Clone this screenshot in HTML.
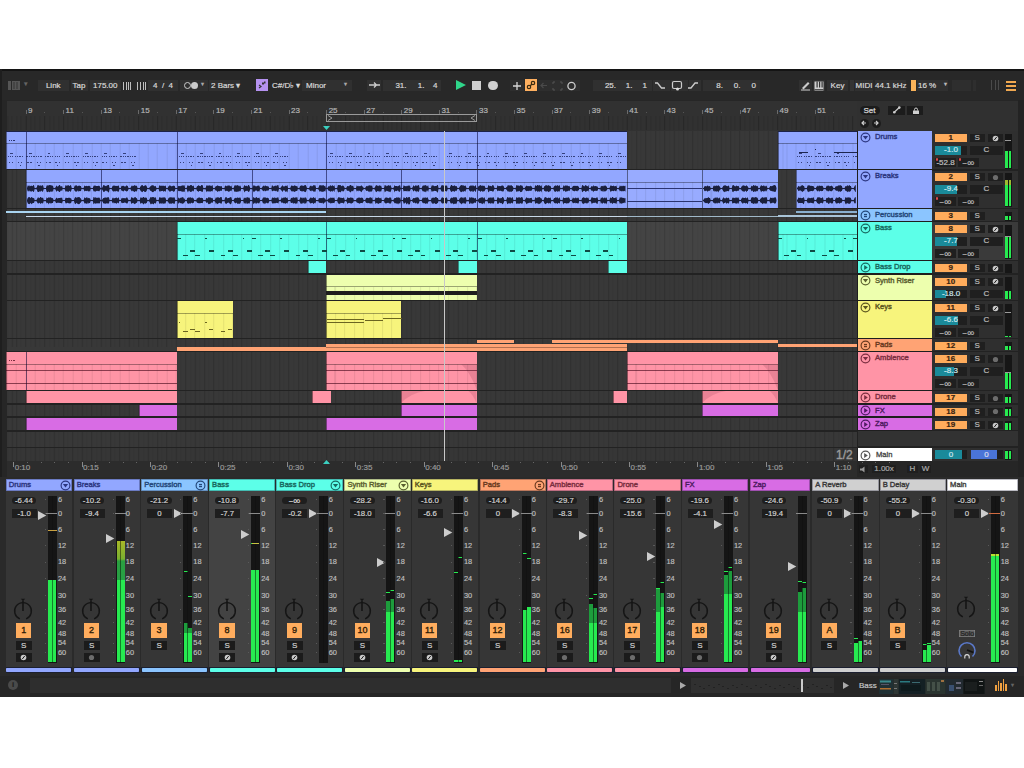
<!DOCTYPE html>
<html><head><meta charset="utf-8"><style>
html,body{margin:0;padding:0;background:#fff;width:1024px;height:768px;overflow:hidden}
body{position:relative;font-family:"Liberation Sans",sans-serif}
body>div,body>svg{position:absolute}
.t{white-space:nowrap;-webkit-text-stroke-width:0.2px}
</style></head><body>
<div style="left:0px;top:69px;width:1024px;height:628px;background:#262626;"></div>
<div style="left:0px;top:69px;width:1024px;height:31px;background:#282828;"></div>
<div style="left:0px;top:69px;width:1024px;height:1.6px;background:#141414;"></div>
<div style="left:0px;top:69px;width:1.5px;height:628px;background:#1e1e1e;"></div>
<div style="left:1018px;top:100px;width:6px;height:597px;background:#232323;"></div>
<div style="left:8px;top:81px;width:3px;height:9px;background:#555;"></div>
<div style="left:12px;top:81px;width:8px;height:9px;background:#555;"></div>
<div style="left:13px;top:82px;width:2px;height:7px;background:#444;"></div>
<div style="left:16px;top:82px;width:2px;height:7px;background:#444;"></div>
<div class="t" style="left:24px;top:80px;font-size:7px;color:#666;line-height:1;">▾</div>
<div style="left:38px;top:79.5px;width:30.5px;height:11.5px;background:#303030;"></div>
<div class="t" style="left:38px;top:79.5px;font-size:8px;color:#d8d8d8;width:30.5px;height:11.5px;line-height:11.5px;text-align:center;">Link</div>
<div style="left:70.5px;top:79.5px;width:17.0px;height:11.5px;background:#303030;"></div>
<div class="t" style="left:70.5px;top:79.5px;font-size:8px;color:#d8d8d8;width:17px;height:11.5px;line-height:11.5px;text-align:center;">Tap</div>
<div style="left:90px;top:79.5px;width:30.5px;height:11.5px;background:#303030;"></div>
<div class="t" style="left:90px;top:79.5px;font-size:8px;color:#d8d8d8;width:30.5px;height:11.5px;line-height:11.5px;text-align:center;">175.00</div>
<div style="left:123px;top:81.5px;width:1px;height:8px;background:#bdbdbd;"></div>
<div style="left:125.5px;top:81.5px;width:1px;height:8px;background:#bdbdbd;"></div>
<div style="left:128px;top:81.5px;width:1px;height:8px;background:#bdbdbd;"></div>
<div style="left:130px;top:81.5px;width:1px;height:8px;background:#bdbdbd;"></div>
<div style="left:137px;top:81.5px;width:1px;height:8px;background:#bdbdbd;"></div>
<div style="left:140px;top:81.5px;width:1px;height:8px;background:#bdbdbd;"></div>
<div style="left:142.5px;top:81.5px;width:1px;height:8px;background:#bdbdbd;"></div>
<div style="left:145px;top:81.5px;width:1px;height:8px;background:#bdbdbd;"></div>
<div style="left:148px;top:79.5px;width:30px;height:11.5px;background:#303030;"></div>
<div class="t" style="left:148px;top:79.5px;font-size:8px;color:#d8d8d8;width:30px;height:11.5px;line-height:11.5px;text-align:center;">4 &nbsp;/ &nbsp;4</div>
<div style="left:180px;top:79.5px;width:28px;height:11.5px;background:#303030;"></div>
<div style="left:183.5px;top:82px;width:5px;height:5px;border:1.2px solid #ccc;border-radius:50%"></div>
<div style="left:191px;top:82px;width:7px;height:7px;background:#ccc;border-radius:50%"></div>
<div class="t" style="left:201px;top:80.5px;font-size:6px;color:#aaa;line-height:1;">▾</div>
<div style="left:209px;top:79.5px;width:31px;height:11.5px;background:#303030;"></div>
<div class="t" style="left:211px;top:79.5px;font-size:8px;color:#d8d8d8;height:11.5px;line-height:11.5px;">2 Bars ▾</div>
<div style="left:256px;top:79px;width:12px;height:12px;background:#b592f0;"></div>
<svg style="left:257px;top:80px" width="10" height="10"><path d="M2 5 L4 6.5 L2 8" stroke="#333" stroke-width="1.2" fill="none"/><rect x="5" y="2.5" width="2" height="2" fill="#333"/><rect x="7" y="1.5" width="1.5" height="2" fill="#333"/></svg>
<div class="t" style="left:272px;top:79.5px;font-size:8px;color:#d8d8d8;height:11.5px;line-height:11.5px;">C#/D♭ ▾</div>
<div style="left:302px;top:79.5px;width:50px;height:11.5px;background:#303030;"></div>
<div class="t" style="left:306px;top:79.5px;font-size:8px;color:#d8d8d8;height:11.5px;line-height:11.5px;">Minor</div>
<div class="t" style="left:344px;top:80.5px;font-size:6px;color:#aaa;line-height:1;">▾</div>
<div style="left:367px;top:79.5px;width:14px;height:11.5px;background:#303030;"></div>
<svg style="left:368px;top:80px" width="13" height="10"><path d="M1 5 H12 M6 2.5 L8.5 5 L6 7.5" stroke="#ccc" stroke-width="1.3" fill="none"/></svg>
<div style="left:383px;top:79.5px;width:58px;height:11.5px;background:#303030;"></div>
<div class="t" style="left:386.5px;top:79.5px;font-size:8px;color:#d8d8d8;width:20px;height:11.5px;line-height:11.5px;text-align:right;">31.</div>
<div class="t" style="left:404.5px;top:79.5px;font-size:8px;color:#d8d8d8;width:20px;height:11.5px;line-height:11.5px;text-align:right;">1.</div>
<div class="t" style="left:417.5px;top:79.5px;font-size:8px;color:#d8d8d8;width:20px;height:11.5px;line-height:11.5px;text-align:right;">4</div>
<svg style="left:455px;top:79px" width="12" height="12"><path d="M1 1 L11 6 L1 11 Z" fill="#2fd68a"/></svg>
<div style="left:472px;top:80.5px;width:9px;height:9px;background:#cfcfcf;"></div>
<div style="left:488px;top:80.5px;width:9.5px;height:9.5px;background:#d0d0d0;border-radius:50%"></div>
<div style="left:510px;top:79.5px;width:14px;height:11.5px;background:#2e2e2e;"></div>
<svg style="left:512px;top:80.5px" width="10" height="10"><path d="M5 1 V9 M1 5 H9" stroke="#d8d8d8" stroke-width="1.3"/></svg>
<div style="left:525px;top:79px;width:12px;height:12px;background:#ffb060;"></div>
<svg style="left:526px;top:80px" width="10" height="10"><circle cx="3" cy="7" r="1.7" stroke="#3a2a10" stroke-width="1.2" fill="none"/><circle cx="7" cy="3" r="1.7" stroke="#3a2a10" stroke-width="1.2" fill="none"/><path d="M4 6 L6 4" stroke="#3a2a10" stroke-width="1.2"/></svg>
<div style="left:538px;top:79.5px;width:42px;height:11.5px;background:#2e2e2e;"></div>
<svg style="left:539px;top:81px" width="10" height="9"><path d="M8 4.5 H2 M4.5 2 L2 4.5 L4.5 7" stroke="#4a4a4a" stroke-width="1.2" fill="none"/></svg>
<svg style="left:552px;top:80.5px" width="11" height="10"><path d="M1 3 V1 H3 M8 1 H10 V3 M10 7 V9 H8 M3 9 H1 V7" stroke="#555" stroke-width="1" fill="none"/></svg>
<svg style="left:566px;top:80.5px" width="11" height="10"><circle cx="5.5" cy="5" r="3.6" stroke="#cfcfcf" stroke-width="1.3" fill="none"/></svg>
<div style="left:593px;top:79.5px;width:59px;height:11.5px;background:#303030;"></div>
<div class="t" style="left:596px;top:79.5px;font-size:8px;color:#d8d8d8;width:20px;height:11.5px;line-height:11.5px;text-align:right;">25.</div>
<div class="t" style="left:612.5px;top:79.5px;font-size:8px;color:#d8d8d8;width:20px;height:11.5px;line-height:11.5px;text-align:right;">1.</div>
<div class="t" style="left:627px;top:79.5px;font-size:8px;color:#d8d8d8;width:20px;height:11.5px;line-height:11.5px;text-align:right;">1</div>
<div style="left:653px;top:79.5px;width:17px;height:11.5px;background:#303030;"></div>
<svg style="left:654px;top:81px" width="12" height="9"><path d="M1 2 H3.5 L7.5 7 H11" stroke="#ccc" stroke-width="1.3" fill="none"/></svg>
<div style="left:671px;top:79.5px;width:17px;height:11.5px;background:#303030;"></div>
<svg style="left:671px;top:80px" width="14" height="12"><rect x="1.5" y="1.5" width="9" height="7" rx="1.5" stroke="#ccc" stroke-width="1.2" fill="none"/><circle cx="6.5" cy="9" r="1.5" fill="#ddd"/></svg>
<div style="left:689px;top:79.5px;width:12px;height:11.5px;background:#303030;"></div>
<svg style="left:687px;top:81px" width="12" height="9"><path d="M1 7 H4 L8 2 H11" stroke="#ccc" stroke-width="1.3" fill="none"/></svg>
<div style="left:703px;top:79.5px;width:57px;height:11.5px;background:#303030;"></div>
<div class="t" style="left:703px;top:79.5px;font-size:8px;color:#d8d8d8;width:20px;height:11.5px;line-height:11.5px;text-align:right;">8.</div>
<div class="t" style="left:720.5px;top:79.5px;font-size:8px;color:#d8d8d8;width:20px;height:11.5px;line-height:11.5px;text-align:right;">0.</div>
<div class="t" style="left:736px;top:79.5px;font-size:8px;color:#d8d8d8;width:20px;height:11.5px;line-height:11.5px;text-align:right;">0</div>
<div style="left:799px;top:79.5px;width:13px;height:11.5px;background:#303030;"></div>
<svg style="left:800px;top:80px" width="11" height="11"><path d="M2 8 L8 2 L9.5 3.5 L3.5 9.5 Z" fill="#ccc"/><rect x="1" y="9.5" width="9" height="1" fill="#ccc"/></svg>
<div style="left:813px;top:79.5px;width:12px;height:11.5px;background:#303030;"></div>
<svg style="left:814px;top:80.5px" width="10" height="10"><rect x="0.5" y="0.5" width="9" height="9" fill="#cfcfcf"/><rect x="2.5" y="0.5" width="1.2" height="6" fill="#333"/><rect x="5" y="0.5" width="1.2" height="6" fill="#333"/><rect x="7.5" y="0.5" width="1.2" height="6" fill="#333"/><rect x="0.5" y="8" width="9" height="0.8" fill="#333"/></svg>
<div style="left:827px;top:79.5px;width:21px;height:11.5px;background:#303030;"></div>
<div class="t" style="left:827px;top:79.5px;font-size:8px;color:#d8d8d8;width:21px;height:11.5px;line-height:11.5px;text-align:center;">Key</div>
<div style="left:850px;top:80px;width:4px;height:11px;background:#343434;"></div>
<div style="left:855px;top:79.5px;width:18px;height:11.5px;background:#303030;"></div>
<div class="t" style="left:855px;top:79.5px;font-size:8px;color:#d8d8d8;width:18px;height:11.5px;line-height:11.5px;text-align:center;">MIDI</div>
<div style="left:875px;top:79.5px;width:31px;height:11.5px;background:#303030;"></div>
<div class="t" style="left:875px;top:79.5px;font-size:8px;color:#d8d8d8;width:31px;height:11.5px;line-height:11.5px;text-align:center;">44.1 kHz</div>
<div style="left:911px;top:80px;width:5px;height:11px;background:#f9b35a;"></div>
<div style="left:917px;top:79.5px;width:31px;height:11.5px;background:#303030;"></div>
<div class="t" style="left:918px;top:79.5px;font-size:8px;color:#d8d8d8;height:11.5px;line-height:11.5px;">16 %</div>
<div class="t" style="left:944px;top:80.5px;font-size:6px;color:#bbb;line-height:1;">▾</div>
<div style="left:952px;top:79.5px;width:19px;height:11.5px;background:#2e2e2e;"></div>
<div style="left:973px;top:79.5px;width:3px;height:11.5px;background:#2e2e2e;"></div>
<div style="left:991px;top:80px;width:1.2px;height:10px;background:#4a4a4a;"></div>
<div style="left:994.5px;top:80px;width:1.2px;height:10px;background:#4a4a4a;"></div>
<div style="left:998px;top:80px;width:1.2px;height:10px;background:#4a4a4a;"></div>
<div style="left:1006px;top:81px;width:10px;height:1.6px;background:#f0a850;"></div>
<div style="left:1006px;top:85px;width:10px;height:1.6px;background:#f0a850;"></div>
<div style="left:1006px;top:89px;width:10px;height:1.6px;background:#f0a850;"></div>
<div style="left:7px;top:100.5px;width:850px;height:30px;background:#313131;"></div>
<div style="left:7px;top:116px;width:850px;height:14px;background-image:repeating-linear-gradient(90deg, rgba(0,0,0,0.10) 0px, rgba(0,0,0,0.10) 1px, transparent 1px, transparent 4.6975px);background-position:4.41px 0"></div>
<div style="left:857px;top:100.5px;width:161px;height:30px;background:#303030;"></div>
<div style="left:25.5px;top:109.5px;width:0.9px;height:4px;background:#6a6a6a;"></div>
<div style="left:44.29px;top:112px;width:0.9px;height:1.2px;background:#555;"></div>
<div class="t" style="left:28.0px;top:106.6px;font-size:8px;color:#b4b4b4;line-height:1;-webkit-text-stroke:0.2px #b4b4b4;">9</div>
<div style="left:63.08px;top:109.5px;width:0.9px;height:4px;background:#6a6a6a;"></div>
<div style="left:81.87px;top:112px;width:0.9px;height:1.2px;background:#555;"></div>
<div class="t" style="left:65.58px;top:106.6px;font-size:8px;color:#b4b4b4;line-height:1;-webkit-text-stroke:0.2px #b4b4b4;">11</div>
<div style="left:100.66px;top:109.5px;width:0.9px;height:4px;background:#6a6a6a;"></div>
<div style="left:119.45px;top:112px;width:0.9px;height:1.2px;background:#555;"></div>
<div class="t" style="left:103.16px;top:106.6px;font-size:8px;color:#b4b4b4;line-height:1;-webkit-text-stroke:0.2px #b4b4b4;">13</div>
<div style="left:138.24px;top:109.5px;width:0.9px;height:4px;background:#6a6a6a;"></div>
<div style="left:157.03px;top:112px;width:0.9px;height:1.2px;background:#555;"></div>
<div class="t" style="left:140.74px;top:106.6px;font-size:8px;color:#b4b4b4;line-height:1;-webkit-text-stroke:0.2px #b4b4b4;">15</div>
<div style="left:175.82px;top:109.5px;width:0.9px;height:4px;background:#6a6a6a;"></div>
<div style="left:194.61px;top:112px;width:0.9px;height:1.2px;background:#555;"></div>
<div class="t" style="left:178.32px;top:106.6px;font-size:8px;color:#b4b4b4;line-height:1;-webkit-text-stroke:0.2px #b4b4b4;">17</div>
<div style="left:213.4px;top:109.5px;width:0.9px;height:4px;background:#6a6a6a;"></div>
<div style="left:232.19px;top:112px;width:0.9px;height:1.2px;background:#555;"></div>
<div class="t" style="left:215.9px;top:106.6px;font-size:8px;color:#b4b4b4;line-height:1;-webkit-text-stroke:0.2px #b4b4b4;">19</div>
<div style="left:250.98px;top:109.5px;width:0.9px;height:4px;background:#6a6a6a;"></div>
<div style="left:269.77px;top:112px;width:0.9px;height:1.2px;background:#555;"></div>
<div class="t" style="left:253.48px;top:106.6px;font-size:8px;color:#b4b4b4;line-height:1;-webkit-text-stroke:0.2px #b4b4b4;">21</div>
<div style="left:288.56px;top:109.5px;width:0.9px;height:4px;background:#6a6a6a;"></div>
<div style="left:307.35px;top:112px;width:0.9px;height:1.2px;background:#555;"></div>
<div class="t" style="left:291.06px;top:106.6px;font-size:8px;color:#b4b4b4;line-height:1;-webkit-text-stroke:0.2px #b4b4b4;">23</div>
<div style="left:326.14px;top:109.5px;width:0.9px;height:4px;background:#6a6a6a;"></div>
<div style="left:344.93px;top:112px;width:0.9px;height:1.2px;background:#555;"></div>
<div class="t" style="left:328.64px;top:106.6px;font-size:8px;color:#b4b4b4;line-height:1;-webkit-text-stroke:0.2px #b4b4b4;">25</div>
<div style="left:363.72px;top:109.5px;width:0.9px;height:4px;background:#6a6a6a;"></div>
<div style="left:382.51px;top:112px;width:0.9px;height:1.2px;background:#555;"></div>
<div class="t" style="left:366.22px;top:106.6px;font-size:8px;color:#b4b4b4;line-height:1;-webkit-text-stroke:0.2px #b4b4b4;">27</div>
<div style="left:401.3px;top:109.5px;width:0.9px;height:4px;background:#6a6a6a;"></div>
<div style="left:420.09px;top:112px;width:0.9px;height:1.2px;background:#555;"></div>
<div class="t" style="left:403.8px;top:106.6px;font-size:8px;color:#b4b4b4;line-height:1;-webkit-text-stroke:0.2px #b4b4b4;">29</div>
<div style="left:438.88px;top:109.5px;width:0.9px;height:4px;background:#6a6a6a;"></div>
<div style="left:457.67px;top:112px;width:0.9px;height:1.2px;background:#555;"></div>
<div class="t" style="left:441.38px;top:106.6px;font-size:8px;color:#b4b4b4;line-height:1;-webkit-text-stroke:0.2px #b4b4b4;">31</div>
<div style="left:476.46px;top:109.5px;width:0.9px;height:4px;background:#6a6a6a;"></div>
<div style="left:495.25px;top:112px;width:0.9px;height:1.2px;background:#555;"></div>
<div class="t" style="left:478.96px;top:106.6px;font-size:8px;color:#b4b4b4;line-height:1;-webkit-text-stroke:0.2px #b4b4b4;">33</div>
<div style="left:514.04px;top:109.5px;width:0.9px;height:4px;background:#6a6a6a;"></div>
<div style="left:532.83px;top:112px;width:0.9px;height:1.2px;background:#555;"></div>
<div class="t" style="left:516.54px;top:106.6px;font-size:8px;color:#b4b4b4;line-height:1;-webkit-text-stroke:0.2px #b4b4b4;">35</div>
<div style="left:551.62px;top:109.5px;width:0.9px;height:4px;background:#6a6a6a;"></div>
<div style="left:570.41px;top:112px;width:0.9px;height:1.2px;background:#555;"></div>
<div class="t" style="left:554.12px;top:106.6px;font-size:8px;color:#b4b4b4;line-height:1;-webkit-text-stroke:0.2px #b4b4b4;">37</div>
<div style="left:589.2px;top:109.5px;width:0.9px;height:4px;background:#6a6a6a;"></div>
<div style="left:607.99px;top:112px;width:0.9px;height:1.2px;background:#555;"></div>
<div class="t" style="left:591.7px;top:106.6px;font-size:8px;color:#b4b4b4;line-height:1;-webkit-text-stroke:0.2px #b4b4b4;">39</div>
<div style="left:626.78px;top:109.5px;width:0.9px;height:4px;background:#6a6a6a;"></div>
<div style="left:645.57px;top:112px;width:0.9px;height:1.2px;background:#555;"></div>
<div class="t" style="left:629.28px;top:106.6px;font-size:8px;color:#b4b4b4;line-height:1;-webkit-text-stroke:0.2px #b4b4b4;">41</div>
<div style="left:664.36px;top:109.5px;width:0.9px;height:4px;background:#6a6a6a;"></div>
<div style="left:683.15px;top:112px;width:0.9px;height:1.2px;background:#555;"></div>
<div class="t" style="left:666.86px;top:106.6px;font-size:8px;color:#b4b4b4;line-height:1;-webkit-text-stroke:0.2px #b4b4b4;">43</div>
<div style="left:701.94px;top:109.5px;width:0.9px;height:4px;background:#6a6a6a;"></div>
<div style="left:720.73px;top:112px;width:0.9px;height:1.2px;background:#555;"></div>
<div class="t" style="left:704.44px;top:106.6px;font-size:8px;color:#b4b4b4;line-height:1;-webkit-text-stroke:0.2px #b4b4b4;">45</div>
<div style="left:739.52px;top:109.5px;width:0.9px;height:4px;background:#6a6a6a;"></div>
<div style="left:758.31px;top:112px;width:0.9px;height:1.2px;background:#555;"></div>
<div class="t" style="left:742.02px;top:106.6px;font-size:8px;color:#b4b4b4;line-height:1;-webkit-text-stroke:0.2px #b4b4b4;">47</div>
<div style="left:777.1px;top:109.5px;width:0.9px;height:4px;background:#6a6a6a;"></div>
<div style="left:795.89px;top:112px;width:0.9px;height:1.2px;background:#555;"></div>
<div class="t" style="left:779.6px;top:106.6px;font-size:8px;color:#b4b4b4;line-height:1;-webkit-text-stroke:0.2px #b4b4b4;">49</div>
<div style="left:814.68px;top:109.5px;width:0.9px;height:4px;background:#6a6a6a;"></div>
<div style="left:833.47px;top:112px;width:0.9px;height:1.2px;background:#555;"></div>
<div class="t" style="left:817.18px;top:106.6px;font-size:8px;color:#b4b4b4;line-height:1;-webkit-text-stroke:0.2px #b4b4b4;">51</div>
<div style="left:25.5px;top:116px;width:0.8px;height:14px;background:rgba(0,0,0,0.12);"></div>
<div style="left:44.29px;top:116px;width:0.8px;height:14px;background:rgba(0,0,0,0.12);"></div>
<div style="left:63.08px;top:116px;width:0.8px;height:14px;background:rgba(0,0,0,0.12);"></div>
<div style="left:81.87px;top:116px;width:0.8px;height:14px;background:rgba(0,0,0,0.12);"></div>
<div style="left:100.66px;top:116px;width:0.8px;height:14px;background:rgba(0,0,0,0.12);"></div>
<div style="left:119.45px;top:116px;width:0.8px;height:14px;background:rgba(0,0,0,0.12);"></div>
<div style="left:138.24px;top:116px;width:0.8px;height:14px;background:rgba(0,0,0,0.12);"></div>
<div style="left:157.03px;top:116px;width:0.8px;height:14px;background:rgba(0,0,0,0.12);"></div>
<div style="left:175.82px;top:116px;width:0.8px;height:14px;background:rgba(0,0,0,0.12);"></div>
<div style="left:194.61px;top:116px;width:0.8px;height:14px;background:rgba(0,0,0,0.12);"></div>
<div style="left:213.4px;top:116px;width:0.8px;height:14px;background:rgba(0,0,0,0.12);"></div>
<div style="left:232.19px;top:116px;width:0.8px;height:14px;background:rgba(0,0,0,0.12);"></div>
<div style="left:250.98px;top:116px;width:0.8px;height:14px;background:rgba(0,0,0,0.12);"></div>
<div style="left:269.77px;top:116px;width:0.8px;height:14px;background:rgba(0,0,0,0.12);"></div>
<div style="left:288.56px;top:116px;width:0.8px;height:14px;background:rgba(0,0,0,0.12);"></div>
<div style="left:307.35px;top:116px;width:0.8px;height:14px;background:rgba(0,0,0,0.12);"></div>
<div style="left:326.14px;top:116px;width:0.8px;height:14px;background:rgba(0,0,0,0.12);"></div>
<div style="left:344.93px;top:116px;width:0.8px;height:14px;background:rgba(0,0,0,0.12);"></div>
<div style="left:363.72px;top:116px;width:0.8px;height:14px;background:rgba(0,0,0,0.12);"></div>
<div style="left:382.51px;top:116px;width:0.8px;height:14px;background:rgba(0,0,0,0.12);"></div>
<div style="left:401.3px;top:116px;width:0.8px;height:14px;background:rgba(0,0,0,0.12);"></div>
<div style="left:420.09px;top:116px;width:0.8px;height:14px;background:rgba(0,0,0,0.12);"></div>
<div style="left:438.88px;top:116px;width:0.8px;height:14px;background:rgba(0,0,0,0.12);"></div>
<div style="left:457.67px;top:116px;width:0.8px;height:14px;background:rgba(0,0,0,0.12);"></div>
<div style="left:476.46px;top:116px;width:0.8px;height:14px;background:rgba(0,0,0,0.12);"></div>
<div style="left:495.25px;top:116px;width:0.8px;height:14px;background:rgba(0,0,0,0.12);"></div>
<div style="left:514.04px;top:116px;width:0.8px;height:14px;background:rgba(0,0,0,0.12);"></div>
<div style="left:532.83px;top:116px;width:0.8px;height:14px;background:rgba(0,0,0,0.12);"></div>
<div style="left:551.62px;top:116px;width:0.8px;height:14px;background:rgba(0,0,0,0.12);"></div>
<div style="left:570.41px;top:116px;width:0.8px;height:14px;background:rgba(0,0,0,0.12);"></div>
<div style="left:589.2px;top:116px;width:0.8px;height:14px;background:rgba(0,0,0,0.12);"></div>
<div style="left:607.99px;top:116px;width:0.8px;height:14px;background:rgba(0,0,0,0.12);"></div>
<div style="left:626.78px;top:116px;width:0.8px;height:14px;background:rgba(0,0,0,0.12);"></div>
<div style="left:645.57px;top:116px;width:0.8px;height:14px;background:rgba(0,0,0,0.12);"></div>
<div style="left:664.36px;top:116px;width:0.8px;height:14px;background:rgba(0,0,0,0.12);"></div>
<div style="left:683.15px;top:116px;width:0.8px;height:14px;background:rgba(0,0,0,0.12);"></div>
<div style="left:701.94px;top:116px;width:0.8px;height:14px;background:rgba(0,0,0,0.12);"></div>
<div style="left:720.73px;top:116px;width:0.8px;height:14px;background:rgba(0,0,0,0.12);"></div>
<div style="left:739.52px;top:116px;width:0.8px;height:14px;background:rgba(0,0,0,0.12);"></div>
<div style="left:758.31px;top:116px;width:0.8px;height:14px;background:rgba(0,0,0,0.12);"></div>
<div style="left:777.1px;top:116px;width:0.8px;height:14px;background:rgba(0,0,0,0.12);"></div>
<div style="left:795.89px;top:116px;width:0.8px;height:14px;background:rgba(0,0,0,0.12);"></div>
<div style="left:814.68px;top:116px;width:0.8px;height:14px;background:rgba(0,0,0,0.12);"></div>
<div style="left:833.47px;top:116px;width:0.8px;height:14px;background:rgba(0,0,0,0.12);"></div>
<div style="left:852.26px;top:116px;width:0.8px;height:14px;background:rgba(0,0,0,0.12);"></div>
<div style="left:326.4px;top:114px;width:150.6px;height:1px;background:#9a9a9a;"></div>
<div style="left:326.4px;top:121px;width:150.6px;height:1px;background:#9a9a9a;"></div>
<div style="left:326.4px;top:114px;width:1px;height:8px;background:#9a9a9a;"></div>
<div style="left:476.2px;top:114px;width:1px;height:8px;background:#9a9a9a;"></div>
<svg style="left:327px;top:114px" width="150" height="8"><path d="M1 1.5 L5 4 L1 6.5" stroke="#9a9a9a" fill="none"/><path d="M148 1.5 L144 4 L148 6.5" stroke="#9a9a9a" fill="none"/></svg>
<svg style="left:323px;top:126px" width="8" height="5"><path d="M0 0 H7 L3.5 4 Z" fill="#3ad0c0"/></svg>
<div style="left:859.5px;top:105.5px;width:20px;height:9px;background:#1c1c1c;border-radius:5px"></div>
<div class="t" style="left:859.5px;top:105.5px;font-size:8px;color:#d8d8d8;width:20px;height:9px;line-height:9px;text-align:center;-webkit-text-stroke:0.25px #d8d8d8;">Set</div>
<div style="left:888px;top:105.5px;width:16.5px;height:9px;background:#1c1c1c;"></div>
<svg style="left:892px;top:106px" width="10" height="8"><path d="M2.5 6 L7 1.8" stroke="#ccc" stroke-width="1.2"/><circle cx="2.3" cy="6.2" r="1.3" fill="#ccc"/><circle cx="7.3" cy="1.6" r="1.3" fill="#ccc"/></svg>
<div style="left:907px;top:105.5px;width:16px;height:9px;background:#1c1c1c;"></div>
<svg style="left:911.5px;top:106.5px" width="8" height="8"><rect x="1" y="3.5" width="6" height="3.5" fill="#d0d0d0"/><path d="M2.5 3.5 V2.5 A1.5 1.5 0 0 1 5.5 2.5 V3.5" stroke="#d0d0d0" stroke-width="1" fill="none"/></svg>
<div style="left:859.5px;top:118.5px;width:9px;height:9px;background:#1c1c1c;border-radius:50%"></div>
<div style="left:871.5px;top:118.5px;width:9px;height:9px;background:#1c1c1c;border-radius:50%"></div>
<svg style="left:861px;top:120px" width="6" height="6"><path d="M5 3 L1 3 M3 1 L1 3 L3 5" stroke="#ccc" stroke-width="1.2" fill="none"/></svg>
<svg style="left:873px;top:120px" width="6" height="6"><path d="M1 3 L5 3 M3 1 L5 3 L3 5" stroke="#ccc" stroke-width="1.2" fill="none"/></svg>
<div style="left:7px;top:130.5px;width:851px;height:330px;background:#222222;"></div>
<div style="left:7px;top:131px;width:850px;height:38px;background:#383838;background-image:repeating-linear-gradient(90deg, rgba(0,0,0,0.1) 0px, rgba(0,0,0,0.1) 1px, transparent 1px, transparent 9.395px),repeating-linear-gradient(90deg, rgba(0,0,0,0.05) 0px, rgba(0,0,0,0.05) 1px, transparent 1px, transparent 4.6975px);background-position:9.11px 0,4.41px 0;"></div>
<div style="left:7px;top:170px;width:850px;height:37.5px;background:#383838;background-image:repeating-linear-gradient(90deg, rgba(0,0,0,0.1) 0px, rgba(0,0,0,0.1) 1px, transparent 1px, transparent 9.395px),repeating-linear-gradient(90deg, rgba(0,0,0,0.05) 0px, rgba(0,0,0,0.05) 1px, transparent 1px, transparent 4.6975px);background-position:9.11px 0,4.41px 0;"></div>
<div style="left:7px;top:209px;width:850px;height:12px;background:#383838;background-image:repeating-linear-gradient(90deg, rgba(0,0,0,0.1) 0px, rgba(0,0,0,0.1) 1px, transparent 1px, transparent 9.395px),repeating-linear-gradient(90deg, rgba(0,0,0,0.05) 0px, rgba(0,0,0,0.05) 1px, transparent 1px, transparent 4.6975px);background-position:9.11px 0,4.41px 0;"></div>
<div style="left:7px;top:222px;width:850px;height:37.5px;background:#444444;background-image:repeating-linear-gradient(90deg, rgba(0,0,0,0.1) 0px, rgba(0,0,0,0.1) 1px, transparent 1px, transparent 9.395px),repeating-linear-gradient(90deg, rgba(0,0,0,0.05) 0px, rgba(0,0,0,0.05) 1px, transparent 1px, transparent 4.6975px);background-position:9.11px 0,4.41px 0;"></div>
<div style="left:7px;top:261px;width:850px;height:12px;background:#383838;background-image:repeating-linear-gradient(90deg, rgba(0,0,0,0.1) 0px, rgba(0,0,0,0.1) 1px, transparent 1px, transparent 9.395px),repeating-linear-gradient(90deg, rgba(0,0,0,0.05) 0px, rgba(0,0,0,0.05) 1px, transparent 1px, transparent 4.6975px);background-position:9.11px 0,4.41px 0;"></div>
<div style="left:7px;top:274.5px;width:850px;height:25.0px;background:#383838;background-image:repeating-linear-gradient(90deg, rgba(0,0,0,0.1) 0px, rgba(0,0,0,0.1) 1px, transparent 1px, transparent 9.395px),repeating-linear-gradient(90deg, rgba(0,0,0,0.05) 0px, rgba(0,0,0,0.05) 1px, transparent 1px, transparent 4.6975px);background-position:9.11px 0,4.41px 0;"></div>
<div style="left:7px;top:301px;width:850px;height:36.5px;background:#383838;background-image:repeating-linear-gradient(90deg, rgba(0,0,0,0.1) 0px, rgba(0,0,0,0.1) 1px, transparent 1px, transparent 9.395px),repeating-linear-gradient(90deg, rgba(0,0,0,0.05) 0px, rgba(0,0,0,0.05) 1px, transparent 1px, transparent 4.6975px);background-position:9.11px 0,4.41px 0;"></div>
<div style="left:7px;top:339px;width:850px;height:11.5px;background:#383838;background-image:repeating-linear-gradient(90deg, rgba(0,0,0,0.1) 0px, rgba(0,0,0,0.1) 1px, transparent 1px, transparent 9.395px),repeating-linear-gradient(90deg, rgba(0,0,0,0.05) 0px, rgba(0,0,0,0.05) 1px, transparent 1px, transparent 4.6975px);background-position:9.11px 0,4.41px 0;"></div>
<div style="left:7px;top:352px;width:850px;height:37.5px;background:#383838;background-image:repeating-linear-gradient(90deg, rgba(0,0,0,0.1) 0px, rgba(0,0,0,0.1) 1px, transparent 1px, transparent 9.395px),repeating-linear-gradient(90deg, rgba(0,0,0,0.05) 0px, rgba(0,0,0,0.05) 1px, transparent 1px, transparent 4.6975px);background-position:9.11px 0,4.41px 0;"></div>
<div style="left:7px;top:391px;width:850px;height:12px;background:#383838;background-image:repeating-linear-gradient(90deg, rgba(0,0,0,0.1) 0px, rgba(0,0,0,0.1) 1px, transparent 1px, transparent 9.395px),repeating-linear-gradient(90deg, rgba(0,0,0,0.05) 0px, rgba(0,0,0,0.05) 1px, transparent 1px, transparent 4.6975px);background-position:9.11px 0,4.41px 0;"></div>
<div style="left:7px;top:404.5px;width:850px;height:11.5px;background:#383838;background-image:repeating-linear-gradient(90deg, rgba(0,0,0,0.1) 0px, rgba(0,0,0,0.1) 1px, transparent 1px, transparent 9.395px),repeating-linear-gradient(90deg, rgba(0,0,0,0.05) 0px, rgba(0,0,0,0.05) 1px, transparent 1px, transparent 4.6975px);background-position:9.11px 0,4.41px 0;"></div>
<div style="left:7px;top:418px;width:850px;height:12px;background:#383838;background-image:repeating-linear-gradient(90deg, rgba(0,0,0,0.1) 0px, rgba(0,0,0,0.1) 1px, transparent 1px, transparent 9.395px),repeating-linear-gradient(90deg, rgba(0,0,0,0.05) 0px, rgba(0,0,0,0.05) 1px, transparent 1px, transparent 4.6975px);background-position:9.11px 0,4.41px 0;"></div>
<div style="left:7px;top:431.5px;width:850px;height:15px;background:#383838;background-image:repeating-linear-gradient(90deg, rgba(0,0,0,0.1) 0px, rgba(0,0,0,0.1) 1px, transparent 1px, transparent 9.395px),repeating-linear-gradient(90deg, rgba(0,0,0,0.05) 0px, rgba(0,0,0,0.05) 1px, transparent 1px, transparent 4.6975px);background-position:9.11px 0,4.41px 0;"></div>
<div style="left:7px;top:448px;width:850px;height:12.5px;background:#363636;background-image:repeating-linear-gradient(90deg, rgba(0,0,0,0.1) 0px, rgba(0,0,0,0.1) 1px, transparent 1px, transparent 9.395px),repeating-linear-gradient(90deg, rgba(0,0,0,0.05) 0px, rgba(0,0,0,0.05) 1px, transparent 1px, transparent 4.6975px);background-position:9.11px 0,4.41px 0;"></div>
<div style="left:6px;top:131px;width:621px;height:12px;background:#92a7ff;"></div>
<div style="left:6px;top:143px;width:621px;height:26px;background:#92a7ff;background-image:repeating-linear-gradient(90deg, rgba(0,0,0,0.08) 0px, rgba(0,0,0,0.08) 1px, transparent 1px, transparent 9.395px);background-position:0.71px 0;"></div>
<div style="left:6px;top:142.5px;width:621px;height:1px;background:rgba(0,0,0,0.35);"></div>
<div style="left:6px;top:131px;width:0.8px;height:38px;background:rgba(0,0,0,0.45);"></div>
<div style="left:25.5px;top:131px;width:0.8px;height:38px;background:rgba(0,0,50,0.55);"></div>
<div style="left:176.7px;top:131px;width:0.8px;height:38px;background:rgba(0,0,50,0.55);"></div>
<div style="left:326.4px;top:131px;width:0.8px;height:38px;background:rgba(0,0,50,0.55);"></div>
<div style="left:476.7px;top:131px;width:0.8px;height:38px;background:rgba(0,0,50,0.55);"></div>
<div style="left:778px;top:131px;width:79px;height:12px;background:#92a7ff;"></div>
<div style="left:778px;top:143px;width:79px;height:26px;background:#92a7ff;background-image:repeating-linear-gradient(90deg, rgba(0,0,0,0.08) 0px, rgba(0,0,0,0.08) 1px, transparent 1px, transparent 9.395px);background-position:8.49px 0;"></div>
<div style="left:778px;top:142.5px;width:79px;height:1px;background:rgba(0,0,0,0.35);"></div>
<div style="left:778px;top:131px;width:0.8px;height:38px;background:rgba(0,0,0,0.45);"></div>
<div style="left:9.0px;top:139.5px;width:1.3px;height:1.3px;background:#2a3470;"></div>
<div style="left:11.2px;top:139.5px;width:1.3px;height:1.3px;background:#2a3470;"></div>
<div style="left:13.4px;top:139.5px;width:1.3px;height:1.3px;background:#2a3470;"></div>
<div style="left:7.5px;top:156.2px;width:1.3px;height:1.1px;background:rgba(20,30,80,0.75);"></div>
<div style="left:9.85px;top:156.2px;width:1.3px;height:1.1px;background:rgba(20,30,80,0.75);"></div>
<div style="left:12.2px;top:156.2px;width:1.3px;height:1.1px;background:rgba(20,30,80,0.75);"></div>
<div style="left:14.55px;top:156.2px;width:1.3px;height:1.1px;background:rgba(20,30,80,0.75);"></div>
<div style="left:16.9px;top:156.2px;width:1.3px;height:1.1px;background:rgba(20,30,80,0.75);"></div>
<div style="left:19.25px;top:156.2px;width:1.3px;height:1.1px;background:rgba(20,30,80,0.75);"></div>
<div style="left:21.6px;top:156.2px;width:1.3px;height:1.1px;background:rgba(20,30,80,0.75);"></div>
<div style="left:26.3px;top:156.2px;width:1.3px;height:1.1px;background:rgba(20,30,80,0.75);"></div>
<div style="left:28.65px;top:156.2px;width:1.3px;height:1.1px;background:rgba(20,30,80,0.75);"></div>
<div style="left:31.0px;top:156.2px;width:1.3px;height:1.1px;background:rgba(20,30,80,0.75);"></div>
<div style="left:33.35px;top:156.2px;width:1.3px;height:1.1px;background:rgba(20,30,80,0.75);"></div>
<div style="left:35.7px;top:156.2px;width:1.3px;height:1.1px;background:rgba(20,30,80,0.75);"></div>
<div style="left:38.05px;top:156.2px;width:1.3px;height:1.1px;background:rgba(20,30,80,0.75);"></div>
<div style="left:40.4px;top:156.2px;width:1.3px;height:1.1px;background:rgba(20,30,80,0.75);"></div>
<div style="left:45.1px;top:156.2px;width:1.3px;height:1.1px;background:rgba(20,30,80,0.75);"></div>
<div style="left:47.45px;top:156.2px;width:1.3px;height:1.1px;background:rgba(20,30,80,0.75);"></div>
<div style="left:49.8px;top:156.2px;width:1.3px;height:1.1px;background:rgba(20,30,80,0.75);"></div>
<div style="left:52.15px;top:156.2px;width:1.3px;height:1.1px;background:rgba(20,30,80,0.75);"></div>
<div style="left:54.5px;top:156.2px;width:1.3px;height:1.1px;background:rgba(20,30,80,0.75);"></div>
<div style="left:56.85px;top:156.2px;width:1.3px;height:1.1px;background:rgba(20,30,80,0.75);"></div>
<div style="left:59.2px;top:156.2px;width:1.3px;height:1.1px;background:rgba(20,30,80,0.75);"></div>
<div style="left:63.9px;top:156.2px;width:1.3px;height:1.1px;background:rgba(20,30,80,0.75);"></div>
<div style="left:66.25px;top:156.2px;width:1.3px;height:1.1px;background:rgba(20,30,80,0.75);"></div>
<div style="left:68.6px;top:156.2px;width:1.3px;height:1.1px;background:rgba(20,30,80,0.75);"></div>
<div style="left:70.95px;top:156.2px;width:1.3px;height:1.1px;background:rgba(20,30,80,0.75);"></div>
<div style="left:73.3px;top:156.2px;width:1.3px;height:1.1px;background:rgba(20,30,80,0.75);"></div>
<div style="left:75.65px;top:156.2px;width:1.3px;height:1.1px;background:rgba(20,30,80,0.75);"></div>
<div style="left:78.0px;top:156.2px;width:1.3px;height:1.1px;background:rgba(20,30,80,0.75);"></div>
<div style="left:82.7px;top:156.2px;width:1.3px;height:1.1px;background:rgba(20,30,80,0.75);"></div>
<div style="left:85.05px;top:156.2px;width:1.3px;height:1.1px;background:rgba(20,30,80,0.75);"></div>
<div style="left:87.4px;top:156.2px;width:1.3px;height:1.1px;background:rgba(20,30,80,0.75);"></div>
<div style="left:89.75px;top:156.2px;width:1.3px;height:1.1px;background:rgba(20,30,80,0.75);"></div>
<div style="left:92.1px;top:156.2px;width:1.3px;height:1.1px;background:rgba(20,30,80,0.75);"></div>
<div style="left:94.45px;top:156.2px;width:1.3px;height:1.1px;background:rgba(20,30,80,0.75);"></div>
<div style="left:96.8px;top:156.2px;width:1.3px;height:1.1px;background:rgba(20,30,80,0.75);"></div>
<div style="left:101.5px;top:156.2px;width:1.3px;height:1.1px;background:rgba(20,30,80,0.75);"></div>
<div style="left:103.85px;top:156.2px;width:1.3px;height:1.1px;background:rgba(20,30,80,0.75);"></div>
<div style="left:106.2px;top:156.2px;width:1.3px;height:1.1px;background:rgba(20,30,80,0.75);"></div>
<div style="left:108.55px;top:156.2px;width:1.3px;height:1.1px;background:rgba(20,30,80,0.75);"></div>
<div style="left:110.9px;top:156.2px;width:1.3px;height:1.1px;background:rgba(20,30,80,0.75);"></div>
<div style="left:113.25px;top:156.2px;width:1.3px;height:1.1px;background:rgba(20,30,80,0.75);"></div>
<div style="left:115.6px;top:156.2px;width:1.3px;height:1.1px;background:rgba(20,30,80,0.75);"></div>
<div style="left:120.3px;top:156.2px;width:1.3px;height:1.1px;background:rgba(20,30,80,0.75);"></div>
<div style="left:122.65px;top:156.2px;width:1.3px;height:1.1px;background:rgba(20,30,80,0.75);"></div>
<div style="left:125.0px;top:156.2px;width:1.3px;height:1.1px;background:rgba(20,30,80,0.75);"></div>
<div style="left:127.35px;top:156.2px;width:1.3px;height:1.1px;background:rgba(20,30,80,0.75);"></div>
<div style="left:129.7px;top:156.2px;width:1.3px;height:1.1px;background:rgba(20,30,80,0.75);"></div>
<div style="left:132.05px;top:156.2px;width:1.3px;height:1.1px;background:rgba(20,30,80,0.75);"></div>
<div style="left:134.4px;top:156.2px;width:1.3px;height:1.1px;background:rgba(20,30,80,0.75);"></div>
<div style="left:10px;top:153.2px;width:2.8px;height:1.1px;background:rgba(20,30,80,0.75);"></div>
<div style="left:28.79px;top:153.2px;width:2.8px;height:1.1px;background:rgba(20,30,80,0.75);"></div>
<div style="left:47.58px;top:153.2px;width:2.8px;height:1.1px;background:rgba(20,30,80,0.75);"></div>
<div style="left:66.37px;top:153.2px;width:2.8px;height:1.1px;background:rgba(20,30,80,0.75);"></div>
<div style="left:85.16px;top:153.2px;width:2.8px;height:1.1px;background:rgba(20,30,80,0.75);"></div>
<div style="left:103.95px;top:153.2px;width:2.8px;height:1.1px;background:rgba(20,30,80,0.75);"></div>
<div style="left:122.74px;top:153.2px;width:2.8px;height:1.1px;background:rgba(20,30,80,0.75);"></div>
<div style="left:8.5px;top:162.2px;width:1.4px;height:1.2px;background:rgba(20,30,80,0.75);"></div>
<div style="left:11.7px;top:162.2px;width:1.4px;height:1.2px;background:rgba(20,30,80,0.75);"></div>
<div style="left:17.89px;top:162.2px;width:1.4px;height:1.2px;background:rgba(20,30,80,0.75);"></div>
<div style="left:21.09px;top:162.2px;width:1.4px;height:1.2px;background:rgba(20,30,80,0.75);"></div>
<div style="left:19.5px;top:165px;width:1.4px;height:1.2px;background:rgba(20,30,80,0.75);"></div>
<div style="left:27.29px;top:162.2px;width:1.4px;height:1.2px;background:rgba(20,30,80,0.75);"></div>
<div style="left:30.49px;top:162.2px;width:1.4px;height:1.2px;background:rgba(20,30,80,0.75);"></div>
<div style="left:36.69px;top:162.2px;width:1.4px;height:1.2px;background:rgba(20,30,80,0.75);"></div>
<div style="left:39.89px;top:162.2px;width:1.4px;height:1.2px;background:rgba(20,30,80,0.75);"></div>
<div style="left:38.29px;top:165px;width:1.4px;height:1.2px;background:rgba(20,30,80,0.75);"></div>
<div style="left:46.08px;top:162.2px;width:1.4px;height:1.2px;background:rgba(20,30,80,0.75);"></div>
<div style="left:49.28px;top:162.2px;width:1.4px;height:1.2px;background:rgba(20,30,80,0.75);"></div>
<div style="left:55.47px;top:162.2px;width:1.4px;height:1.2px;background:rgba(20,30,80,0.75);"></div>
<div style="left:58.67px;top:162.2px;width:1.4px;height:1.2px;background:rgba(20,30,80,0.75);"></div>
<div style="left:57.07px;top:165px;width:1.4px;height:1.2px;background:rgba(20,30,80,0.75);"></div>
<div style="left:64.87px;top:162.2px;width:1.4px;height:1.2px;background:rgba(20,30,80,0.75);"></div>
<div style="left:68.07px;top:162.2px;width:1.4px;height:1.2px;background:rgba(20,30,80,0.75);"></div>
<div style="left:74.26px;top:162.2px;width:1.4px;height:1.2px;background:rgba(20,30,80,0.75);"></div>
<div style="left:77.46px;top:162.2px;width:1.4px;height:1.2px;background:rgba(20,30,80,0.75);"></div>
<div style="left:75.86px;top:165px;width:1.4px;height:1.2px;background:rgba(20,30,80,0.75);"></div>
<div style="left:83.66px;top:162.2px;width:1.4px;height:1.2px;background:rgba(20,30,80,0.75);"></div>
<div style="left:86.86px;top:162.2px;width:1.4px;height:1.2px;background:rgba(20,30,80,0.75);"></div>
<div style="left:93.05px;top:162.2px;width:1.4px;height:1.2px;background:rgba(20,30,80,0.75);"></div>
<div style="left:96.25px;top:162.2px;width:1.4px;height:1.2px;background:rgba(20,30,80,0.75);"></div>
<div style="left:94.65px;top:165px;width:1.4px;height:1.2px;background:rgba(20,30,80,0.75);"></div>
<div style="left:102.45px;top:162.2px;width:1.4px;height:1.2px;background:rgba(20,30,80,0.75);"></div>
<div style="left:105.65px;top:162.2px;width:1.4px;height:1.2px;background:rgba(20,30,80,0.75);"></div>
<div style="left:111.84px;top:162.2px;width:1.4px;height:1.2px;background:rgba(20,30,80,0.75);"></div>
<div style="left:115.04px;top:162.2px;width:1.4px;height:1.2px;background:rgba(20,30,80,0.75);"></div>
<div style="left:113.44px;top:165px;width:1.4px;height:1.2px;background:rgba(20,30,80,0.75);"></div>
<div style="left:121.24px;top:162.2px;width:1.4px;height:1.2px;background:rgba(20,30,80,0.75);"></div>
<div style="left:124.44px;top:162.2px;width:1.4px;height:1.2px;background:rgba(20,30,80,0.75);"></div>
<div style="left:130.63px;top:162.2px;width:1.4px;height:1.2px;background:rgba(20,30,80,0.75);"></div>
<div style="left:133.83px;top:162.2px;width:1.4px;height:1.2px;background:rgba(20,30,80,0.75);"></div>
<div style="left:132.23px;top:165px;width:1.4px;height:1.2px;background:rgba(20,30,80,0.75);"></div>
<div style="left:178.5px;top:156.2px;width:1.3px;height:1.1px;background:rgba(20,30,80,0.75);"></div>
<div style="left:180.85px;top:156.2px;width:1.3px;height:1.1px;background:rgba(20,30,80,0.75);"></div>
<div style="left:183.2px;top:156.2px;width:1.3px;height:1.1px;background:rgba(20,30,80,0.75);"></div>
<div style="left:185.55px;top:156.2px;width:1.3px;height:1.1px;background:rgba(20,30,80,0.75);"></div>
<div style="left:187.9px;top:156.2px;width:1.3px;height:1.1px;background:rgba(20,30,80,0.75);"></div>
<div style="left:190.25px;top:156.2px;width:1.3px;height:1.1px;background:rgba(20,30,80,0.75);"></div>
<div style="left:192.6px;top:156.2px;width:1.3px;height:1.1px;background:rgba(20,30,80,0.75);"></div>
<div style="left:197.3px;top:156.2px;width:1.3px;height:1.1px;background:rgba(20,30,80,0.75);"></div>
<div style="left:199.65px;top:156.2px;width:1.3px;height:1.1px;background:rgba(20,30,80,0.75);"></div>
<div style="left:202.0px;top:156.2px;width:1.3px;height:1.1px;background:rgba(20,30,80,0.75);"></div>
<div style="left:204.35px;top:156.2px;width:1.3px;height:1.1px;background:rgba(20,30,80,0.75);"></div>
<div style="left:206.7px;top:156.2px;width:1.3px;height:1.1px;background:rgba(20,30,80,0.75);"></div>
<div style="left:209.05px;top:156.2px;width:1.3px;height:1.1px;background:rgba(20,30,80,0.75);"></div>
<div style="left:211.4px;top:156.2px;width:1.3px;height:1.1px;background:rgba(20,30,80,0.75);"></div>
<div style="left:216.1px;top:156.2px;width:1.3px;height:1.1px;background:rgba(20,30,80,0.75);"></div>
<div style="left:218.45px;top:156.2px;width:1.3px;height:1.1px;background:rgba(20,30,80,0.75);"></div>
<div style="left:220.8px;top:156.2px;width:1.3px;height:1.1px;background:rgba(20,30,80,0.75);"></div>
<div style="left:223.15px;top:156.2px;width:1.3px;height:1.1px;background:rgba(20,30,80,0.75);"></div>
<div style="left:225.5px;top:156.2px;width:1.3px;height:1.1px;background:rgba(20,30,80,0.75);"></div>
<div style="left:227.85px;top:156.2px;width:1.3px;height:1.1px;background:rgba(20,30,80,0.75);"></div>
<div style="left:230.2px;top:156.2px;width:1.3px;height:1.1px;background:rgba(20,30,80,0.75);"></div>
<div style="left:234.9px;top:156.2px;width:1.3px;height:1.1px;background:rgba(20,30,80,0.75);"></div>
<div style="left:237.25px;top:156.2px;width:1.3px;height:1.1px;background:rgba(20,30,80,0.75);"></div>
<div style="left:239.6px;top:156.2px;width:1.3px;height:1.1px;background:rgba(20,30,80,0.75);"></div>
<div style="left:241.95px;top:156.2px;width:1.3px;height:1.1px;background:rgba(20,30,80,0.75);"></div>
<div style="left:244.3px;top:156.2px;width:1.3px;height:1.1px;background:rgba(20,30,80,0.75);"></div>
<div style="left:246.65px;top:156.2px;width:1.3px;height:1.1px;background:rgba(20,30,80,0.75);"></div>
<div style="left:249.0px;top:156.2px;width:1.3px;height:1.1px;background:rgba(20,30,80,0.75);"></div>
<div style="left:253.7px;top:156.2px;width:1.3px;height:1.1px;background:rgba(20,30,80,0.75);"></div>
<div style="left:256.05px;top:156.2px;width:1.3px;height:1.1px;background:rgba(20,30,80,0.75);"></div>
<div style="left:258.4px;top:156.2px;width:1.3px;height:1.1px;background:rgba(20,30,80,0.75);"></div>
<div style="left:260.75px;top:156.2px;width:1.3px;height:1.1px;background:rgba(20,30,80,0.75);"></div>
<div style="left:263.1px;top:156.2px;width:1.3px;height:1.1px;background:rgba(20,30,80,0.75);"></div>
<div style="left:265.45px;top:156.2px;width:1.3px;height:1.1px;background:rgba(20,30,80,0.75);"></div>
<div style="left:267.8px;top:156.2px;width:1.3px;height:1.1px;background:rgba(20,30,80,0.75);"></div>
<div style="left:272.5px;top:156.2px;width:1.3px;height:1.1px;background:rgba(20,30,80,0.75);"></div>
<div style="left:274.85px;top:156.2px;width:1.3px;height:1.1px;background:rgba(20,30,80,0.75);"></div>
<div style="left:277.2px;top:156.2px;width:1.3px;height:1.1px;background:rgba(20,30,80,0.75);"></div>
<div style="left:279.55px;top:156.2px;width:1.3px;height:1.1px;background:rgba(20,30,80,0.75);"></div>
<div style="left:281.9px;top:156.2px;width:1.3px;height:1.1px;background:rgba(20,30,80,0.75);"></div>
<div style="left:284.25px;top:156.2px;width:1.3px;height:1.1px;background:rgba(20,30,80,0.75);"></div>
<div style="left:286.6px;top:156.2px;width:1.3px;height:1.1px;background:rgba(20,30,80,0.75);"></div>
<div style="left:181px;top:153.2px;width:2.8px;height:1.1px;background:rgba(20,30,80,0.75);"></div>
<div style="left:199.79px;top:153.2px;width:2.8px;height:1.1px;background:rgba(20,30,80,0.75);"></div>
<div style="left:218.58px;top:153.2px;width:2.8px;height:1.1px;background:rgba(20,30,80,0.75);"></div>
<div style="left:237.37px;top:153.2px;width:2.8px;height:1.1px;background:rgba(20,30,80,0.75);"></div>
<div style="left:256.16px;top:153.2px;width:2.8px;height:1.1px;background:rgba(20,30,80,0.75);"></div>
<div style="left:274.95px;top:153.2px;width:2.8px;height:1.1px;background:rgba(20,30,80,0.75);"></div>
<div style="left:179.5px;top:162.2px;width:1.4px;height:1.2px;background:rgba(20,30,80,0.75);"></div>
<div style="left:182.7px;top:162.2px;width:1.4px;height:1.2px;background:rgba(20,30,80,0.75);"></div>
<div style="left:188.9px;top:162.2px;width:1.4px;height:1.2px;background:rgba(20,30,80,0.75);"></div>
<div style="left:192.09px;top:162.2px;width:1.4px;height:1.2px;background:rgba(20,30,80,0.75);"></div>
<div style="left:190.5px;top:165px;width:1.4px;height:1.2px;background:rgba(20,30,80,0.75);"></div>
<div style="left:198.29px;top:162.2px;width:1.4px;height:1.2px;background:rgba(20,30,80,0.75);"></div>
<div style="left:201.49px;top:162.2px;width:1.4px;height:1.2px;background:rgba(20,30,80,0.75);"></div>
<div style="left:207.69px;top:162.2px;width:1.4px;height:1.2px;background:rgba(20,30,80,0.75);"></div>
<div style="left:210.89px;top:162.2px;width:1.4px;height:1.2px;background:rgba(20,30,80,0.75);"></div>
<div style="left:209.29px;top:165px;width:1.4px;height:1.2px;background:rgba(20,30,80,0.75);"></div>
<div style="left:217.08px;top:162.2px;width:1.4px;height:1.2px;background:rgba(20,30,80,0.75);"></div>
<div style="left:220.28px;top:162.2px;width:1.4px;height:1.2px;background:rgba(20,30,80,0.75);"></div>
<div style="left:226.48px;top:162.2px;width:1.4px;height:1.2px;background:rgba(20,30,80,0.75);"></div>
<div style="left:229.68px;top:162.2px;width:1.4px;height:1.2px;background:rgba(20,30,80,0.75);"></div>
<div style="left:228.08px;top:165px;width:1.4px;height:1.2px;background:rgba(20,30,80,0.75);"></div>
<div style="left:235.87px;top:162.2px;width:1.4px;height:1.2px;background:rgba(20,30,80,0.75);"></div>
<div style="left:239.07px;top:162.2px;width:1.4px;height:1.2px;background:rgba(20,30,80,0.75);"></div>
<div style="left:245.27px;top:162.2px;width:1.4px;height:1.2px;background:rgba(20,30,80,0.75);"></div>
<div style="left:248.47px;top:162.2px;width:1.4px;height:1.2px;background:rgba(20,30,80,0.75);"></div>
<div style="left:246.87px;top:165px;width:1.4px;height:1.2px;background:rgba(20,30,80,0.75);"></div>
<div style="left:254.66px;top:162.2px;width:1.4px;height:1.2px;background:rgba(20,30,80,0.75);"></div>
<div style="left:257.86px;top:162.2px;width:1.4px;height:1.2px;background:rgba(20,30,80,0.75);"></div>
<div style="left:264.06px;top:162.2px;width:1.4px;height:1.2px;background:rgba(20,30,80,0.75);"></div>
<div style="left:267.26px;top:162.2px;width:1.4px;height:1.2px;background:rgba(20,30,80,0.75);"></div>
<div style="left:265.66px;top:165px;width:1.4px;height:1.2px;background:rgba(20,30,80,0.75);"></div>
<div style="left:273.45px;top:162.2px;width:1.4px;height:1.2px;background:rgba(20,30,80,0.75);"></div>
<div style="left:276.65px;top:162.2px;width:1.4px;height:1.2px;background:rgba(20,30,80,0.75);"></div>
<div style="left:282.85px;top:162.2px;width:1.4px;height:1.2px;background:rgba(20,30,80,0.75);"></div>
<div style="left:286.05px;top:162.2px;width:1.4px;height:1.2px;background:rgba(20,30,80,0.75);"></div>
<div style="left:284.45px;top:165px;width:1.4px;height:1.2px;background:rgba(20,30,80,0.75);"></div>
<div style="left:327.5px;top:156.2px;width:1.3px;height:1.1px;background:rgba(20,30,80,0.75);"></div>
<div style="left:329.85px;top:156.2px;width:1.3px;height:1.1px;background:rgba(20,30,80,0.75);"></div>
<div style="left:332.2px;top:156.2px;width:1.3px;height:1.1px;background:rgba(20,30,80,0.75);"></div>
<div style="left:334.55px;top:156.2px;width:1.3px;height:1.1px;background:rgba(20,30,80,0.75);"></div>
<div style="left:336.9px;top:156.2px;width:1.3px;height:1.1px;background:rgba(20,30,80,0.75);"></div>
<div style="left:339.25px;top:156.2px;width:1.3px;height:1.1px;background:rgba(20,30,80,0.75);"></div>
<div style="left:341.6px;top:156.2px;width:1.3px;height:1.1px;background:rgba(20,30,80,0.75);"></div>
<div style="left:346.3px;top:156.2px;width:1.3px;height:1.1px;background:rgba(20,30,80,0.75);"></div>
<div style="left:348.65px;top:156.2px;width:1.3px;height:1.1px;background:rgba(20,30,80,0.75);"></div>
<div style="left:351.0px;top:156.2px;width:1.3px;height:1.1px;background:rgba(20,30,80,0.75);"></div>
<div style="left:353.35px;top:156.2px;width:1.3px;height:1.1px;background:rgba(20,30,80,0.75);"></div>
<div style="left:355.7px;top:156.2px;width:1.3px;height:1.1px;background:rgba(20,30,80,0.75);"></div>
<div style="left:358.05px;top:156.2px;width:1.3px;height:1.1px;background:rgba(20,30,80,0.75);"></div>
<div style="left:360.4px;top:156.2px;width:1.3px;height:1.1px;background:rgba(20,30,80,0.75);"></div>
<div style="left:365.1px;top:156.2px;width:1.3px;height:1.1px;background:rgba(20,30,80,0.75);"></div>
<div style="left:367.45px;top:156.2px;width:1.3px;height:1.1px;background:rgba(20,30,80,0.75);"></div>
<div style="left:369.8px;top:156.2px;width:1.3px;height:1.1px;background:rgba(20,30,80,0.75);"></div>
<div style="left:372.15px;top:156.2px;width:1.3px;height:1.1px;background:rgba(20,30,80,0.75);"></div>
<div style="left:374.5px;top:156.2px;width:1.3px;height:1.1px;background:rgba(20,30,80,0.75);"></div>
<div style="left:376.85px;top:156.2px;width:1.3px;height:1.1px;background:rgba(20,30,80,0.75);"></div>
<div style="left:379.2px;top:156.2px;width:1.3px;height:1.1px;background:rgba(20,30,80,0.75);"></div>
<div style="left:383.9px;top:156.2px;width:1.3px;height:1.1px;background:rgba(20,30,80,0.75);"></div>
<div style="left:386.25px;top:156.2px;width:1.3px;height:1.1px;background:rgba(20,30,80,0.75);"></div>
<div style="left:388.6px;top:156.2px;width:1.3px;height:1.1px;background:rgba(20,30,80,0.75);"></div>
<div style="left:390.95px;top:156.2px;width:1.3px;height:1.1px;background:rgba(20,30,80,0.75);"></div>
<div style="left:393.3px;top:156.2px;width:1.3px;height:1.1px;background:rgba(20,30,80,0.75);"></div>
<div style="left:395.65px;top:156.2px;width:1.3px;height:1.1px;background:rgba(20,30,80,0.75);"></div>
<div style="left:398.0px;top:156.2px;width:1.3px;height:1.1px;background:rgba(20,30,80,0.75);"></div>
<div style="left:402.7px;top:156.2px;width:1.3px;height:1.1px;background:rgba(20,30,80,0.75);"></div>
<div style="left:405.05px;top:156.2px;width:1.3px;height:1.1px;background:rgba(20,30,80,0.75);"></div>
<div style="left:407.4px;top:156.2px;width:1.3px;height:1.1px;background:rgba(20,30,80,0.75);"></div>
<div style="left:409.75px;top:156.2px;width:1.3px;height:1.1px;background:rgba(20,30,80,0.75);"></div>
<div style="left:412.1px;top:156.2px;width:1.3px;height:1.1px;background:rgba(20,30,80,0.75);"></div>
<div style="left:414.45px;top:156.2px;width:1.3px;height:1.1px;background:rgba(20,30,80,0.75);"></div>
<div style="left:416.8px;top:156.2px;width:1.3px;height:1.1px;background:rgba(20,30,80,0.75);"></div>
<div style="left:421.5px;top:156.2px;width:1.3px;height:1.1px;background:rgba(20,30,80,0.75);"></div>
<div style="left:423.85px;top:156.2px;width:1.3px;height:1.1px;background:rgba(20,30,80,0.75);"></div>
<div style="left:426.2px;top:156.2px;width:1.3px;height:1.1px;background:rgba(20,30,80,0.75);"></div>
<div style="left:428.55px;top:156.2px;width:1.3px;height:1.1px;background:rgba(20,30,80,0.75);"></div>
<div style="left:430.9px;top:156.2px;width:1.3px;height:1.1px;background:rgba(20,30,80,0.75);"></div>
<div style="left:433.25px;top:156.2px;width:1.3px;height:1.1px;background:rgba(20,30,80,0.75);"></div>
<div style="left:435.6px;top:156.2px;width:1.3px;height:1.1px;background:rgba(20,30,80,0.75);"></div>
<div style="left:330px;top:153.2px;width:2.8px;height:1.1px;background:rgba(20,30,80,0.75);"></div>
<div style="left:348.79px;top:153.2px;width:2.8px;height:1.1px;background:rgba(20,30,80,0.75);"></div>
<div style="left:367.58px;top:153.2px;width:2.8px;height:1.1px;background:rgba(20,30,80,0.75);"></div>
<div style="left:386.37px;top:153.2px;width:2.8px;height:1.1px;background:rgba(20,30,80,0.75);"></div>
<div style="left:405.16px;top:153.2px;width:2.8px;height:1.1px;background:rgba(20,30,80,0.75);"></div>
<div style="left:423.95px;top:153.2px;width:2.8px;height:1.1px;background:rgba(20,30,80,0.75);"></div>
<div style="left:328.5px;top:162.2px;width:1.4px;height:1.2px;background:rgba(20,30,80,0.75);"></div>
<div style="left:331.7px;top:162.2px;width:1.4px;height:1.2px;background:rgba(20,30,80,0.75);"></div>
<div style="left:337.89px;top:162.2px;width:1.4px;height:1.2px;background:rgba(20,30,80,0.75);"></div>
<div style="left:341.09px;top:162.2px;width:1.4px;height:1.2px;background:rgba(20,30,80,0.75);"></div>
<div style="left:339.5px;top:165px;width:1.4px;height:1.2px;background:rgba(20,30,80,0.75);"></div>
<div style="left:347.29px;top:162.2px;width:1.4px;height:1.2px;background:rgba(20,30,80,0.75);"></div>
<div style="left:350.49px;top:162.2px;width:1.4px;height:1.2px;background:rgba(20,30,80,0.75);"></div>
<div style="left:356.68px;top:162.2px;width:1.4px;height:1.2px;background:rgba(20,30,80,0.75);"></div>
<div style="left:359.88px;top:162.2px;width:1.4px;height:1.2px;background:rgba(20,30,80,0.75);"></div>
<div style="left:358.28px;top:165px;width:1.4px;height:1.2px;background:rgba(20,30,80,0.75);"></div>
<div style="left:366.08px;top:162.2px;width:1.4px;height:1.2px;background:rgba(20,30,80,0.75);"></div>
<div style="left:369.28px;top:162.2px;width:1.4px;height:1.2px;background:rgba(20,30,80,0.75);"></div>
<div style="left:375.47px;top:162.2px;width:1.4px;height:1.2px;background:rgba(20,30,80,0.75);"></div>
<div style="left:378.67px;top:162.2px;width:1.4px;height:1.2px;background:rgba(20,30,80,0.75);"></div>
<div style="left:377.07px;top:165px;width:1.4px;height:1.2px;background:rgba(20,30,80,0.75);"></div>
<div style="left:384.87px;top:162.2px;width:1.4px;height:1.2px;background:rgba(20,30,80,0.75);"></div>
<div style="left:388.07px;top:162.2px;width:1.4px;height:1.2px;background:rgba(20,30,80,0.75);"></div>
<div style="left:394.26px;top:162.2px;width:1.4px;height:1.2px;background:rgba(20,30,80,0.75);"></div>
<div style="left:397.46px;top:162.2px;width:1.4px;height:1.2px;background:rgba(20,30,80,0.75);"></div>
<div style="left:395.86px;top:165px;width:1.4px;height:1.2px;background:rgba(20,30,80,0.75);"></div>
<div style="left:403.66px;top:162.2px;width:1.4px;height:1.2px;background:rgba(20,30,80,0.75);"></div>
<div style="left:406.86px;top:162.2px;width:1.4px;height:1.2px;background:rgba(20,30,80,0.75);"></div>
<div style="left:413.05px;top:162.2px;width:1.4px;height:1.2px;background:rgba(20,30,80,0.75);"></div>
<div style="left:416.25px;top:162.2px;width:1.4px;height:1.2px;background:rgba(20,30,80,0.75);"></div>
<div style="left:414.65px;top:165px;width:1.4px;height:1.2px;background:rgba(20,30,80,0.75);"></div>
<div style="left:422.45px;top:162.2px;width:1.4px;height:1.2px;background:rgba(20,30,80,0.75);"></div>
<div style="left:425.65px;top:162.2px;width:1.4px;height:1.2px;background:rgba(20,30,80,0.75);"></div>
<div style="left:431.84px;top:162.2px;width:1.4px;height:1.2px;background:rgba(20,30,80,0.75);"></div>
<div style="left:435.04px;top:162.2px;width:1.4px;height:1.2px;background:rgba(20,30,80,0.75);"></div>
<div style="left:433.44px;top:165px;width:1.4px;height:1.2px;background:rgba(20,30,80,0.75);"></div>
<div style="left:446.5px;top:156.2px;width:1.3px;height:1.1px;background:rgba(20,30,80,0.75);"></div>
<div style="left:448.85px;top:156.2px;width:1.3px;height:1.1px;background:rgba(20,30,80,0.75);"></div>
<div style="left:451.2px;top:156.2px;width:1.3px;height:1.1px;background:rgba(20,30,80,0.75);"></div>
<div style="left:453.55px;top:156.2px;width:1.3px;height:1.1px;background:rgba(20,30,80,0.75);"></div>
<div style="left:455.9px;top:156.2px;width:1.3px;height:1.1px;background:rgba(20,30,80,0.75);"></div>
<div style="left:458.25px;top:156.2px;width:1.3px;height:1.1px;background:rgba(20,30,80,0.75);"></div>
<div style="left:460.6px;top:156.2px;width:1.3px;height:1.1px;background:rgba(20,30,80,0.75);"></div>
<div style="left:465.3px;top:156.2px;width:1.3px;height:1.1px;background:rgba(20,30,80,0.75);"></div>
<div style="left:467.65px;top:156.2px;width:1.3px;height:1.1px;background:rgba(20,30,80,0.75);"></div>
<div style="left:470.0px;top:156.2px;width:1.3px;height:1.1px;background:rgba(20,30,80,0.75);"></div>
<div style="left:472.35px;top:156.2px;width:1.3px;height:1.1px;background:rgba(20,30,80,0.75);"></div>
<div style="left:474.7px;top:156.2px;width:1.3px;height:1.1px;background:rgba(20,30,80,0.75);"></div>
<div style="left:477.05px;top:156.2px;width:1.3px;height:1.1px;background:rgba(20,30,80,0.75);"></div>
<div style="left:479.4px;top:156.2px;width:1.3px;height:1.1px;background:rgba(20,30,80,0.75);"></div>
<div style="left:484.1px;top:156.2px;width:1.3px;height:1.1px;background:rgba(20,30,80,0.75);"></div>
<div style="left:486.45px;top:156.2px;width:1.3px;height:1.1px;background:rgba(20,30,80,0.75);"></div>
<div style="left:488.8px;top:156.2px;width:1.3px;height:1.1px;background:rgba(20,30,80,0.75);"></div>
<div style="left:491.15px;top:156.2px;width:1.3px;height:1.1px;background:rgba(20,30,80,0.75);"></div>
<div style="left:493.5px;top:156.2px;width:1.3px;height:1.1px;background:rgba(20,30,80,0.75);"></div>
<div style="left:495.85px;top:156.2px;width:1.3px;height:1.1px;background:rgba(20,30,80,0.75);"></div>
<div style="left:498.2px;top:156.2px;width:1.3px;height:1.1px;background:rgba(20,30,80,0.75);"></div>
<div style="left:502.9px;top:156.2px;width:1.3px;height:1.1px;background:rgba(20,30,80,0.75);"></div>
<div style="left:505.25px;top:156.2px;width:1.3px;height:1.1px;background:rgba(20,30,80,0.75);"></div>
<div style="left:507.6px;top:156.2px;width:1.3px;height:1.1px;background:rgba(20,30,80,0.75);"></div>
<div style="left:509.95px;top:156.2px;width:1.3px;height:1.1px;background:rgba(20,30,80,0.75);"></div>
<div style="left:512.3px;top:156.2px;width:1.3px;height:1.1px;background:rgba(20,30,80,0.75);"></div>
<div style="left:514.65px;top:156.2px;width:1.3px;height:1.1px;background:rgba(20,30,80,0.75);"></div>
<div style="left:517.0px;top:156.2px;width:1.3px;height:1.1px;background:rgba(20,30,80,0.75);"></div>
<div style="left:521.7px;top:156.2px;width:1.3px;height:1.1px;background:rgba(20,30,80,0.75);"></div>
<div style="left:524.05px;top:156.2px;width:1.3px;height:1.1px;background:rgba(20,30,80,0.75);"></div>
<div style="left:526.4px;top:156.2px;width:1.3px;height:1.1px;background:rgba(20,30,80,0.75);"></div>
<div style="left:528.75px;top:156.2px;width:1.3px;height:1.1px;background:rgba(20,30,80,0.75);"></div>
<div style="left:531.1px;top:156.2px;width:1.3px;height:1.1px;background:rgba(20,30,80,0.75);"></div>
<div style="left:533.45px;top:156.2px;width:1.3px;height:1.1px;background:rgba(20,30,80,0.75);"></div>
<div style="left:535.8px;top:156.2px;width:1.3px;height:1.1px;background:rgba(20,30,80,0.75);"></div>
<div style="left:540.5px;top:156.2px;width:1.3px;height:1.1px;background:rgba(20,30,80,0.75);"></div>
<div style="left:542.85px;top:156.2px;width:1.3px;height:1.1px;background:rgba(20,30,80,0.75);"></div>
<div style="left:545.2px;top:156.2px;width:1.3px;height:1.1px;background:rgba(20,30,80,0.75);"></div>
<div style="left:547.55px;top:156.2px;width:1.3px;height:1.1px;background:rgba(20,30,80,0.75);"></div>
<div style="left:549.9px;top:156.2px;width:1.3px;height:1.1px;background:rgba(20,30,80,0.75);"></div>
<div style="left:552.25px;top:156.2px;width:1.3px;height:1.1px;background:rgba(20,30,80,0.75);"></div>
<div style="left:554.6px;top:156.2px;width:1.3px;height:1.1px;background:rgba(20,30,80,0.75);"></div>
<div style="left:559.3px;top:156.2px;width:1.3px;height:1.1px;background:rgba(20,30,80,0.75);"></div>
<div style="left:561.65px;top:156.2px;width:1.3px;height:1.1px;background:rgba(20,30,80,0.75);"></div>
<div style="left:564.0px;top:156.2px;width:1.3px;height:1.1px;background:rgba(20,30,80,0.75);"></div>
<div style="left:566.35px;top:156.2px;width:1.3px;height:1.1px;background:rgba(20,30,80,0.75);"></div>
<div style="left:568.7px;top:156.2px;width:1.3px;height:1.1px;background:rgba(20,30,80,0.75);"></div>
<div style="left:571.05px;top:156.2px;width:1.3px;height:1.1px;background:rgba(20,30,80,0.75);"></div>
<div style="left:573.4px;top:156.2px;width:1.3px;height:1.1px;background:rgba(20,30,80,0.75);"></div>
<div style="left:578.1px;top:156.2px;width:1.3px;height:1.1px;background:rgba(20,30,80,0.75);"></div>
<div style="left:580.45px;top:156.2px;width:1.3px;height:1.1px;background:rgba(20,30,80,0.75);"></div>
<div style="left:582.8px;top:156.2px;width:1.3px;height:1.1px;background:rgba(20,30,80,0.75);"></div>
<div style="left:585.15px;top:156.2px;width:1.3px;height:1.1px;background:rgba(20,30,80,0.75);"></div>
<div style="left:587.5px;top:156.2px;width:1.3px;height:1.1px;background:rgba(20,30,80,0.75);"></div>
<div style="left:589.85px;top:156.2px;width:1.3px;height:1.1px;background:rgba(20,30,80,0.75);"></div>
<div style="left:592.2px;top:156.2px;width:1.3px;height:1.1px;background:rgba(20,30,80,0.75);"></div>
<div style="left:596.9px;top:156.2px;width:1.3px;height:1.1px;background:rgba(20,30,80,0.75);"></div>
<div style="left:599.25px;top:156.2px;width:1.3px;height:1.1px;background:rgba(20,30,80,0.75);"></div>
<div style="left:601.6px;top:156.2px;width:1.3px;height:1.1px;background:rgba(20,30,80,0.75);"></div>
<div style="left:603.95px;top:156.2px;width:1.3px;height:1.1px;background:rgba(20,30,80,0.75);"></div>
<div style="left:606.3px;top:156.2px;width:1.3px;height:1.1px;background:rgba(20,30,80,0.75);"></div>
<div style="left:608.65px;top:156.2px;width:1.3px;height:1.1px;background:rgba(20,30,80,0.75);"></div>
<div style="left:611.0px;top:156.2px;width:1.3px;height:1.1px;background:rgba(20,30,80,0.75);"></div>
<div style="left:615.7px;top:156.2px;width:1.3px;height:1.1px;background:rgba(20,30,80,0.75);"></div>
<div style="left:618.05px;top:156.2px;width:1.3px;height:1.1px;background:rgba(20,30,80,0.75);"></div>
<div style="left:620.4px;top:156.2px;width:1.3px;height:1.1px;background:rgba(20,30,80,0.75);"></div>
<div style="left:622.75px;top:156.2px;width:1.3px;height:1.1px;background:rgba(20,30,80,0.75);"></div>
<div style="left:625.1px;top:156.2px;width:1.3px;height:1.1px;background:rgba(20,30,80,0.75);"></div>
<div style="left:449px;top:153.2px;width:2.8px;height:1.1px;background:rgba(20,30,80,0.75);"></div>
<div style="left:467.79px;top:153.2px;width:2.8px;height:1.1px;background:rgba(20,30,80,0.75);"></div>
<div style="left:486.58px;top:153.2px;width:2.8px;height:1.1px;background:rgba(20,30,80,0.75);"></div>
<div style="left:505.37px;top:153.2px;width:2.8px;height:1.1px;background:rgba(20,30,80,0.75);"></div>
<div style="left:524.16px;top:153.2px;width:2.8px;height:1.1px;background:rgba(20,30,80,0.75);"></div>
<div style="left:542.95px;top:153.2px;width:2.8px;height:1.1px;background:rgba(20,30,80,0.75);"></div>
<div style="left:561.74px;top:153.2px;width:2.8px;height:1.1px;background:rgba(20,30,80,0.75);"></div>
<div style="left:580.53px;top:153.2px;width:2.8px;height:1.1px;background:rgba(20,30,80,0.75);"></div>
<div style="left:599.32px;top:153.2px;width:2.8px;height:1.1px;background:rgba(20,30,80,0.75);"></div>
<div style="left:618.11px;top:153.2px;width:2.8px;height:1.1px;background:rgba(20,30,80,0.75);"></div>
<div style="left:447.5px;top:162.2px;width:1.4px;height:1.2px;background:rgba(20,30,80,0.75);"></div>
<div style="left:450.7px;top:162.2px;width:1.4px;height:1.2px;background:rgba(20,30,80,0.75);"></div>
<div style="left:456.89px;top:162.2px;width:1.4px;height:1.2px;background:rgba(20,30,80,0.75);"></div>
<div style="left:460.09px;top:162.2px;width:1.4px;height:1.2px;background:rgba(20,30,80,0.75);"></div>
<div style="left:458.5px;top:165px;width:1.4px;height:1.2px;background:rgba(20,30,80,0.75);"></div>
<div style="left:466.29px;top:162.2px;width:1.4px;height:1.2px;background:rgba(20,30,80,0.75);"></div>
<div style="left:469.49px;top:162.2px;width:1.4px;height:1.2px;background:rgba(20,30,80,0.75);"></div>
<div style="left:475.68px;top:162.2px;width:1.4px;height:1.2px;background:rgba(20,30,80,0.75);"></div>
<div style="left:478.88px;top:162.2px;width:1.4px;height:1.2px;background:rgba(20,30,80,0.75);"></div>
<div style="left:477.28px;top:165px;width:1.4px;height:1.2px;background:rgba(20,30,80,0.75);"></div>
<div style="left:485.08px;top:162.2px;width:1.4px;height:1.2px;background:rgba(20,30,80,0.75);"></div>
<div style="left:488.28px;top:162.2px;width:1.4px;height:1.2px;background:rgba(20,30,80,0.75);"></div>
<div style="left:494.47px;top:162.2px;width:1.4px;height:1.2px;background:rgba(20,30,80,0.75);"></div>
<div style="left:497.67px;top:162.2px;width:1.4px;height:1.2px;background:rgba(20,30,80,0.75);"></div>
<div style="left:496.07px;top:165px;width:1.4px;height:1.2px;background:rgba(20,30,80,0.75);"></div>
<div style="left:503.87px;top:162.2px;width:1.4px;height:1.2px;background:rgba(20,30,80,0.75);"></div>
<div style="left:507.07px;top:162.2px;width:1.4px;height:1.2px;background:rgba(20,30,80,0.75);"></div>
<div style="left:513.26px;top:162.2px;width:1.4px;height:1.2px;background:rgba(20,30,80,0.75);"></div>
<div style="left:516.46px;top:162.2px;width:1.4px;height:1.2px;background:rgba(20,30,80,0.75);"></div>
<div style="left:514.86px;top:165px;width:1.4px;height:1.2px;background:rgba(20,30,80,0.75);"></div>
<div style="left:522.66px;top:162.2px;width:1.4px;height:1.2px;background:rgba(20,30,80,0.75);"></div>
<div style="left:525.86px;top:162.2px;width:1.4px;height:1.2px;background:rgba(20,30,80,0.75);"></div>
<div style="left:532.05px;top:162.2px;width:1.4px;height:1.2px;background:rgba(20,30,80,0.75);"></div>
<div style="left:535.25px;top:162.2px;width:1.4px;height:1.2px;background:rgba(20,30,80,0.75);"></div>
<div style="left:533.65px;top:165px;width:1.4px;height:1.2px;background:rgba(20,30,80,0.75);"></div>
<div style="left:541.45px;top:162.2px;width:1.4px;height:1.2px;background:rgba(20,30,80,0.75);"></div>
<div style="left:544.65px;top:162.2px;width:1.4px;height:1.2px;background:rgba(20,30,80,0.75);"></div>
<div style="left:550.84px;top:162.2px;width:1.4px;height:1.2px;background:rgba(20,30,80,0.75);"></div>
<div style="left:554.04px;top:162.2px;width:1.4px;height:1.2px;background:rgba(20,30,80,0.75);"></div>
<div style="left:552.44px;top:165px;width:1.4px;height:1.2px;background:rgba(20,30,80,0.75);"></div>
<div style="left:560.24px;top:162.2px;width:1.4px;height:1.2px;background:rgba(20,30,80,0.75);"></div>
<div style="left:563.44px;top:162.2px;width:1.4px;height:1.2px;background:rgba(20,30,80,0.75);"></div>
<div style="left:569.63px;top:162.2px;width:1.4px;height:1.2px;background:rgba(20,30,80,0.75);"></div>
<div style="left:572.83px;top:162.2px;width:1.4px;height:1.2px;background:rgba(20,30,80,0.75);"></div>
<div style="left:571.23px;top:165px;width:1.4px;height:1.2px;background:rgba(20,30,80,0.75);"></div>
<div style="left:579.03px;top:162.2px;width:1.4px;height:1.2px;background:rgba(20,30,80,0.75);"></div>
<div style="left:582.23px;top:162.2px;width:1.4px;height:1.2px;background:rgba(20,30,80,0.75);"></div>
<div style="left:588.42px;top:162.2px;width:1.4px;height:1.2px;background:rgba(20,30,80,0.75);"></div>
<div style="left:591.62px;top:162.2px;width:1.4px;height:1.2px;background:rgba(20,30,80,0.75);"></div>
<div style="left:590.02px;top:165px;width:1.4px;height:1.2px;background:rgba(20,30,80,0.75);"></div>
<div style="left:597.82px;top:162.2px;width:1.4px;height:1.2px;background:rgba(20,30,80,0.75);"></div>
<div style="left:601.02px;top:162.2px;width:1.4px;height:1.2px;background:rgba(20,30,80,0.75);"></div>
<div style="left:607.21px;top:162.2px;width:1.4px;height:1.2px;background:rgba(20,30,80,0.75);"></div>
<div style="left:610.41px;top:162.2px;width:1.4px;height:1.2px;background:rgba(20,30,80,0.75);"></div>
<div style="left:608.81px;top:165px;width:1.4px;height:1.2px;background:rgba(20,30,80,0.75);"></div>
<div style="left:616.61px;top:162.2px;width:1.4px;height:1.2px;background:rgba(20,30,80,0.75);"></div>
<div style="left:619.81px;top:162.2px;width:1.4px;height:1.2px;background:rgba(20,30,80,0.75);"></div>
<div style="left:796.5px;top:156.2px;width:1.3px;height:1.1px;background:rgba(20,30,80,0.75);"></div>
<div style="left:798.85px;top:156.2px;width:1.3px;height:1.1px;background:rgba(20,30,80,0.75);"></div>
<div style="left:801.2px;top:156.2px;width:1.3px;height:1.1px;background:rgba(20,30,80,0.75);"></div>
<div style="left:803.55px;top:156.2px;width:1.3px;height:1.1px;background:rgba(20,30,80,0.75);"></div>
<div style="left:805.9px;top:156.2px;width:1.3px;height:1.1px;background:rgba(20,30,80,0.75);"></div>
<div style="left:808.25px;top:156.2px;width:1.3px;height:1.1px;background:rgba(20,30,80,0.75);"></div>
<div style="left:810.6px;top:156.2px;width:1.3px;height:1.1px;background:rgba(20,30,80,0.75);"></div>
<div style="left:815.3px;top:156.2px;width:1.3px;height:1.1px;background:rgba(20,30,80,0.75);"></div>
<div style="left:817.65px;top:156.2px;width:1.3px;height:1.1px;background:rgba(20,30,80,0.75);"></div>
<div style="left:820.0px;top:156.2px;width:1.3px;height:1.1px;background:rgba(20,30,80,0.75);"></div>
<div style="left:822.35px;top:156.2px;width:1.3px;height:1.1px;background:rgba(20,30,80,0.75);"></div>
<div style="left:824.7px;top:156.2px;width:1.3px;height:1.1px;background:rgba(20,30,80,0.75);"></div>
<div style="left:827.05px;top:156.2px;width:1.3px;height:1.1px;background:rgba(20,30,80,0.75);"></div>
<div style="left:829.4px;top:156.2px;width:1.3px;height:1.1px;background:rgba(20,30,80,0.75);"></div>
<div style="left:834.1px;top:156.2px;width:1.3px;height:1.1px;background:rgba(20,30,80,0.75);"></div>
<div style="left:836.45px;top:156.2px;width:1.3px;height:1.1px;background:rgba(20,30,80,0.75);"></div>
<div style="left:838.8px;top:156.2px;width:1.3px;height:1.1px;background:rgba(20,30,80,0.75);"></div>
<div style="left:841.15px;top:156.2px;width:1.3px;height:1.1px;background:rgba(20,30,80,0.75);"></div>
<div style="left:843.5px;top:156.2px;width:1.3px;height:1.1px;background:rgba(20,30,80,0.75);"></div>
<div style="left:845.85px;top:156.2px;width:1.3px;height:1.1px;background:rgba(20,30,80,0.75);"></div>
<div style="left:848.2px;top:156.2px;width:1.3px;height:1.1px;background:rgba(20,30,80,0.75);"></div>
<div style="left:852.9px;top:156.2px;width:1.3px;height:1.1px;background:rgba(20,30,80,0.75);"></div>
<div style="left:855.25px;top:156.2px;width:1.3px;height:1.1px;background:rgba(20,30,80,0.75);"></div>
<div style="left:799px;top:153.2px;width:2.8px;height:1.1px;background:rgba(20,30,80,0.75);"></div>
<div style="left:817.79px;top:153.2px;width:2.8px;height:1.1px;background:rgba(20,30,80,0.75);"></div>
<div style="left:836.58px;top:153.2px;width:2.8px;height:1.1px;background:rgba(20,30,80,0.75);"></div>
<div style="left:797.5px;top:162.2px;width:1.4px;height:1.2px;background:rgba(20,30,80,0.75);"></div>
<div style="left:800.7px;top:162.2px;width:1.4px;height:1.2px;background:rgba(20,30,80,0.75);"></div>
<div style="left:806.89px;top:162.2px;width:1.4px;height:1.2px;background:rgba(20,30,80,0.75);"></div>
<div style="left:810.1px;top:162.2px;width:1.4px;height:1.2px;background:rgba(20,30,80,0.75);"></div>
<div style="left:808.5px;top:165px;width:1.4px;height:1.2px;background:rgba(20,30,80,0.75);"></div>
<div style="left:816.29px;top:162.2px;width:1.4px;height:1.2px;background:rgba(20,30,80,0.75);"></div>
<div style="left:819.49px;top:162.2px;width:1.4px;height:1.2px;background:rgba(20,30,80,0.75);"></div>
<div style="left:825.68px;top:162.2px;width:1.4px;height:1.2px;background:rgba(20,30,80,0.75);"></div>
<div style="left:828.88px;top:162.2px;width:1.4px;height:1.2px;background:rgba(20,30,80,0.75);"></div>
<div style="left:827.28px;top:165px;width:1.4px;height:1.2px;background:rgba(20,30,80,0.75);"></div>
<div style="left:835.08px;top:162.2px;width:1.4px;height:1.2px;background:rgba(20,30,80,0.75);"></div>
<div style="left:838.28px;top:162.2px;width:1.4px;height:1.2px;background:rgba(20,30,80,0.75);"></div>
<div style="left:844.47px;top:162.2px;width:1.4px;height:1.2px;background:rgba(20,30,80,0.75);"></div>
<div style="left:847.67px;top:162.2px;width:1.4px;height:1.2px;background:rgba(20,30,80,0.75);"></div>
<div style="left:846.07px;top:165px;width:1.4px;height:1.2px;background:rgba(20,30,80,0.75);"></div>
<div style="left:853.87px;top:162.2px;width:1.4px;height:1.2px;background:rgba(20,30,80,0.75);"></div>
<div style="left:857.07px;top:162.2px;width:1.4px;height:1.2px;background:rgba(20,30,80,0.75);"></div>
<div style="left:6px;top:130.5px;width:621px;height:1.2px;background:#1c2248;"></div>
<div style="left:778px;top:130.5px;width:79px;height:1.2px;background:#1c2248;"></div>
<div style="left:798.5px;top:152px;width:9px;height:1.3px;background:#1c2550;"></div>
<div style="left:834px;top:152px;width:23px;height:1.3px;background:#1c2550;"></div>
<div style="left:814.5px;top:148.5px;width:1.2px;height:1.5px;background:#1c2550;"></div>
<div style="left:26px;top:170px;width:601px;height:12px;background:#92a7ff;"></div>
<div style="left:26px;top:182px;width:601px;height:25.5px;background:#92a7ff;background-image:repeating-linear-gradient(90deg, rgba(0,0,0,0.08) 0px, rgba(0,0,0,0.08) 1px, transparent 1px, transparent 9.395px);background-position:8.89px 0;"></div>
<div style="left:26px;top:181.5px;width:601px;height:1px;background:rgba(0,0,0,0.35);"></div>
<div style="left:26px;top:170px;width:0.8px;height:37.5px;background:rgba(0,0,0,0.45);"></div>
<div style="left:101px;top:170px;width:0.8px;height:37.5px;background:rgba(0,0,50,0.55);"></div>
<div style="left:176.7px;top:170px;width:0.8px;height:37.5px;background:rgba(0,0,50,0.55);"></div>
<div style="left:251.5px;top:170px;width:0.8px;height:37.5px;background:rgba(0,0,50,0.55);"></div>
<div style="left:326.4px;top:170px;width:0.8px;height:37.5px;background:rgba(0,0,50,0.55);"></div>
<div style="left:401.3px;top:170px;width:0.8px;height:37.5px;background:rgba(0,0,50,0.55);"></div>
<div style="left:476.7px;top:170px;width:0.8px;height:37.5px;background:rgba(0,0,50,0.55);"></div>
<div style="left:627px;top:170px;width:75px;height:12px;background:#98abff;"></div>
<div style="left:627px;top:182px;width:75px;height:25.5px;background:#98abff;background-image:repeating-linear-gradient(90deg, rgba(0,0,0,0.08) 0px, rgba(0,0,0,0.08) 1px, transparent 1px, transparent 9.395px);background-position:9.17px 0;"></div>
<div style="left:627px;top:181.5px;width:75px;height:1px;background:rgba(0,0,0,0.35);"></div>
<div style="left:627px;top:170px;width:0.8px;height:37.5px;background:rgba(0,0,0,0.45);"></div>
<div style="left:627px;top:188px;width:75px;height:1px;background:#2a3370;"></div>
<div style="left:627px;top:200.5px;width:75px;height:1px;background:#2a3370;"></div>
<div style="left:702px;top:170px;width:76px;height:12px;background:#92a7ff;"></div>
<div style="left:702px;top:182px;width:76px;height:25.5px;background:#92a7ff;background-image:repeating-linear-gradient(90deg, rgba(0,0,0,0.08) 0px, rgba(0,0,0,0.08) 1px, transparent 1px, transparent 9.395px);background-position:9.33px 0;"></div>
<div style="left:702px;top:181.5px;width:76px;height:1px;background:rgba(0,0,0,0.35);"></div>
<div style="left:702px;top:170px;width:0.8px;height:37.5px;background:rgba(0,0,0,0.45);"></div>
<div style="left:796px;top:170px;width:61px;height:12px;background:#92a7ff;"></div>
<div style="left:796px;top:182px;width:61px;height:25.5px;background:#92a7ff;background-image:repeating-linear-gradient(90deg, rgba(0,0,0,0.08) 0px, rgba(0,0,0,0.08) 1px, transparent 1px, transparent 9.395px);background-position:9.28px 0;"></div>
<div style="left:796px;top:181.5px;width:61px;height:1px;background:rgba(0,0,0,0.35);"></div>
<div style="left:796px;top:170px;width:0.8px;height:37.5px;background:rgba(0,0,0,0.45);"></div>
<svg style="left:27px;top:0px" width="599" height="768"><path d="M0,187.9 L0.7,185.53 L1.4,185.53 L2.1,186.4 L2.8,185.16 L3.5,186.13 L4.2,185.75 L4.9,185.74 L5.6,186.26 L6.3,185.11 L7.0,185.31 L7.7,187.9 L8.4,187.9 L9.1,187.9 L9.8,187.16 L10.5,185.12 L11.2,185.35 L11.9,185.36 L12.6,185.87 L13.3,185.79 L14.0,185.09 L14.7,186.28 L15.4,184.96 L16.1,185.5 L16.8,187.9 L17.5,187.9 L18.2,187.9 L18.9,187.9 L19.6,185.57 L20.3,185.41 L21.0,185.13 L21.7,185.43 L22.4,185.12 L23.1,185.05 L23.8,185.36 L24.5,185.17 L25.2,186.04 L25.9,185.13 L26.6,187.9 L27.3,187.9 L28.0,187.9 L28.7,186.88 L29.4,185.27 L30.1,186.43 L30.8,186.43 L31.5,185.97 L32.2,184.93 L32.9,184.9 L33.6,186.38 L34.3,186.45 L35.0,185.85 L35.7,187.9 L36.4,187.9 L37.1,187.9 L37.8,187.92 L38.5,185.07 L39.2,185.76 L39.9,185.47 L40.6,185.61 L41.3,185.0 L42.0,185.81 L42.7,186.12 L43.4,184.94 L44.1,185.62 L44.8,187.9 L45.5,187.9 L46.2,187.9 L46.9,187.9 L47.6,185.76 L48.3,185.5 L49.0,185.41 L49.7,185.37 L50.4,186.46 L51.1,185.42 L51.8,186.1 L52.5,185.55 L53.2,185.92 L53.9,185.91 L54.6,187.9 L55.3,187.9 L56.0,187.9 L56.7,187.65 L57.4,185.32 L58.1,186.14 L58.8,186.12 L59.5,185.8 L60.2,186.34 L60.9,185.97 L61.6,185.8 L62.3,186.23 L63.0,185.46 L63.7,187.9 L64.4,187.9 L65.1,187.9 L65.8,187.9 L66.5,185.98 L67.2,185.16 L67.9,186.05 L68.6,185.47 L69.3,185.95 L70.0,186.03 L70.7,186.07 L71.4,185.83 L72.1,185.84 L72.8,186.25 L73.5,187.9 L74.2,187.9 L74.9,187.9 L75.6,186.88 L76.3,185.02 L77.0,185.31 L77.7,185.44 L78.4,186.04 L79.1,186.14 L79.8,185.56 L80.5,185.2 L81.2,185.05 L81.9,185.02 L82.6,187.9 L83.3,187.9 L84.0,187.9 L84.7,187.9 L85.4,186.23 L86.1,185.44 L86.8,185.84 L87.5,185.52 L88.2,186.1 L88.9,185.74 L89.6,185.94 L90.3,185.64 L91.0,186.23 L91.7,185.03 L92.4,187.9 L93.1,187.9 L93.8,187.9 L94.5,185.85 L95.2,186.07 L95.9,185.66 L96.6,185.74 L97.3,186.5 L98.0,186.3 L98.7,186.39 L99.4,185.13 L100.1,185.7 L100.8,186.0 L101.5,187.9 L102.2,187.9 L102.9,187.9 L103.6,187.83 L104.3,186.3 L105.0,185.35 L105.7,186.37 L106.4,185.9 L107.1,185.25 L107.8,185.22 L108.5,185.81 L109.2,185.71 L109.9,185.83 L110.6,187.9 L111.3,187.9 L112.0,187.9 L112.7,187.9 L113.4,186.46 L114.1,185.82 L114.8,185.0 L115.5,185.06 L116.2,186.08 L116.9,186.3 L117.6,185.44 L118.3,185.23 L119.0,185.33 L119.7,186.33 L120.4,187.9 L121.1,187.9 L121.8,187.9 L122.5,187.52 L123.2,186.34 L123.9,186.21 L124.6,185.15 L125.3,185.15 L126.0,185.16 L126.7,185.57 L127.4,186.44 L128.1,185.68 L128.8,186.33 L129.5,187.9 L130.2,187.9 L130.9,187.9 L131.6,187.9 L132.3,184.68 L133.0,186.21 L133.7,185.51 L134.4,185.87 L135.1,185.87 L135.8,185.83 L136.5,185.7 L137.2,185.84 L137.9,186.24 L138.6,185.29 L139.3,187.9 L140.0,187.9 L140.7,187.9 L141.4,186.24 L142.1,186.35 L142.8,185.03 L143.5,185.79 L144.2,186.2 L144.9,186.18 L145.6,186.0 L146.3,185.39 L147.0,186.03 L147.7,185.84 L148.4,187.9 L149.1,187.9 L149.8,187.9 L150.5,187.9 L151.2,185.73 L151.9,186.22 L152.6,185.98 L153.3,186.27 L154.0,185.73 L154.7,185.75 L155.4,185.19 L156.1,185.73 L156.8,185.13 L157.5,185.33 L158.2,187.9 L158.9,187.9 L159.6,187.9 L160.3,185.85 L161.0,184.97 L161.7,186.11 L162.4,186.09 L163.1,185.37 L163.8,185.06 L164.5,185.12 L165.2,185.82 L165.9,186.36 L166.6,185.17 L167.3,187.9 L168.0,187.9 L168.7,187.9 L169.4,187.8 L170.1,185.8 L170.8,186.16 L171.5,184.97 L172.2,185.63 L172.9,186.06 L173.6,186.32 L174.3,185.05 L175.0,184.99 L175.7,185.26 L176.4,187.9 L177.1,187.9 L177.8,187.9 L178.5,187.9 L179.2,186.01 L179.9,184.96 L180.6,185.64 L181.3,185.71 L182.0,185.35 L182.7,185.59 L183.4,185.47 L184.1,186.21 L184.8,185.45 L185.5,185.01 L186.2,187.9 L186.9,187.9 L187.6,187.9 L188.3,186.96 L189.0,185.77 L189.7,186.22 L190.4,185.35 L191.1,185.63 L191.8,185.93 L192.5,185.89 L193.2,186.43 L193.9,186.1 L194.6,185.93 L195.3,187.9 L196.0,187.9 L196.7,187.9 L197.4,187.9 L198.1,185.14 L198.8,186.07 L199.5,186.32 L200.2,185.34 L200.9,186.2 L201.6,185.31 L202.3,185.3 L203.0,186.27 L203.7,186.19 L204.4,185.59 L205.1,187.9 L205.8,187.9 L206.5,187.9 L207.2,186.15 L207.9,184.98 L208.6,185.62 L209.3,185.49 L210.0,185.4 L210.7,185.12 L211.4,185.54 L212.1,186.5 L212.8,185.44 L213.5,185.66 L214.2,187.9 L214.9,187.9 L215.6,187.9 L216.3,187.87 L217.0,185.79 L217.7,184.97 L218.4,186.28 L219.1,185.5 L219.8,185.92 L220.5,186.38 L221.2,185.01 L221.9,185.11 L222.6,186.29 L223.3,187.9 L224.0,187.9 L224.7,187.9 L225.4,187.9 L226.1,186.21 L226.8,185.01 L227.5,185.8 L228.2,185.72 L228.9,186.43 L229.6,186.18 L230.3,185.7 L231.0,185.64 L231.7,185.46 L232.4,185.76 L233.1,187.9 L233.8,187.9 L234.5,187.9 L235.2,187.21 L235.9,185.91 L236.6,185.55 L237.3,186.5 L238.0,185.25 L238.7,185.76 L239.4,186.17 L240.1,185.85 L240.8,186.46 L241.5,186.23 L242.2,187.9 L242.9,187.9 L243.6,187.9 L244.3,187.9 L245.0,185.11 L245.7,185.85 L246.4,186.46 L247.1,186.15 L247.8,185.74 L248.5,185.5 L249.2,186.3 L249.9,185.34 L250.6,185.24 L251.3,185.01 L252.0,187.9 L252.7,187.9 L253.4,187.9 L254.1,186.72 L254.8,186.35 L255.5,184.95 L256.2,186.49 L256.9,186.36 L257.6,186.44 L258.3,185.45 L259.0,186.18 L259.7,185.74 L260.4,185.03 L261.1,187.9 L261.8,187.9 L262.5,187.9 L263.2,187.9 L263.9,186.36 L264.6,185.14 L265.3,185.88 L266.0,185.41 L266.7,186.22 L267.4,185.33 L268.1,185.61 L268.8,185.92 L269.5,186.13 L270.2,185.73 L270.9,187.9 L271.6,187.9 L272.3,187.9 L273.0,186.07 L273.7,185.72 L274.4,185.36 L275.1,185.75 L275.8,185.42 L276.5,186.12 L277.2,185.47 L277.9,185.1 L278.6,185.06 L279.3,185.97 L280.0,187.9 L280.7,187.9 L281.4,187.9 L282.1,187.89 L282.8,186.32 L283.5,185.46 L284.2,186.42 L284.9,185.47 L285.6,186.48 L286.3,184.95 L287.0,185.6 L287.7,185.25 L288.4,185.24 L289.1,187.9 L289.8,187.9 L290.5,187.9 L291.2,187.9 L291.9,186.41 L292.6,184.95 L293.3,185.07 L294.0,185.76 L294.7,185.17 L295.4,185.47 L296.1,185.11 L296.8,185.54 L297.5,186.32 L298.2,185.55 L298.9,187.9 L299.6,187.9 L300.3,187.9 L301.0,187.02 L301.7,185.95 L302.4,186.39 L303.1,185.32 L303.8,185.46 L304.5,186.16 L305.2,184.91 L305.9,185.81 L306.6,186.15 L307.3,185.01 L308.0,187.9 L308.7,187.9 L309.4,187.9 L310.1,187.9 L310.8,185.24 L311.5,184.98 L312.2,184.98 L312.9,185.26 L313.6,184.9 L314.3,186.03 L315.0,186.2 L315.7,185.34 L316.4,185.67 L317.1,186.44 L317.8,187.9 L318.5,187.9 L319.2,187.9 L319.9,186.43 L320.6,186.04 L321.3,186.02 L322.0,186.38 L322.7,185.28 L323.4,184.94 L324.1,185.1 L324.8,186.24 L325.5,185.76 L326.2,185.63 L326.9,187.9 L327.6,187.9 L328.3,187.9 L329.0,187.9 L329.7,185.21 L330.4,186.11 L331.1,186.48 L331.8,185.65 L332.5,186.23 L333.2,186.17 L333.9,185.75 L334.6,185.24 L335.3,186.44 L336.0,186.48 L336.7,187.9 L337.4,187.9 L338.1,187.9 L338.8,186.71 L339.5,186.1 L340.2,185.83 L340.9,186.43 L341.6,185.5 L342.3,185.04 L343.0,186.1 L343.7,185.29 L344.4,185.69 L345.1,185.62 L345.8,187.9 L346.5,187.9 L347.2,187.9 L347.9,187.33 L348.6,185.75 L349.3,185.01 L350.0,185.54 L350.7,185.67 L351.4,186.21 L352.1,184.91 L352.8,185.85 L353.5,185.77 L354.2,185.78 L354.9,187.9 L355.6,187.9 L356.3,187.9 L357.0,187.9 L357.7,185.08 L358.4,185.01 L359.1,186.45 L359.8,185.62 L360.5,186.05 L361.2,185.04 L361.9,185.43 L362.6,185.68 L363.3,184.96 L364.0,186.19 L364.7,187.9 L365.4,187.9 L366.1,187.9 L366.8,187.18 L367.5,184.98 L368.2,185.99 L368.9,186.05 L369.6,186.1 L370.3,186.37 L371.0,186.18 L371.7,185.66 L372.4,185.16 L373.1,185.19 L373.8,187.9 L374.5,187.9 L375.2,187.9 L375.9,187.9 L376.6,185.17 L377.3,185.63 L378.0,186.12 L378.7,186.27 L379.4,186.22 L380.1,185.42 L380.8,186.27 L381.5,185.28 L382.2,186.2 L382.9,185.1 L383.6,187.9 L384.3,187.9 L385.0,187.9 L385.7,186.96 L386.4,184.92 L387.1,186.29 L387.8,186.3 L388.5,185.04 L389.2,186.19 L389.9,184.9 L390.6,186.11 L391.3,184.98 L392.0,185.37 L392.7,187.9 L393.4,187.9 L394.1,187.9 L394.8,187.8 L395.5,185.76 L396.2,185.79 L396.9,185.17 L397.6,185.55 L398.3,185.14 L399.0,184.96 L399.7,186.23 L400.4,186.18 L401.1,184.93 L401.8,187.9 L402.5,187.9 L403.2,187.9 L403.9,187.9 L404.6,185.58 L405.3,185.4 L406.0,185.27 L406.7,185.64 L407.4,186.27 L408.1,185.98 L408.8,185.9 L409.5,185.93 L410.2,184.93 L410.9,185.12 L411.6,187.9 L412.3,187.9 L413.0,187.9 L413.7,187.62 L414.4,185.33 L415.1,185.47 L415.8,184.95 L416.5,185.74 L417.2,185.1 L417.9,185.65 L418.6,185.51 L419.3,185.82 L420.0,185.26 L420.7,187.9 L421.4,187.9 L422.1,187.9 L422.8,187.9 L423.5,185.98 L424.2,185.09 L424.9,185.11 L425.6,185.92 L426.3,185.69 L427.0,185.9 L427.7,185.1 L428.4,186.27 L429.1,185.91 L429.8,186.28 L430.5,187.9 L431.2,187.9 L431.9,187.9 L432.6,186.83 L433.3,185.65 L434.0,185.17 L434.7,185.04 L435.4,185.41 L436.1,185.09 L436.8,185.74 L437.5,186.04 L438.2,185.18 L438.9,186.36 L439.6,187.9 L440.3,187.9 L441.0,187.9 L441.7,187.9 L442.4,186.06 L443.1,185.68 L443.8,185.49 L444.5,185.8 L445.2,184.93 L445.9,186.37 L446.6,185.29 L447.3,186.39 L448.0,185.73 L448.7,185.07 L449.4,187.9 L450.1,187.9 L450.8,187.9 L451.5,185.88 L452.2,185.87 L452.9,185.47 L453.6,185.0 L454.3,185.58 L455.0,186.13 L455.7,185.13 L456.4,186.04 L457.1,185.44 L457.8,186.18 L458.5,187.9 L459.2,187.9 L459.9,187.9 L460.6,187.68 L461.3,185.27 L462.0,185.13 L462.7,186.17 L463.4,185.81 L464.1,186.19 L464.8,186.15 L465.5,185.0 L466.2,185.04 L466.9,186.16 L467.6,187.9 L468.3,187.9 L469.0,187.9 L469.7,187.9 L470.4,185.33 L471.1,185.86 L471.8,186.22 L472.5,186.08 L473.2,185.96 L473.9,186.15 L474.6,185.6 L475.3,185.38 L476.0,185.43 L476.7,186.22 L477.4,187.9 L478.1,187.9 L478.8,187.9 L479.5,187.12 L480.2,186.41 L480.9,185.12 L481.6,185.57 L482.3,185.06 L483.0,186.14 L483.7,184.92 L484.4,184.91 L485.1,186.21 L485.8,185.96 L486.5,187.9 L487.2,187.9 L487.9,187.9 L488.6,187.9 L489.3,185.37 L490.0,185.12 L490.7,185.71 L491.4,185.18 L492.1,186.35 L492.8,185.62 L493.5,185.07 L494.2,185.63 L494.9,185.16 L495.6,186.03 L496.3,187.9 L497.0,187.9 L497.7,187.9 L498.4,186.73 L499.1,186.1 L499.8,185.6 L500.5,186.32 L501.2,185.99 L501.9,186.22 L502.6,186.19 L503.3,185.58 L504.0,186.41 L504.7,186.18 L505.4,187.9 L506.1,187.9 L506.8,187.9 L507.5,187.9 L508.2,185.11 L508.9,185.86 L509.6,186.06 L510.3,184.99 L511.0,184.98 L511.7,185.81 L512.4,184.96 L513.1,185.59 L513.8,186.18 L514.5,184.92 L515.2,187.9 L515.9,187.9 L516.6,187.9 L517.3,185.92 L518.0,186.14 L518.7,184.94 L519.4,185.28 L520.1,185.43 L520.8,185.69 L521.5,185.11 L522.2,185.69 L522.9,185.82 L523.6,186.09 L524.3,187.9 L525.0,187.9 L525.7,187.9 L526.4,187.74 L527.1,186.16 L527.8,185.69 L528.5,185.14 L529.2,185.9 L529.9,185.61 L530.6,185.03 L531.3,186.25 L532.0,185.32 L532.7,185.32 L533.4,187.9 L534.1,187.9 L534.8,187.9 L535.5,187.9 L536.2,186.26 L536.9,185.09 L537.6,186.49 L538.3,185.24 L539.0,185.77 L539.7,185.52 L540.4,185.38 L541.1,186.05 L541.8,186.23 L542.5,185.67 L543.2,187.9 L543.9,187.9 L544.6,187.9 L545.3,187.15 L546.0,185.79 L546.7,185.98 L547.4,185.78 L548.1,185.95 L548.8,185.83 L549.5,185.99 L550.2,185.63 L550.9,186.04 L551.6,186.46 L552.3,187.9 L553.0,187.9 L553.7,187.9 L554.4,187.9 L555.1,184.97 L555.8,185.32 L556.5,185.82 L557.2,186.4 L557.9,185.7 L558.6,185.02 L559.3,185.5 L560.0,186.3 L560.7,186.23 L561.4,184.9 L562.1,187.9 L562.8,187.9 L563.5,187.9 L564.2,186.06 L564.9,186.48 L565.6,186.49 L566.3,185.11 L567.0,186.42 L567.7,186.01 L568.4,186.02 L569.1,186.29 L569.8,186.36 L570.5,186.43 L571.2,187.9 L571.9,187.9 L572.6,187.9 L573.3,187.91 L574.0,185.69 L574.7,186.37 L575.4,185.68 L576.1,186.49 L576.8,185.42 L577.5,185.83 L578.2,185.6 L578.9,185.76 L579.6,186.45 L580.3,187.9 L581.0,187.9 L581.7,187.9 L582.4,187.9 L583.1,186.23 L583.8,185.31 L584.5,185.74 L585.2,185.96 L585.9,186.12 L586.6,185.52 L587.3,186.21 L588.0,186.21 L588.7,186.09 L589.4,185.6 L590.1,187.9 L590.8,187.9 L591.5,187.9 L592.2,187.25 L592.9,185.34 L593.6,186.15 L594.3,186.19 L595.0,185.47 L595.7,186.33 L596.4,185.73 L597.1,185.7 L597.8,186.18 L598.5,185.47 L598.5,191.73 L597.8,190.75 L597.1,191.25 L596.4,191.16 L595.7,190.84 L595.0,191.73 L594.3,190.89 L593.6,190.66 L592.9,191.45 L592.2,189.7 L591.5,189.14 L590.8,189.02 L590.1,189.09 L589.4,191.26 L588.7,191.19 L588.0,190.79 L587.3,190.51 L586.6,191.25 L585.9,190.94 L585.2,190.7 L584.5,191.02 L583.8,192.13 L583.1,190.87 L582.4,189.06 L581.7,189.1 L581.0,189.06 L580.3,189.14 L579.6,190.43 L578.9,191.33 L578.2,191.3 L577.5,191.34 L576.8,191.98 L576.1,190.25 L575.4,191.71 L574.7,190.74 L574.0,191.42 L573.3,189.14 L572.6,189.14 L571.9,189.03 L571.2,189.04 L570.5,190.86 L569.8,190.94 L569.1,190.8 L568.4,190.84 L567.7,190.97 L567.0,190.69 L566.3,192.3 L565.6,190.63 L564.9,190.5 L564.2,190.87 L563.5,189.05 L562.8,189.1 L562.1,189.1 L561.4,191.69 L560.7,190.68 L560.0,191.03 L559.3,191.44 L558.6,192.07 L557.9,190.96 L557.2,190.79 L556.5,191.03 L555.8,191.7 L555.1,192.2 L554.4,189.15 L553.7,189.06 L553.0,189.11 L552.3,189.05 L551.6,190.44 L550.9,190.61 L550.2,191.46 L549.5,191.06 L548.8,190.84 L548.1,190.85 L547.4,191.47 L546.7,190.81 L546.0,191.35 L545.3,189.98 L544.6,189.15 L543.9,189.03 L543.2,189.18 L542.5,191.18 L541.8,190.45 L541.1,191.1 L540.4,191.16 L539.7,191.27 L539.0,191.63 L538.3,191.65 L537.6,190.26 L536.9,191.54 L536.2,190.82 L535.5,189.04 L534.8,189.12 L534.1,189.13 L533.4,189.11 L532.7,191.35 L532.0,191.67 L531.3,191.08 L530.6,191.66 L529.9,191.6 L529.2,190.74 L528.5,192.09 L527.8,191.69 L527.1,191.02 L526.4,189.29 L525.7,189.02 L525.0,189.08 L524.3,189.12 L523.6,190.94 L522.9,191.43 L522.2,191.46 L521.5,192.14 L520.8,191.21 L520.1,191.36 L519.4,191.4 L518.7,191.87 L518.0,190.83 L517.3,191.27 L516.6,189.03 L515.9,189.17 L515.2,189.14 L514.5,192.39 L513.8,190.63 L513.1,191.42 L512.4,191.71 L511.7,191.0 L511.0,191.99 L510.3,191.6 L509.6,190.81 L508.9,190.79 L508.2,191.91 L507.5,189.18 L506.8,189.11 L506.1,189.03 L505.4,189.04 L504.7,190.83 L504.0,190.58 L503.3,191.08 L502.6,190.75 L501.9,190.7 L501.2,191.18 L500.5,190.71 L499.8,191.3 L499.1,191.04 L498.4,190.31 L497.7,189.07 L497.0,189.14 L496.3,189.13 L495.6,190.6 L494.9,192.09 L494.2,191.79 L493.5,192.32 L492.8,191.21 L492.1,190.82 L491.4,191.52 L490.7,191.36 L490.0,191.83 L489.3,191.67 L488.6,189.16 L487.9,189.11 L487.2,189.03 L486.5,189.12 L485.8,191.22 L485.1,190.93 L484.4,192.07 L483.7,191.91 L483.0,191.08 L482.3,192.13 L481.6,191.22 L480.9,191.87 L480.2,190.77 L479.5,189.85 L478.8,189.12 L478.1,189.11 L477.4,189.08 L476.7,190.95 L476.0,191.67 L475.3,191.35 L474.6,191.18 L473.9,190.81 L473.2,190.75 L472.5,191.06 L471.8,190.61 L471.1,191.05 L470.4,191.25 L469.7,189.16 L469.0,189.08 L468.3,189.1 L467.6,189.02 L466.9,190.62 L466.2,191.85 L465.5,191.6 L464.8,191.07 L464.1,191.07 L463.4,191.04 L462.7,190.52 L462.0,192.11 L461.3,192.13 L460.6,189.29 L459.9,189.11 L459.2,189.03 L458.5,189.17 L457.8,190.68 L457.1,191.58 L456.4,191.31 L455.7,191.91 L455.0,190.85 L454.3,191.06 L453.6,192.02 L452.9,191.1 L452.2,190.8 L451.5,190.88 L450.8,189.11 L450.1,189.09 L449.4,189.07 L448.7,192.27 L448.0,191.2 L447.3,190.3 L446.6,192.18 L445.9,190.6 L445.2,192.27 L444.5,190.87 L443.8,191.65 L443.1,191.26 L442.4,190.86 L441.7,189.04 L441.0,189.16 L440.3,189.01 L439.6,189.07 L438.9,190.33 L438.2,191.92 L437.5,190.73 L436.8,191.58 L436.1,191.78 L435.4,191.24 L434.7,191.9 L434.0,192.16 L433.3,191.56 L432.6,190.38 L431.9,189.02 L431.2,189.06 L430.5,189.07 L429.8,190.44 L429.1,191.18 L428.4,190.55 L427.7,191.99 L427.0,191.21 L426.3,191.22 L425.6,190.92 L424.9,192.1 L424.2,191.84 L423.5,191.06 L422.8,189.08 L422.1,189.19 L421.4,189.08 L420.7,189.16 L420.0,191.32 L419.3,191.46 L418.6,191.1 L417.9,191.3 L417.2,192.4 L416.5,191.29 L415.8,192.0 L415.1,191.33 L414.4,191.52 L413.7,189.38 L413.0,189.06 L412.3,189.19 L411.6,189.06 L410.9,192.22 L410.2,192.54 L409.5,191.15 L408.8,190.96 L408.1,191.02 L407.4,190.8 L406.7,191.31 L406.0,191.33 L405.3,191.62 L404.6,191.85 L403.9,189.17 L403.2,189.01 L402.5,189.03 L401.8,189.17 L401.1,191.97 L400.4,190.51 L399.7,190.61 L399.0,192.4 L398.3,191.53 L397.6,191.83 L396.9,191.53 L396.2,191.24 L395.5,191.27 L394.8,189.22 L394.1,189.14 L393.4,189.07 L392.7,189.01 L392.0,191.45 L391.3,192.01 L390.6,190.79 L389.9,192.61 L389.2,191.11 L388.5,191.52 L387.8,190.61 L387.1,190.47 L386.4,191.84 L385.7,189.99 L385.0,189.08 L384.3,189.11 L383.6,189.18 L382.9,191.44 L382.2,191.03 L381.5,191.4 L380.8,190.43 L380.1,191.72 L379.4,191.12 L378.7,191.0 L378.0,191.2 L377.3,190.98 L376.6,191.6 L375.9,189.06 L375.2,189.02 L374.5,189.18 L373.8,189.06 L373.1,191.32 L372.4,191.97 L371.7,191.55 L371.0,190.53 L370.3,190.45 L369.6,191.25 L368.9,190.68 L368.2,190.93 L367.5,192.49 L366.8,189.73 L366.1,189.16 L365.4,189.08 L364.7,189.04 L364.0,191.1 L363.3,192.19 L362.6,191.66 L361.9,191.45 L361.2,191.55 L360.5,191.1 L359.8,191.37 L359.1,190.59 L358.4,192.11 L357.7,192.25 L357.0,189.08 L356.3,189.1 L355.6,189.07 L354.9,189.04 L354.2,191.6 L353.5,191.48 L352.8,191.04 L352.1,192.14 L351.4,190.92 L350.7,191.05 L350.0,191.39 L349.3,192.31 L348.6,191.38 L347.9,189.82 L347.2,189.13 L346.5,189.01 L345.8,189.04 L345.1,191.19 L344.4,191.59 L343.7,191.99 L343.0,190.63 L342.3,192.28 L341.6,191.66 L340.9,190.53 L340.2,190.98 L339.5,191.11 L338.8,190.19 L338.1,189.11 L337.4,189.02 L336.7,189.07 L336.0,190.48 L335.3,190.36 L334.6,192.23 L333.9,191.64 L333.2,191.01 L332.5,190.46 L331.8,191.38 L331.1,190.29 L330.4,191.11 L329.7,191.59 L329.0,189.17 L328.3,189.09 L327.6,189.06 L326.9,189.16 L326.2,191.25 L325.5,191.26 L324.8,190.63 L324.1,191.77 L323.4,192.57 L322.7,191.91 L322.0,190.4 L321.3,190.91 L320.6,190.67 L319.9,190.73 L319.2,189.07 L318.5,189.09 L317.8,189.06 L317.1,190.72 L316.4,191.45 L315.7,191.46 L315.0,190.52 L314.3,191.29 L313.6,192.55 L312.9,191.65 L312.2,192.0 L311.5,192.44 L310.8,191.68 L310.1,189.18 L309.4,189.12 L308.7,189.19 L308.0,189.17 L307.3,192.23 L306.6,190.61 L305.9,190.85 L305.2,191.92 L304.5,190.74 L303.8,191.63 L303.1,191.6 L302.4,190.65 L301.7,191.04 L301.0,189.79 L300.3,189.09 L299.6,189.11 L298.9,189.05 L298.2,191.73 L297.5,190.9 L296.8,191.42 L296.1,191.74 L295.4,191.76 L294.7,191.94 L294.0,191.02 L293.3,191.5 L292.6,191.73 L291.9,190.29 L291.2,189.16 L290.5,189.02 L289.8,189.04 L289.1,189.04 L288.4,191.8 L287.7,191.85 L287.0,191.33 L286.3,191.75 L285.6,190.36 L284.9,191.61 L284.2,190.36 L283.5,191.3 L282.8,190.4 L282.1,189.13 L281.4,189.18 L280.7,189.08 L280.0,189.02 L279.3,190.94 L278.6,192.17 L277.9,191.84 L277.2,191.87 L276.5,191.12 L275.8,191.21 L275.1,191.46 L274.4,191.19 L273.7,190.99 L273.0,190.85 L272.3,189.12 L271.6,189.14 L270.9,189.04 L270.2,191.08 L269.5,191.07 L268.8,191.01 L268.1,191.75 L267.4,191.99 L266.7,190.94 L266.0,191.99 L265.3,190.99 L264.6,191.47 L263.9,190.51 L263.2,189.18 L262.5,189.12 L261.8,189.06 L261.1,189.02 L260.4,192.43 L259.7,191.51 L259.0,191.15 L258.3,191.91 L257.6,190.28 L256.9,190.43 L256.2,190.22 L255.5,192.15 L254.8,190.77 L254.1,190.2 L253.4,189.16 L252.7,189.06 L252.0,189.05 L251.3,191.78 L250.6,191.73 L249.9,191.45 L249.2,190.4 L248.5,191.36 L247.8,190.98 L247.1,190.56 L246.4,190.83 L245.7,191.06 L245.0,191.43 L244.3,189.08 L243.6,189.09 L242.9,189.01 L242.2,189.02 L241.5,190.76 L240.8,190.3 L240.1,190.88 L239.4,190.6 L238.7,190.99 L238.0,191.41 L237.3,190.33 L236.6,191.21 L235.9,191.12 L235.2,189.74 L234.5,189.17 L233.8,189.04 L233.1,189.08 L232.4,191.45 L231.7,191.36 L231.0,191.29 L230.3,191.46 L229.6,190.58 L228.9,190.31 L228.2,190.95 L227.5,191.41 L226.8,192.37 L226.1,191.01 L225.4,189.14 L224.7,189.14 L224.0,189.18 L223.3,189.12 L222.6,190.95 L221.9,192.09 L221.2,191.8 L220.5,190.65 L219.8,190.87 L219.1,191.09 L218.4,190.91 L217.7,192.45 L217.0,191.26 L216.3,189.16 L215.6,189.02 L214.9,189.11 L214.2,189.04 L213.5,191.3 L212.8,191.55 L212.1,190.67 L211.4,191.66 L210.7,191.86 L210.0,191.41 L209.3,191.95 L208.6,191.46 L207.9,191.9 L207.2,191.13 L206.5,189.02 L205.8,189.15 L205.1,189.06 L204.4,191.15 L203.7,190.83 L203.0,190.67 L202.3,191.79 L201.6,191.99 L200.9,190.75 L200.2,191.36 L199.5,190.86 L198.8,190.64 L198.1,191.46 L197.4,189.07 L196.7,189.15 L196.0,189.11 L195.3,189.08 L194.6,190.94 L193.9,191.09 L193.2,190.57 L192.5,191.41 L191.8,190.89 L191.1,191.58 L190.4,191.89 L189.7,190.49 L189.0,191.08 L188.3,190.11 L187.6,189.12 L186.9,189.14 L186.2,189.07 L185.5,191.62 L184.8,191.2 L184.1,191.05 L183.4,191.65 L182.7,191.13 L182.0,191.82 L181.3,191.17 L180.6,191.03 L179.9,192.22 L179.2,191.18 L178.5,189.16 L177.8,189.13 L177.1,189.13 L176.4,189.06 L175.7,191.99 L175.0,191.87 L174.3,191.54 L173.6,190.93 L172.9,191.06 L172.2,191.04 L171.5,191.91 L170.8,190.9 L170.1,191.19 L169.4,189.17 L168.7,189.13 L168.0,189.11 L167.3,189.07 L166.6,191.63 L165.9,190.38 L165.2,191.36 L164.5,191.69 L163.8,191.69 L163.1,191.96 L162.4,190.69 L161.7,190.67 L161.0,192.41 L160.3,191.29 L159.6,189.05 L158.9,189.05 L158.2,189.09 L157.5,192.11 L156.8,191.77 L156.1,191.45 L155.4,191.87 L154.7,191.52 L154.0,191.35 L153.3,191.06 L152.6,191.22 L151.9,190.68 L151.2,191.17 L150.5,189.01 L149.8,189.05 L149.1,189.06 L148.4,189.12 L147.7,191.44 L147.0,191.13 L146.3,192.03 L145.6,190.8 L144.9,190.88 L144.2,190.64 L143.5,191.39 L142.8,191.98 L142.1,190.81 L141.4,190.52 L140.7,189.13 L140.0,189.1 L139.3,189.1 L138.6,191.88 L137.9,190.89 L137.2,191.36 L136.5,191.7 L135.8,190.84 L135.1,191.02 L134.4,191.03 L133.7,191.71 L133.0,190.62 L132.3,192.03 L131.6,189.11 L130.9,189.07 L130.2,189.02 L129.5,189.18 L128.8,190.83 L128.1,191.5 L127.4,190.72 L126.7,191.69 L126.0,192.29 L125.3,192.02 L124.6,191.47 L123.9,190.46 L123.2,190.91 L122.5,189.36 L121.8,189.15 L121.1,189.04 L120.4,189.01 L119.7,190.72 L119.0,191.73 L118.3,191.93 L117.6,191.92 L116.9,190.9 L116.2,190.89 L115.5,192.24 L114.8,191.87 L114.1,191.49 L113.4,190.5 L112.7,189.14 L112.0,189.11 L111.3,189.05 L110.6,189.09 L109.9,191.33 L109.2,191.46 L108.5,191.09 L107.8,191.9 L107.1,191.64 L106.4,191.18 L105.7,190.42 L105.0,191.53 L104.3,190.73 L103.6,189.14 L102.9,189.07 L102.2,189.12 L101.5,189.13 L100.8,190.89 L100.1,191.15 L99.4,191.45 L98.7,190.91 L98.0,190.45 L97.3,190.24 L96.6,191.49 L95.9,191.28 L95.2,190.77 L94.5,190.79 L93.8,189.12 L93.1,189.01 L92.4,189.16 L91.7,192.29 L91.0,190.97 L90.3,191.63 L89.6,190.83 L88.9,191.5 L88.2,191.16 L87.5,191.34 L86.8,191.51 L86.1,191.58 L85.4,190.64 L84.7,189.14 L84.0,189.01 L83.3,189.11 L82.6,189.17 L81.9,192.39 L81.2,192.15 L80.5,191.35 L79.8,191.25 L79.1,190.56 L78.4,190.85 L77.7,191.58 L77.0,192.02 L76.3,191.69 L75.6,190.34 L74.9,189.19 L74.2,189.17 L73.5,189.18 L72.8,190.42 L72.1,191.49 L71.4,191.1 L70.7,190.82 L70.0,191.18 L69.3,190.77 L68.6,191.81 L67.9,191.17 L67.2,191.52 L66.5,191.25 L65.8,189.11 L65.1,189.03 L64.4,189.05 L63.7,189.09 L63.0,191.89 L62.3,190.66 L61.6,191.49 L60.9,191.29 L60.2,190.55 L59.5,191.36 L58.8,190.66 L58.1,191.07 L57.4,191.5 L56.7,189.37 L56.0,189.15 L55.3,189.08 L54.6,189.06 L53.9,191.16 L53.2,190.94 L52.5,191.29 L51.8,190.87 L51.1,192.01 L50.4,190.27 L49.7,191.85 L49.0,191.45 L48.3,191.47 L47.6,190.87 L46.9,189.12 L46.2,189.01 L45.5,189.11 L44.8,189.08 L44.1,190.96 L43.4,192.09 L42.7,190.74 L42.0,191.37 L41.3,192.01 L40.6,191.5 L39.9,191.62 L39.2,191.25 L38.5,191.81 L37.8,189.16 L37.1,189.17 L36.4,189.02 L35.7,189.04 L35.0,191.24 L34.3,190.36 L33.6,190.69 L32.9,191.89 L32.2,192.07 L31.5,191.32 L30.8,190.71 L30.1,190.64 L29.4,192.09 L28.7,190.02 L28.0,189.08 L27.3,189.15 L26.6,189.03 L25.9,192.36 L25.2,190.63 L24.5,191.9 L23.8,191.37 L23.1,192.02 L22.4,192.35 L21.7,191.26 L21.0,192.37 L20.3,191.99 L19.6,191.79 L18.9,189.12 L18.2,189.07 L17.5,189.08 L16.8,189.1 L16.1,191.32 L15.4,191.98 L14.7,190.53 L14.0,191.49 L13.3,191.57 L12.6,191.37 L11.9,192.04 L11.2,192.01 L10.5,191.86 L9.8,189.66 L9.1,189.12 L8.4,189.15 L7.7,189.02 L7.0,191.85 L6.3,191.91 L5.6,190.83 L4.9,191.38 L4.2,191.53 L3.5,191.23 L2.8,191.6 L2.1,190.3 L1.4,191.58 L0.7,191.35 L0,189.05 Z" fill="#1a1f3c"/></svg>
<svg style="left:27px;top:0px" width="599" height="768"><path d="M0,199.9 L0.7,198.11 L1.4,197.22 L2.1,196.93 L2.8,197.26 L3.5,198.3 L4.2,196.98 L4.9,197.13 L5.6,197.8 L6.3,198.16 L7.0,197.82 L7.7,199.9 L8.4,199.9 L9.1,199.9 L9.8,199.4 L10.5,197.99 L11.2,196.94 L11.9,198.36 L12.6,198.11 L13.3,197.0 L14.0,197.06 L14.7,198.01 L15.4,197.63 L16.1,197.86 L16.8,199.9 L17.5,199.9 L18.2,199.9 L18.9,199.9 L19.6,197.19 L20.3,198.1 L21.0,198.25 L21.7,197.05 L22.4,197.61 L23.1,197.82 L23.8,197.05 L24.5,198.04 L25.2,198.18 L25.9,198.0 L26.6,199.9 L27.3,199.9 L28.0,199.9 L28.7,198.65 L29.4,197.55 L30.1,198.3 L30.8,198.46 L31.5,197.95 L32.2,197.98 L32.9,197.99 L33.6,197.85 L34.3,198.03 L35.0,197.25 L35.7,199.9 L36.4,199.9 L37.1,199.9 L37.8,199.97 L38.5,197.73 L39.2,197.67 L39.9,197.9 L40.6,197.91 L41.3,197.63 L42.0,197.71 L42.7,197.74 L43.4,198.2 L44.1,198.32 L44.8,199.9 L45.5,199.9 L46.2,199.9 L46.9,199.9 L47.6,197.9 L48.3,197.15 L49.0,196.93 L49.7,197.89 L50.4,197.29 L51.1,197.31 L51.8,196.9 L52.5,197.1 L53.2,198.37 L53.9,198.35 L54.6,199.9 L55.3,199.9 L56.0,199.9 L56.7,199.65 L57.4,197.35 L58.1,197.68 L58.8,198.16 L59.5,197.31 L60.2,197.27 L60.9,198.48 L61.6,197.64 L62.3,198.15 L63.0,198.29 L63.7,199.9 L64.4,199.9 L65.1,199.9 L65.8,199.9 L66.5,197.04 L67.2,197.12 L67.9,198.13 L68.6,197.06 L69.3,197.88 L70.0,197.38 L70.7,197.96 L71.4,197.26 L72.1,198.38 L72.8,197.33 L73.5,199.9 L74.2,199.9 L74.9,199.9 L75.6,199.09 L76.3,197.94 L77.0,197.92 L77.7,197.46 L78.4,197.44 L79.1,197.51 L79.8,197.66 L80.5,197.17 L81.2,197.24 L81.9,197.14 L82.6,199.9 L83.3,199.9 L84.0,199.9 L84.7,199.9 L85.4,198.08 L86.1,197.6 L86.8,198.5 L87.5,198.18 L88.2,197.77 L88.9,198.04 L89.6,197.2 L90.3,198.5 L91.0,197.72 L91.7,197.24 L92.4,199.9 L93.1,199.9 L93.8,199.9 L94.5,198.31 L95.2,197.67 L95.9,198.4 L96.6,197.92 L97.3,197.94 L98.0,198.44 L98.7,198.35 L99.4,197.57 L100.1,197.36 L100.8,198.4 L101.5,199.9 L102.2,199.9 L102.9,199.9 L103.6,199.78 L104.3,197.12 L105.0,197.57 L105.7,197.81 L106.4,198.41 L107.1,197.15 L107.8,197.38 L108.5,196.94 L109.2,198.01 L109.9,198.21 L110.6,199.9 L111.3,199.9 L112.0,199.9 L112.7,199.9 L113.4,197.39 L114.1,197.15 L114.8,198.08 L115.5,197.81 L116.2,197.09 L116.9,197.01 L117.6,197.93 L118.3,197.3 L119.0,197.91 L119.7,197.52 L120.4,199.9 L121.1,199.9 L121.8,199.9 L122.5,199.18 L123.2,197.59 L123.9,196.96 L124.6,197.56 L125.3,197.09 L126.0,197.18 L126.7,196.91 L127.4,197.87 L128.1,197.46 L128.8,197.29 L129.5,199.9 L130.2,199.9 L130.9,199.9 L131.6,199.9 L132.3,196.98 L133.0,197.6 L133.7,197.47 L134.4,198.04 L135.1,197.08 L135.8,198.05 L136.5,197.33 L137.2,197.46 L137.9,197.35 L138.6,197.9 L139.3,199.9 L140.0,199.9 L140.7,199.9 L141.4,198.15 L142.1,197.59 L142.8,197.45 L143.5,197.14 L144.2,197.23 L144.9,197.57 L145.6,197.51 L146.3,197.66 L147.0,197.01 L147.7,197.74 L148.4,199.9 L149.1,199.9 L149.8,199.9 L150.5,199.9 L151.2,197.28 L151.9,198.37 L152.6,198.48 L153.3,197.72 L154.0,197.83 L154.7,197.5 L155.4,197.2 L156.1,197.06 L156.8,198.38 L157.5,198.39 L158.2,199.9 L158.9,199.9 L159.6,199.9 L160.3,197.66 L161.0,197.94 L161.7,197.18 L162.4,197.5 L163.1,197.85 L163.8,196.95 L164.5,198.19 L165.2,197.23 L165.9,198.23 L166.6,198.23 L167.3,199.9 L168.0,199.9 L168.7,199.9 L169.4,199.68 L170.1,197.84 L170.8,198.43 L171.5,197.6 L172.2,197.17 L172.9,197.79 L173.6,197.94 L174.3,197.7 L175.0,198.12 L175.7,198.06 L176.4,199.9 L177.1,199.9 L177.8,199.9 L178.5,199.9 L179.2,197.87 L179.9,198.22 L180.6,198.46 L181.3,197.25 L182.0,197.13 L182.7,197.61 L183.4,197.38 L184.1,197.82 L184.8,198.36 L185.5,197.76 L186.2,199.9 L186.9,199.9 L187.6,199.9 L188.3,198.67 L189.0,197.08 L189.7,198.07 L190.4,197.22 L191.1,197.22 L191.8,197.54 L192.5,198.12 L193.2,197.31 L193.9,197.01 L194.6,196.95 L195.3,199.9 L196.0,199.9 L196.7,199.9 L197.4,199.9 L198.1,197.38 L198.8,197.17 L199.5,197.09 L200.2,198.4 L200.9,197.99 L201.6,198.09 L202.3,198.05 L203.0,196.92 L203.7,197.13 L204.4,197.36 L205.1,199.9 L205.8,199.9 L206.5,199.9 L207.2,198.83 L207.9,197.99 L208.6,197.63 L209.3,198.25 L210.0,197.4 L210.7,197.43 L211.4,197.88 L212.1,197.52 L212.8,197.66 L213.5,197.41 L214.2,199.9 L214.9,199.9 L215.6,199.9 L216.3,199.81 L217.0,197.23 L217.7,198.27 L218.4,197.5 L219.1,198.5 L219.8,196.94 L220.5,197.37 L221.2,197.86 L221.9,197.6 L222.6,197.65 L223.3,199.9 L224.0,199.9 L224.7,199.9 L225.4,199.9 L226.1,197.43 L226.8,196.95 L227.5,198.08 L228.2,198.35 L228.9,197.16 L229.6,197.11 L230.3,198.33 L231.0,197.71 L231.7,198.02 L232.4,197.57 L233.1,199.9 L233.8,199.9 L234.5,199.9 L235.2,199.56 L235.9,197.73 L236.6,197.52 L237.3,197.01 L238.0,198.25 L238.7,196.96 L239.4,198.33 L240.1,197.38 L240.8,197.9 L241.5,197.94 L242.2,199.9 L242.9,199.9 L243.6,199.9 L244.3,199.9 L245.0,197.8 L245.7,197.46 L246.4,197.71 L247.1,198.17 L247.8,196.93 L248.5,198.1 L249.2,198.37 L249.9,197.57 L250.6,197.49 L251.3,197.14 L252.0,199.9 L252.7,199.9 L253.4,199.9 L254.1,198.94 L254.8,197.29 L255.5,198.38 L256.2,197.13 L256.9,197.98 L257.6,197.62 L258.3,196.98 L259.0,197.74 L259.7,198.11 L260.4,197.16 L261.1,199.9 L261.8,199.9 L262.5,199.9 L263.2,199.9 L263.9,198.34 L264.6,197.79 L265.3,198.22 L266.0,197.1 L266.7,197.61 L267.4,197.67 L268.1,197.86 L268.8,197.19 L269.5,197.6 L270.2,197.04 L270.9,199.9 L271.6,199.9 L272.3,199.9 L273.0,198.24 L273.7,196.93 L274.4,197.95 L275.1,197.23 L275.8,198.38 L276.5,197.86 L277.2,197.24 L277.9,198.42 L278.6,197.06 L279.3,198.02 L280.0,199.9 L280.7,199.9 L281.4,199.9 L282.1,199.54 L282.8,198.19 L283.5,197.57 L284.2,197.59 L284.9,198.18 L285.6,197.91 L286.3,196.94 L287.0,197.42 L287.7,198.26 L288.4,197.17 L289.1,199.9 L289.8,199.9 L290.5,199.9 L291.2,199.9 L291.9,197.9 L292.6,198.26 L293.3,197.92 L294.0,198.15 L294.7,197.99 L295.4,198.37 L296.1,197.13 L296.8,198.09 L297.5,198.33 L298.2,198.47 L298.9,199.9 L299.6,199.9 L300.3,199.9 L301.0,198.97 L301.7,198.47 L302.4,198.36 L303.1,198.27 L303.8,197.14 L304.5,198.06 L305.2,197.38 L305.9,198.12 L306.6,197.69 L307.3,197.45 L308.0,199.9 L308.7,199.9 L309.4,199.9 L310.1,199.9 L310.8,197.99 L311.5,197.09 L312.2,197.79 L312.9,196.95 L313.6,198.12 L314.3,197.69 L315.0,197.94 L315.7,198.11 L316.4,197.53 L317.1,197.75 L317.8,199.9 L318.5,199.9 L319.2,199.9 L319.9,198.72 L320.6,196.97 L321.3,197.94 L322.0,197.8 L322.7,197.9 L323.4,197.58 L324.1,197.28 L324.8,198.03 L325.5,197.78 L326.2,198.05 L326.9,199.9 L327.6,199.9 L328.3,199.9 L329.0,199.9 L329.7,198.25 L330.4,198.17 L331.1,197.48 L331.8,197.72 L332.5,197.44 L333.2,197.87 L333.9,198.06 L334.6,197.48 L335.3,197.68 L336.0,198.21 L336.7,199.9 L337.4,199.9 L338.1,199.9 L338.8,198.45 L339.5,197.86 L340.2,197.98 L340.9,197.69 L341.6,198.36 L342.3,198.01 L343.0,197.0 L343.7,197.39 L344.4,198.32 L345.1,197.05 L345.8,199.9 L346.5,199.9 L347.2,199.9 L347.9,199.45 L348.6,197.13 L349.3,198.01 L350.0,197.63 L350.7,197.93 L351.4,197.14 L352.1,197.64 L352.8,198.19 L353.5,198.3 L354.2,197.5 L354.9,199.9 L355.6,199.9 L356.3,199.9 L357.0,199.9 L357.7,198.31 L358.4,197.81 L359.1,197.32 L359.8,197.79 L360.5,197.75 L361.2,198.09 L361.9,198.31 L362.6,197.14 L363.3,197.65 L364.0,197.35 L364.7,199.9 L365.4,199.9 L366.1,199.9 L366.8,199.19 L367.5,198.01 L368.2,197.9 L368.9,197.99 L369.6,197.26 L370.3,197.29 L371.0,198.12 L371.7,197.01 L372.4,198.29 L373.1,197.01 L373.8,199.9 L374.5,199.9 L375.2,199.9 L375.9,199.9 L376.6,197.19 L377.3,197.46 L378.0,198.04 L378.7,198.36 L379.4,196.91 L380.1,197.07 L380.8,198.29 L381.5,196.98 L382.2,196.91 L382.9,197.36 L383.6,199.9 L384.3,199.9 L385.0,199.9 L385.7,198.73 L386.4,198.06 L387.1,198.06 L387.8,198.35 L388.5,197.67 L389.2,196.99 L389.9,198.09 L390.6,197.01 L391.3,197.45 L392.0,198.5 L392.7,199.9 L393.4,199.9 L394.1,199.9 L394.8,199.81 L395.5,198.06 L396.2,197.34 L396.9,198.25 L397.6,197.59 L398.3,197.55 L399.0,197.48 L399.7,198.01 L400.4,196.99 L401.1,198.46 L401.8,199.9 L402.5,199.9 L403.2,199.9 L403.9,199.9 L404.6,197.95 L405.3,197.54 L406.0,198.17 L406.7,197.14 L407.4,197.94 L408.1,197.33 L408.8,197.1 L409.5,197.31 L410.2,197.9 L410.9,197.88 L411.6,199.9 L412.3,199.9 L413.0,199.9 L413.7,199.67 L414.4,197.99 L415.1,197.33 L415.8,197.56 L416.5,197.94 L417.2,197.8 L417.9,197.43 L418.6,198.2 L419.3,197.3 L420.0,197.71 L420.7,199.9 L421.4,199.9 L422.1,199.9 L422.8,199.9 L423.5,198.18 L424.2,197.9 L424.9,197.27 L425.6,198.16 L426.3,196.93 L427.0,197.57 L427.7,197.25 L428.4,197.17 L429.1,197.18 L429.8,197.58 L430.5,199.9 L431.2,199.9 L431.9,199.9 L432.6,198.48 L433.3,197.38 L434.0,197.66 L434.7,197.03 L435.4,198.08 L436.1,196.93 L436.8,198.39 L437.5,197.33 L438.2,197.37 L438.9,197.21 L439.6,199.9 L440.3,199.9 L441.0,199.9 L441.7,199.9 L442.4,197.19 L443.1,197.11 L443.8,198.33 L444.5,197.01 L445.2,197.75 L445.9,197.4 L446.6,197.75 L447.3,198.38 L448.0,198.25 L448.7,197.66 L449.4,199.9 L450.1,199.9 L450.8,199.9 L451.5,198.93 L452.2,198.27 L452.9,197.92 L453.6,197.79 L454.3,197.16 L455.0,197.68 L455.7,196.91 L456.4,198.42 L457.1,196.98 L457.8,197.91 L458.5,199.9 L459.2,199.9 L459.9,199.9 L460.6,199.56 L461.3,197.4 L462.0,198.11 L462.7,197.49 L463.4,197.65 L464.1,196.97 L464.8,198.22 L465.5,197.55 L466.2,197.04 L466.9,197.69 L467.6,199.9 L468.3,199.9 L469.0,199.9 L469.7,199.9 L470.4,197.42 L471.1,196.95 L471.8,197.9 L472.5,198.37 L473.2,198.4 L473.9,197.69 L474.6,198.34 L475.3,196.91 L476.0,197.04 L476.7,198.0 L477.4,199.9 L478.1,199.9 L478.8,199.9 L479.5,199.55 L480.2,197.06 L480.9,197.2 L481.6,197.78 L482.3,197.24 L483.0,197.68 L483.7,197.15 L484.4,198.49 L485.1,197.09 L485.8,197.5 L486.5,199.9 L487.2,199.9 L487.9,199.9 L488.6,199.9 L489.3,197.17 L490.0,197.29 L490.7,198.05 L491.4,197.29 L492.1,197.55 L492.8,197.32 L493.5,198.07 L494.2,197.36 L494.9,197.07 L495.6,197.62 L496.3,199.9 L497.0,199.9 L497.7,199.9 L498.4,199.1 L499.1,197.78 L499.8,197.13 L500.5,198.13 L501.2,197.74 L501.9,198.43 L502.6,198.13 L503.3,198.01 L504.0,198.04 L504.7,197.65 L505.4,199.9 L506.1,199.9 L506.8,199.9 L507.5,199.9 L508.2,197.41 L508.9,197.34 L509.6,198.19 L510.3,197.45 L511.0,197.43 L511.7,197.25 L512.4,196.95 L513.1,197.39 L513.8,198.27 L514.5,198.2 L515.2,199.9 L515.9,199.9 L516.6,199.9 L517.3,198.08 L518.0,196.95 L518.7,197.14 L519.4,197.46 L520.1,198.22 L520.8,197.9 L521.5,197.42 L522.2,198.09 L522.9,197.7 L523.6,197.44 L524.3,199.9 L525.0,199.9 L525.7,199.9 L526.4,199.44 L527.1,197.95 L527.8,197.9 L528.5,197.3 L529.2,197.63 L529.9,197.54 L530.6,197.27 L531.3,198.42 L532.0,198.23 L532.7,196.92 L533.4,199.9 L534.1,199.9 L534.8,199.9 L535.5,199.9 L536.2,196.92 L536.9,197.92 L537.6,197.93 L538.3,197.82 L539.0,197.99 L539.7,197.59 L540.4,197.75 L541.1,197.61 L541.8,197.33 L542.5,198.22 L543.2,199.9 L543.9,199.9 L544.6,199.9 L545.3,198.94 L546.0,197.19 L546.7,198.14 L547.4,198.13 L548.1,198.37 L548.8,197.34 L549.5,198.26 L550.2,198.19 L550.9,197.52 L551.6,197.65 L552.3,199.9 L553.0,199.9 L553.7,199.9 L554.4,199.9 L555.1,197.96 L555.8,197.64 L556.5,197.03 L557.2,198.09 L557.9,197.45 L558.6,198.14 L559.3,197.69 L560.0,197.21 L560.7,198.26 L561.4,197.55 L562.1,199.9 L562.8,199.9 L563.5,199.9 L564.2,198.29 L564.9,196.9 L565.6,197.61 L566.3,197.93 L567.0,197.8 L567.7,198.11 L568.4,198.27 L569.1,197.69 L569.8,197.6 L570.5,197.35 L571.2,199.9 L571.9,199.9 L572.6,199.9 L573.3,199.77 L574.0,197.34 L574.7,198.29 L575.4,197.2 L576.1,197.81 L576.8,198.46 L577.5,197.39 L578.2,197.42 L578.9,198.49 L579.6,196.94 L580.3,199.9 L581.0,199.9 L581.7,199.9 L582.4,199.9 L583.1,197.61 L583.8,197.85 L584.5,198.21 L585.2,197.03 L585.9,197.11 L586.6,198.09 L587.3,198.04 L588.0,197.91 L588.7,197.41 L589.4,197.09 L590.1,199.9 L590.8,199.9 L591.5,199.9 L592.2,199.43 L592.9,196.99 L593.6,197.71 L594.3,197.13 L595.0,197.84 L595.7,197.75 L596.4,198.07 L597.1,197.68 L597.8,198.49 L598.5,197.9 L598.5,203.26 L597.8,202.25 L597.1,203.31 L596.4,202.76 L595.7,203.43 L595.0,202.89 L594.3,203.98 L593.6,202.93 L592.9,204.08 L592.2,201.72 L591.5,201.08 L590.8,201.09 L590.1,201.16 L589.4,204.11 L588.7,203.54 L588.0,202.95 L587.3,203.18 L586.6,202.72 L585.9,203.57 L585.2,203.94 L584.5,202.72 L583.8,202.79 L583.1,203.53 L582.4,201.03 L581.7,201.12 L581.0,201.09 L580.3,201.17 L579.6,204.46 L578.9,202.66 L578.2,203.87 L577.5,203.49 L576.8,202.72 L576.1,202.81 L575.4,204.11 L574.7,202.45 L574.0,203.92 L573.3,201.23 L572.6,201.05 L571.9,201.13 L571.2,201.03 L570.5,204.08 L569.8,203.79 L569.1,203.0 L568.4,202.59 L567.7,202.75 L567.0,202.94 L566.3,202.69 L565.6,202.97 L564.9,204.28 L564.2,202.54 L563.5,201.09 L562.8,201.15 L562.1,201.09 L561.4,203.08 L560.7,202.8 L560.0,203.94 L559.3,202.94 L558.6,202.68 L557.9,203.72 L557.2,202.76 L556.5,204.21 L555.8,203.43 L555.1,203.37 L554.4,201.05 L553.7,201.18 L553.0,201.02 L552.3,201.06 L551.6,203.34 L550.9,203.83 L550.2,203.09 L549.5,202.91 L548.8,203.42 L548.1,202.56 L547.4,202.94 L546.7,202.88 L546.0,203.61 L545.3,202.26 L544.6,201.12 L543.9,201.16 L543.2,201.08 L542.5,202.47 L541.8,203.3 L541.1,203.35 L540.4,203.19 L539.7,203.66 L539.0,203.05 L538.3,203.34 L537.6,202.94 L536.9,203.29 L536.2,204.4 L535.5,201.15 L534.8,201.17 L534.1,201.04 L533.4,201.06 L532.7,203.78 L532.0,203.09 L531.3,202.87 L530.6,204.08 L529.9,203.41 L529.2,203.0 L528.5,203.51 L527.8,203.27 L527.1,202.79 L526.4,201.62 L525.7,201.09 L525.0,201.15 L524.3,201.17 L523.6,203.69 L522.9,203.48 L522.2,202.68 L521.5,203.7 L520.8,202.91 L520.1,202.74 L519.4,203.39 L518.7,204.25 L518.0,203.68 L517.3,203.14 L516.6,201.16 L515.9,201.06 L515.2,201.02 L514.5,202.61 L513.8,202.8 L513.1,203.87 L512.4,203.64 L511.7,204.14 L511.0,203.17 L510.3,203.41 L509.6,202.99 L508.9,203.56 L508.2,203.81 L507.5,201.08 L506.8,201.18 L506.1,201.18 L505.4,201.15 L504.7,203.23 L504.0,202.81 L503.3,202.79 L502.6,202.71 L501.9,202.79 L501.2,203.26 L500.5,203.16 L499.8,204.36 L499.1,203.38 L498.4,201.92 L497.7,201.13 L497.0,201.04 L496.3,201.12 L495.6,203.44 L494.9,203.74 L494.2,203.6 L493.5,203.04 L492.8,203.87 L492.1,203.51 L491.4,203.8 L490.7,203.14 L490.0,204.04 L489.3,203.72 L488.6,201.09 L487.9,201.03 L487.2,201.12 L486.5,201.06 L485.8,203.17 L485.1,203.58 L484.4,202.45 L483.7,203.69 L483.0,203.36 L482.3,203.57 L481.6,203.26 L480.9,203.66 L480.2,204.29 L479.5,201.32 L478.8,201.08 L478.1,201.04 L477.4,201.06 L476.7,202.76 L476.0,204.03 L475.3,204.29 L474.6,202.91 L473.9,203.25 L473.2,202.89 L472.5,202.37 L471.8,203.45 L471.1,203.75 L470.4,204.02 L469.7,201.08 L469.0,201.09 L468.3,201.09 L467.6,201.05 L466.9,203.29 L466.2,203.65 L465.5,203.44 L464.8,202.78 L464.1,203.8 L463.4,203.46 L462.7,203.3 L462.0,202.9 L461.3,203.78 L460.6,201.38 L459.9,201.04 L459.2,201.15 L458.5,201.06 L457.8,202.8 L457.1,204.4 L456.4,202.55 L455.7,204.31 L455.0,203.44 L454.3,203.62 L453.6,203.07 L452.9,203.33 L452.2,203.03 L451.5,202.05 L450.8,201.08 L450.1,201.03 L449.4,201.12 L448.7,202.98 L448.0,202.78 L447.3,202.43 L446.6,203.26 L445.9,203.87 L445.2,203.56 L444.5,203.82 L443.8,202.53 L443.1,203.93 L442.4,203.92 L441.7,201.17 L441.0,201.14 L440.3,201.15 L439.6,201.13 L438.9,203.34 L438.2,203.94 L437.5,203.5 L436.8,202.41 L436.1,203.63 L435.4,202.92 L434.7,204.38 L434.0,203.52 L433.3,203.29 L432.6,202.61 L431.9,201.09 L431.2,201.13 L430.5,201.04 L429.8,202.99 L429.1,204.28 L428.4,203.62 L427.7,204.07 L427.0,203.47 L426.3,204.39 L425.6,203.11 L424.9,203.51 L424.2,203.49 L423.5,203.15 L422.8,201.17 L422.1,201.11 L421.4,201.02 L420.7,201.06 L420.0,203.39 L419.3,203.75 L418.6,203.11 L417.9,203.48 L417.2,203.21 L416.5,203.33 L415.8,203.48 L415.1,203.38 L414.4,202.79 L413.7,201.22 L413.0,201.15 L412.3,201.14 L411.6,201.01 L410.9,202.88 L410.2,203.3 L409.5,203.99 L408.8,203.8 L408.1,204.08 L407.4,202.86 L406.7,204.01 L406.0,202.91 L405.3,203.9 L404.6,202.76 L403.9,201.1 L403.2,201.14 L402.5,201.17 L401.8,201.15 L401.1,202.28 L400.4,204.04 L399.7,203.26 L399.0,203.8 L398.3,203.75 L397.6,203.3 L396.9,202.65 L396.2,203.62 L395.5,202.76 L394.8,201.15 L394.1,201.08 L393.4,201.12 L392.7,201.07 L392.0,202.75 L391.3,203.84 L390.6,204.13 L389.9,202.6 L389.2,203.56 L388.5,203.4 L387.8,202.56 L387.1,202.76 L386.4,203.0 L385.7,202.01 L385.0,201.02 L384.3,201.09 L383.6,201.17 L382.9,203.89 L382.2,204.43 L381.5,204.39 L380.8,202.64 L380.1,204.19 L379.4,204.36 L378.7,202.49 L378.0,202.63 L377.3,203.73 L376.6,203.43 L375.9,201.1 L375.2,201.15 L374.5,201.06 L373.8,201.15 L373.1,203.74 L372.4,202.89 L371.7,204.47 L371.0,202.66 L370.3,204.14 L369.6,203.45 L368.9,203.26 L368.2,203.18 L367.5,203.17 L366.8,201.86 L366.1,201.16 L365.4,201.01 L364.7,201.15 L364.0,203.48 L363.3,203.42 L362.6,203.73 L361.9,202.42 L361.2,203.14 L360.5,202.86 L359.8,203.04 L359.1,203.78 L358.4,203.14 L357.7,202.94 L357.0,201.14 L356.3,201.09 L355.6,201.12 L354.9,201.04 L354.2,203.3 L353.5,202.97 L352.8,203.03 L352.1,203.52 L351.4,204.05 L350.7,203.34 L350.0,203.45 L349.3,202.77 L348.6,204.24 L347.9,201.6 L347.2,201.11 L346.5,201.19 L345.8,201.12 L345.1,204.25 L344.4,202.92 L343.7,203.47 L343.0,203.61 L342.3,203.35 L341.6,202.7 L340.9,203.39 L340.2,202.8 L339.5,203.02 L338.8,202.56 L338.1,201.04 L337.4,201.07 L336.7,201.16 L336.0,202.62 L335.3,203.32 L334.6,203.11 L333.9,202.9 L333.2,203.22 L332.5,203.86 L331.8,203.22 L331.1,203.09 L330.4,202.74 L329.7,202.57 L329.0,201.13 L328.3,201.18 L327.6,201.17 L326.9,201.09 L326.2,202.62 L325.5,202.88 L324.8,203.21 L324.1,203.75 L323.4,203.21 L322.7,202.79 L322.0,203.15 L321.3,202.7 L320.6,204.31 L319.9,202.2 L319.2,201.16 L318.5,201.01 L317.8,201.13 L317.1,203.35 L316.4,203.42 L315.7,203.06 L315.0,202.83 L314.3,203.1 L313.6,202.76 L312.9,204.33 L312.2,203.58 L311.5,203.83 L310.8,202.8 L310.1,201.02 L309.4,201.05 L308.7,201.07 L308.0,201.17 L307.3,203.33 L306.6,203.12 L305.9,202.8 L305.2,203.21 L304.5,203.03 L303.8,203.81 L303.1,202.8 L302.4,202.66 L301.7,202.63 L301.0,201.84 L300.3,201.06 L299.6,201.06 L298.9,201.16 L298.2,202.49 L297.5,202.44 L296.8,203.27 L296.1,203.94 L295.4,202.58 L294.7,203.32 L294.0,202.71 L293.3,203.11 L292.6,202.75 L291.9,202.81 L291.2,201.04 L290.5,201.17 L289.8,201.06 L289.1,201.17 L288.4,203.61 L287.7,202.63 L287.0,203.43 L286.3,204.07 L285.6,202.78 L284.9,203.1 L284.2,203.24 L283.5,203.41 L282.8,202.94 L282.1,201.52 L281.4,201.16 L280.7,201.19 L280.0,201.09 L279.3,203.19 L278.6,203.77 L277.9,202.55 L277.2,204.18 L276.5,202.75 L275.8,202.85 L275.1,204.02 L274.4,203.42 L273.7,203.7 L273.0,202.5 L272.3,201.16 L271.6,201.12 L270.9,201.04 L270.2,203.65 L269.5,203.19 L268.8,204.21 L268.1,202.89 L267.4,203.33 L266.7,203.5 L266.0,203.52 L265.3,202.59 L264.6,203.08 L263.9,202.9 L263.2,201.07 L262.5,201.08 L261.8,201.16 L261.1,201.17 L260.4,203.65 L259.7,202.66 L259.0,203.56 L258.3,203.85 L257.6,203.31 L256.9,202.98 L256.2,203.62 L255.5,202.37 L254.8,203.32 L254.1,201.9 L253.4,201.03 L252.7,201.17 L252.0,201.18 L251.3,203.66 L250.6,203.06 L249.9,203.05 L249.2,202.84 L248.5,203.25 L247.8,203.57 L247.1,202.98 L246.4,203.5 L245.7,203.62 L245.0,203.32 L244.3,201.12 L243.6,201.12 L242.9,201.15 L242.2,201.18 L241.5,203.18 L240.8,203.23 L240.1,203.32 L239.4,202.46 L238.7,203.94 L238.0,202.41 L237.3,204.28 L236.6,203.37 L235.9,203.28 L235.2,201.31 L234.5,201.12 L233.8,201.02 L233.1,201.15 L232.4,203.25 L231.7,203.15 L231.0,203.47 L230.3,202.59 L229.6,203.54 L228.9,204.05 L228.2,202.48 L227.5,202.89 L226.8,204.16 L226.1,203.18 L225.4,201.14 L224.7,201.12 L224.0,201.14 L223.3,201.06 L222.6,203.6 L221.9,203.82 L221.2,203.09 L220.5,203.72 L219.8,203.92 L219.1,202.31 L218.4,203.9 L217.7,202.87 L217.0,204.08 L216.3,201.27 L215.6,201.09 L214.9,201.11 L214.2,201.1 L213.5,203.31 L212.8,203.56 L212.1,203.88 L211.4,203.49 L210.7,204.0 L210.0,203.33 L209.3,202.58 L208.6,203.48 L207.9,203.07 L207.2,202.29 L206.5,201.11 L205.8,201.04 L205.1,201.06 L204.4,203.53 L203.7,204.19 L203.0,204.22 L202.3,203.1 L201.6,202.57 L200.9,202.68 L200.2,202.88 L199.5,204.01 L198.8,203.44 L198.1,203.42 L197.4,201.09 L196.7,201.18 L196.0,201.16 L195.3,201.16 L194.6,203.77 L193.9,203.49 L193.2,203.3 L192.5,202.82 L191.8,203.12 L191.1,203.69 L190.4,204.16 L189.7,202.66 L189.0,204.39 L188.3,202.18 L187.6,201.14 L186.9,201.11 L186.2,201.18 L185.5,202.93 L184.8,202.48 L184.1,202.8 L183.4,203.67 L182.7,203.71 L182.0,204.21 L181.3,204.12 L180.6,202.3 L179.9,202.86 L179.2,202.79 L178.5,201.16 L177.8,201.12 L177.1,201.17 L176.4,201.02 L175.7,203.23 L175.0,202.98 L174.3,203.01 L173.6,203.36 L172.9,202.88 L172.2,203.53 L171.5,203.23 L170.8,202.7 L170.1,202.94 L169.4,201.39 L168.7,201.16 L168.0,201.17 L167.3,201.09 L166.6,203.1 L165.9,202.95 L165.2,203.48 L164.5,202.62 L163.8,203.52 L163.1,203.54 L162.4,203.34 L161.7,203.9 L161.0,203.25 L160.3,203.42 L159.6,201.11 L158.9,201.03 L158.2,201.15 L157.5,202.46 L156.8,202.92 L156.1,203.83 L155.4,203.66 L154.7,203.33 L154.0,203.49 L153.3,202.91 L152.6,202.56 L151.9,202.84 L151.2,203.97 L150.5,201.16 L149.8,201.04 L149.1,201.1 L148.4,201.08 L147.7,203.47 L147.0,204.31 L146.3,203.13 L145.6,203.15 L144.9,203.27 L144.2,203.89 L143.5,203.39 L142.8,203.62 L142.1,203.8 L141.4,202.58 L140.7,201.15 L140.0,201.13 L139.3,201.09 L138.6,203.17 L137.9,203.67 L137.2,203.28 L136.5,203.98 L135.8,202.72 L135.1,204.18 L134.4,203.31 L133.7,203.54 L133.0,203.34 L132.3,203.89 L131.6,201.17 L130.9,201.06 L130.2,201.07 L129.5,201.16 L128.8,203.78 L128.1,203.28 L127.4,202.9 L126.7,204.36 L126.0,204.16 L125.3,203.57 L124.6,203.77 L123.9,204.45 L123.2,203.39 L122.5,201.7 L121.8,201.13 L121.1,201.01 L120.4,201.17 L119.7,203.24 L119.0,202.98 L118.3,204.0 L117.6,203.08 L116.9,204.19 L116.2,204.15 L115.5,203.32 L114.8,202.83 L114.1,203.39 L113.4,203.78 L112.7,201.17 L112.0,201.08 L111.3,201.14 L110.6,201.03 L109.9,202.99 L109.2,202.71 L108.5,203.81 L107.8,203.73 L107.1,204.28 L106.4,202.86 L105.7,203.35 L105.0,203.12 L104.3,204.2 L103.6,201.16 L102.9,201.04 L102.2,201.19 L101.5,201.05 L100.8,202.76 L100.1,203.76 L99.4,203.2 L98.7,202.88 L98.0,202.35 L97.3,202.68 L96.6,203.11 L95.9,202.64 L95.2,203.2 L94.5,202.92 L93.8,201.12 L93.1,201.12 L92.4,201.06 L91.7,203.59 L91.0,202.9 L90.3,202.47 L89.6,203.97 L88.9,203.08 L88.2,203.28 L87.5,203.14 L86.8,202.31 L86.1,203.46 L85.4,202.65 L84.7,201.05 L84.0,201.14 L83.3,201.09 L82.6,201.1 L81.9,203.43 L81.2,203.56 L80.5,203.52 L79.8,203.33 L79.1,203.48 L78.4,203.65 L77.7,203.5 L77.0,203.43 L76.3,203.14 L75.6,201.74 L74.9,201.09 L74.2,201.18 L73.5,201.08 L72.8,203.76 L72.1,202.89 L71.4,203.54 L70.7,203.24 L70.0,203.45 L69.3,203.14 L68.6,203.88 L67.9,202.64 L67.2,203.65 L66.5,204.27 L65.8,201.03 L65.1,201.13 L64.4,201.1 L63.7,201.09 L63.0,202.93 L62.3,202.91 L61.6,203.76 L60.9,202.34 L60.2,203.92 L59.5,203.8 L58.8,202.99 L58.1,203.69 L57.4,203.21 L56.7,201.28 L56.0,201.13 L55.3,201.06 L54.6,201.16 L53.9,202.38 L53.2,202.88 L52.5,203.95 L51.8,204.29 L51.1,203.97 L50.4,203.66 L49.7,202.8 L49.0,203.59 L48.3,204.23 L47.6,203.37 L46.9,201.02 L46.2,201.06 L45.5,201.15 L44.8,201.04 L44.1,202.92 L43.4,203.13 L42.7,203.43 L42.0,203.25 L41.3,203.35 L40.6,202.71 L39.9,202.99 L39.2,203.62 L38.5,203.17 L37.8,201.09 L37.1,201.03 L36.4,201.1 L35.7,201.15 L35.0,203.69 L34.3,202.96 L33.6,203.02 L32.9,203.04 L32.2,202.73 L31.5,202.8 L30.8,202.77 L30.1,202.75 L29.4,203.23 L28.7,202.44 L28.0,201.08 L27.3,201.17 L26.6,201.03 L25.9,203.12 L25.2,203.12 L24.5,203.29 L23.8,203.7 L23.1,202.83 L22.4,203.06 L21.7,204.38 L21.0,203.06 L20.3,202.69 L19.6,203.39 L18.9,201.15 L18.2,201.18 L17.5,201.16 L16.8,201.06 L16.1,203.14 L15.4,203.42 L14.7,202.77 L14.0,203.77 L13.3,203.72 L12.6,202.69 L11.9,202.89 L11.2,203.83 L10.5,202.92 L9.8,201.75 L9.1,201.06 L8.4,201.18 L7.7,201.09 L7.0,203.03 L6.3,203.08 L5.6,202.91 L4.9,204.28 L4.2,203.8 L3.5,202.76 L2.8,204.13 L2.1,203.68 L1.4,203.99 L0.7,203.17 L0,201.17 Z" fill="#1a1f3c"/></svg>
<svg style="left:703px;top:0px" width="74" height="768"><path d="M0,187.9 L0.7,187.89 L1.4,186.19 L2.1,186.14 L2.8,186.04 L3.5,186.47 L4.2,185.67 L4.9,185.43 L5.6,186.42 L6.3,186.1 L7.0,186.22 L7.7,187.9 L8.4,187.9 L9.1,187.9 L9.8,187.9 L10.5,185.62 L11.2,186.31 L11.9,185.3 L12.6,186.28 L13.3,185.35 L14.0,185.99 L14.7,185.79 L15.4,184.93 L16.1,186.22 L16.8,186.17 L17.5,187.9 L18.2,187.9 L18.9,187.9 L19.6,187.25 L20.3,185.8 L21.0,185.83 L21.7,185.15 L22.4,185.3 L23.1,185.83 L23.8,185.93 L24.5,186.16 L25.2,185.97 L25.9,185.19 L26.6,187.9 L27.3,187.9 L28.0,187.9 L28.7,187.9 L29.4,185.46 L30.1,185.09 L30.8,185.23 L31.5,185.92 L32.2,186.46 L32.9,186.05 L33.6,185.42 L34.3,185.95 L35.0,186.19 L35.7,185.83 L36.4,187.9 L37.1,187.9 L37.8,187.9 L38.5,186.73 L39.2,185.28 L39.9,186.34 L40.6,185.05 L41.3,185.63 L42.0,185.67 L42.7,186.25 L43.4,185.07 L44.1,186.21 L44.8,186.19 L45.5,187.9 L46.2,187.9 L46.9,187.9 L47.6,187.9 L48.3,185.59 L49.0,186.43 L49.7,186.07 L50.4,184.94 L51.1,185.13 L51.8,186.06 L52.5,185.15 L53.2,185.69 L53.9,186.26 L54.6,185.67 L55.3,187.9 L56.0,187.9 L56.7,187.9 L57.4,186.17 L58.1,185.24 L58.8,185.6 L59.5,185.91 L60.2,185.91 L60.9,184.98 L61.6,186.16 L62.3,186.49 L63.0,185.6 L63.7,186.02 L64.4,187.9 L65.1,187.9 L65.8,187.9 L66.5,187.49 L67.2,185.93 L67.9,186.04 L68.6,186.27 L69.3,185.68 L70.0,186.06 L70.7,185.04 L71.4,184.97 L72.1,185.35 L72.8,185.76 L73.5,187.9 L73.5,189.08 L72.8,191.6 L72.1,192.07 L71.4,191.8 L70.7,191.68 L70.0,191.06 L69.3,191.52 L68.6,191.0 L67.9,190.86 L67.2,190.87 L66.5,189.66 L65.8,189.09 L65.1,189.01 L64.4,189.18 L63.7,190.65 L63.0,191.67 L62.3,190.42 L61.6,190.95 L60.9,191.88 L60.2,190.91 L59.5,191.05 L58.8,191.32 L58.1,192.21 L57.4,190.55 L56.7,189.1 L56.0,189.06 L55.3,189.13 L54.6,191.39 L53.9,190.71 L53.2,191.5 L52.5,191.83 L51.8,190.9 L51.1,192.09 L50.4,192.01 L49.7,191.09 L49.0,190.29 L48.3,191.55 L47.6,189.02 L46.9,189.11 L46.2,189.14 L45.5,189.08 L44.8,190.98 L44.1,190.89 L43.4,192.25 L42.7,190.43 L42.0,191.2 L41.3,191.71 L40.6,191.7 L39.9,190.82 L39.2,191.49 L38.5,190.02 L37.8,189.14 L37.1,189.15 L36.4,189.06 L35.7,190.96 L35.0,190.47 L34.3,191.01 L33.6,191.37 L32.9,191.15 L32.2,190.72 L31.5,191.04 L30.8,191.35 L30.1,192.35 L29.4,191.79 L28.7,189.03 L28.0,189.09 L27.3,189.09 L26.6,189.01 L25.9,191.4 L25.2,190.93 L24.5,191.07 L23.8,191.13 L23.1,191.45 L22.4,191.39 L21.7,192.22 L21.0,191.46 L20.3,191.38 L19.6,189.75 L18.9,189.1 L18.2,189.11 L17.5,189.17 L16.8,190.57 L16.1,190.53 L15.4,192.43 L14.7,191.32 L14.0,191.37 L13.3,191.85 L12.6,191.04 L11.9,191.9 L11.2,190.52 L10.5,191.56 L9.8,189.01 L9.1,189.06 L8.4,189.07 L7.7,189.13 L7.0,190.84 L6.3,190.71 L5.6,190.85 L4.9,191.61 L4.2,191.56 L3.5,190.53 L2.8,190.73 L2.1,191.21 L1.4,191.0 L0.7,189.06 L0,189.08 Z" fill="#1a1f3c"/></svg>
<svg style="left:703px;top:0px" width="74" height="768"><path d="M0,199.9 L0.7,199.46 L1.4,198.41 L2.1,197.64 L2.8,198.41 L3.5,197.98 L4.2,197.91 L4.9,197.82 L5.6,197.05 L6.3,198.1 L7.0,198.08 L7.7,199.9 L8.4,199.9 L9.1,199.9 L9.8,199.9 L10.5,198.17 L11.2,198.43 L11.9,197.52 L12.6,197.81 L13.3,197.19 L14.0,198.38 L14.7,197.03 L15.4,198.4 L16.1,198.29 L16.8,197.26 L17.5,199.9 L18.2,199.9 L18.9,199.9 L19.6,198.86 L20.3,196.94 L21.0,198.26 L21.7,198.3 L22.4,198.45 L23.1,197.74 L23.8,197.56 L24.5,198.33 L25.2,197.99 L25.9,197.5 L26.6,199.9 L27.3,199.9 L28.0,199.9 L28.7,199.9 L29.4,197.4 L30.1,197.98 L30.8,197.53 L31.5,198.31 L32.2,197.36 L32.9,198.16 L33.6,197.16 L34.3,198.21 L35.0,196.92 L35.7,198.06 L36.4,199.9 L37.1,199.9 L37.8,199.9 L38.5,198.45 L39.2,197.89 L39.9,197.32 L40.6,198.03 L41.3,198.1 L42.0,197.93 L42.7,197.15 L43.4,198.39 L44.1,197.69 L44.8,197.16 L45.5,199.9 L46.2,199.9 L46.9,199.9 L47.6,199.9 L48.3,197.46 L49.0,197.5 L49.7,197.12 L50.4,197.59 L51.1,197.18 L51.8,197.82 L52.5,196.92 L53.2,197.12 L53.9,197.79 L54.6,197.63 L55.3,199.9 L56.0,199.9 L56.7,199.9 L57.4,198.67 L58.1,198.22 L58.8,197.56 L59.5,197.07 L60.2,197.97 L60.9,197.32 L61.6,197.48 L62.3,197.59 L63.0,197.06 L63.7,197.22 L64.4,199.9 L65.1,199.9 L65.8,199.9 L66.5,199.73 L67.2,197.75 L67.9,197.44 L68.6,197.88 L69.3,198.27 L70.0,197.18 L70.7,198.37 L71.4,197.16 L72.1,197.81 L72.8,197.07 L73.5,199.9 L73.5,201.04 L72.8,203.45 L72.1,203.22 L71.4,203.68 L70.7,202.43 L70.0,203.32 L69.3,202.48 L68.6,203.3 L67.9,203.21 L67.2,203.42 L66.5,201.22 L65.8,201.18 L65.1,201.05 L64.4,201.06 L63.7,203.5 L63.0,203.79 L62.3,203.49 L61.6,203.37 L60.9,203.69 L60.2,202.98 L59.5,204.23 L58.8,203.3 L58.1,202.69 L57.4,202.52 L56.7,201.11 L56.0,201.04 L55.3,201.12 L54.6,203.61 L53.9,203.24 L53.2,203.79 L52.5,203.87 L51.8,202.84 L51.1,204.18 L50.4,203.71 L49.7,203.55 L49.0,203.12 L48.3,203.28 L47.6,201.1 L46.9,201.16 L46.2,201.08 L45.5,201.17 L44.8,204.16 L44.1,203.61 L43.4,202.76 L42.7,203.78 L42.0,202.69 L41.3,203.09 L40.6,202.65 L39.9,204.02 L39.2,202.98 L38.5,202.47 L37.8,201.07 L37.1,201.12 L36.4,201.11 L35.7,203.11 L35.0,204.3 L34.3,202.48 L33.6,204.04 L32.9,202.95 L32.2,203.81 L31.5,202.63 L30.8,203.24 L30.1,202.99 L29.4,203.86 L28.7,201.05 L28.0,201.06 L27.3,201.17 L26.6,201.03 L25.9,203.67 L25.2,203.36 L24.5,202.82 L23.8,203.72 L23.1,203.35 L22.4,202.29 L21.7,203.02 L21.0,203.07 L20.3,204.12 L19.6,201.91 L18.9,201.17 L18.2,201.18 L17.5,201.09 L16.8,203.48 L16.1,202.66 L15.4,202.64 L14.7,203.74 L14.0,202.38 L13.3,203.62 L12.6,203.13 L11.9,203.68 L11.2,202.77 L10.5,202.91 L9.8,201.15 L9.1,201.18 L8.4,201.01 L7.7,201.01 L7.0,202.82 L6.3,202.92 L5.6,204.01 L4.9,203.44 L4.2,202.84 L3.5,203.33 L2.8,202.79 L2.1,203.22 L1.4,202.37 L0.7,201.58 L0,201.09 Z" fill="#1a1f3c"/></svg>
<svg style="left:797px;top:0px" width="59" height="768"><path d="M0,187.9 L0.7,187.34 L1.4,185.8 L2.1,186.4 L2.8,186.4 L3.5,186.48 L4.2,185.52 L4.9,185.58 L5.6,184.92 L6.3,185.94 L7.0,185.73 L7.7,187.9 L8.4,187.9 L9.1,187.9 L9.8,187.9 L10.5,185.71 L11.2,184.97 L11.9,185.74 L12.6,185.27 L13.3,185.86 L14.0,185.9 L14.7,185.64 L15.4,186.08 L16.1,186.1 L16.8,186.49 L17.5,187.9 L18.2,187.9 L18.9,187.9 L19.6,186.5 L20.3,186.28 L21.0,185.23 L21.7,186.41 L22.4,185.4 L23.1,185.75 L23.8,186.06 L24.5,185.83 L25.2,185.84 L25.9,186.14 L26.6,187.9 L27.3,187.9 L28.0,187.9 L28.7,187.9 L29.4,186.13 L30.1,185.16 L30.8,186.31 L31.5,185.2 L32.2,186.5 L32.9,185.67 L33.6,186.26 L34.3,185.39 L35.0,185.99 L35.7,186.47 L36.4,187.9 L37.1,187.9 L37.8,187.9 L38.5,186.62 L39.2,185.92 L39.9,186.42 L40.6,186.0 L41.3,185.17 L42.0,185.72 L42.7,185.34 L43.4,185.09 L44.1,186.12 L44.8,185.55 L45.5,187.9 L46.2,187.9 L46.9,187.9 L47.6,187.97 L48.3,186.06 L49.0,186.42 L49.7,186.05 L50.4,185.07 L51.1,186.14 L51.8,185.5 L52.5,185.05 L53.2,185.9 L53.9,186.04 L54.6,187.9 L55.3,187.9 L56.0,187.9 L56.7,187.9 L57.4,186.62 L58.1,185.36 L58.8,185.17 L58.8,191.98 L58.1,191.74 L57.4,190.32 L56.7,189.18 L56.0,189.07 L55.3,189.11 L54.6,189.02 L53.9,190.67 L53.2,191.41 L52.5,191.76 L51.8,191.81 L51.1,191.17 L50.4,192.26 L49.7,191.21 L49.0,190.75 L48.3,190.69 L47.6,189.05 L46.9,189.04 L46.2,189.07 L45.5,189.15 L44.8,191.32 L44.1,191.06 L43.4,192.06 L42.7,191.55 L42.0,190.93 L41.3,192.03 L40.6,190.71 L39.9,190.51 L39.2,191.07 L38.5,190.26 L37.8,189.16 L37.1,189.13 L36.4,189.06 L35.7,190.6 L35.0,190.83 L34.3,191.4 L33.6,190.97 L32.9,191.31 L32.2,190.37 L31.5,191.68 L30.8,190.42 L30.1,191.49 L29.4,190.61 L28.7,189.13 L28.0,189.15 L27.3,189.04 L26.6,189.18 L25.9,190.97 L25.2,191.03 L24.5,191.26 L23.8,190.85 L23.1,191.11 L22.4,191.77 L21.7,190.29 L21.0,191.79 L20.3,191.0 L19.6,190.38 L18.9,189.18 L18.2,189.07 L17.5,189.1 L16.8,190.39 L16.1,191.12 L15.4,191.27 L14.7,191.0 L14.0,190.98 L13.3,191.34 L12.6,191.53 L11.9,191.5 L11.2,192.34 L10.5,191.33 L9.8,189.18 L9.1,189.1 L8.4,189.14 L7.7,189.14 L7.0,191.5 L6.3,190.82 L5.6,192.16 L4.9,191.28 L4.2,191.24 L3.5,190.31 L2.8,190.86 L2.1,190.5 L1.4,191.25 L0.7,189.53 L0,189.08 Z" fill="#1a1f3c"/></svg>
<svg style="left:797px;top:0px" width="59" height="768"><path d="M0,199.9 L0.7,199.14 L1.4,197.54 L2.1,197.65 L2.8,198.09 L3.5,197.8 L4.2,198.36 L4.9,197.97 L5.6,197.94 L6.3,197.25 L7.0,197.53 L7.7,199.9 L8.4,199.9 L9.1,199.9 L9.8,199.9 L10.5,198.17 L11.2,197.27 L11.9,198.4 L12.6,197.76 L13.3,198.13 L14.0,198.04 L14.7,197.69 L15.4,198.19 L16.1,197.08 L16.8,197.65 L17.5,199.9 L18.2,199.9 L18.9,199.9 L19.6,199.3 L20.3,197.23 L21.0,197.56 L21.7,197.29 L22.4,197.09 L23.1,198.36 L23.8,197.6 L24.5,198.18 L25.2,197.82 L25.9,196.98 L26.6,199.9 L27.3,199.9 L28.0,199.9 L28.7,199.9 L29.4,197.87 L30.1,198.29 L30.8,197.84 L31.5,197.15 L32.2,197.49 L32.9,198.24 L33.6,198.37 L34.3,197.72 L35.0,197.98 L35.7,197.46 L36.4,199.9 L37.1,199.9 L37.8,199.9 L38.5,198.71 L39.2,197.05 L39.9,198.28 L40.6,197.76 L41.3,197.83 L42.0,197.31 L42.7,197.0 L43.4,197.95 L44.1,198.15 L44.8,198.35 L45.5,199.9 L46.2,199.9 L46.9,199.9 L47.6,199.89 L48.3,197.41 L49.0,197.01 L49.7,198.01 L50.4,197.39 L51.1,197.24 L51.8,197.42 L52.5,197.46 L53.2,197.45 L53.9,198.32 L54.6,199.9 L55.3,199.9 L56.0,199.9 L56.7,199.9 L57.4,198.14 L58.1,197.05 L58.8,197.62 L58.8,203.03 L58.1,203.45 L57.4,203.14 L56.7,201.18 L56.0,201.17 L55.3,201.16 L54.6,201.07 L53.9,202.6 L53.2,203.47 L52.5,203.72 L51.8,203.95 L51.1,203.3 L50.4,203.32 L49.7,203.2 L49.0,204.48 L48.3,203.59 L47.6,201.16 L46.9,201.1 L46.2,201.01 L45.5,201.02 L44.8,202.4 L44.1,202.96 L43.4,202.67 L42.7,203.65 L42.0,203.32 L41.3,202.83 L40.6,203.45 L39.9,202.97 L39.2,203.88 L38.5,202.5 L37.8,201.07 L37.1,201.1 L36.4,201.09 L35.7,203.85 L35.0,202.93 L34.3,203.68 L33.6,202.87 L32.9,202.43 L32.2,203.68 L31.5,204.04 L30.8,202.91 L30.1,202.53 L29.4,203.11 L28.7,201.09 L28.0,201.13 L27.3,201.04 L26.6,201.16 L25.9,203.74 L25.2,203.1 L24.5,202.8 L23.8,203.22 L23.1,202.74 L22.4,204.2 L21.7,204.02 L21.0,203.23 L20.3,203.29 L19.6,201.69 L18.9,201.18 L18.2,201.1 L17.5,201.01 L16.8,203.0 L16.1,203.8 L15.4,203.1 L14.7,203.08 L14.0,202.72 L13.3,202.76 L12.6,203.21 L11.9,202.52 L11.2,203.48 L10.5,202.64 L9.8,201.18 L9.1,201.07 L8.4,201.1 L7.7,201.08 L7.0,203.85 L6.3,204.18 L5.6,203.1 L4.9,203.02 L4.2,202.94 L3.5,203.11 L2.8,202.92 L2.1,203.11 L1.4,203.37 L0.7,202.01 L0,201.17 Z" fill="#1a1f3c"/></svg>
<div style="left:6px;top:210.5px;width:320.4px;height:2px;background:#a9d4f0;"></div>
<div style="left:26px;top:215.5px;width:601px;height:1.5px;background:#c8d8e8;"></div>
<div style="left:627px;top:215.5px;width:151px;height:1.5px;background:#a0b8c8;"></div>
<div style="left:778px;top:215px;width:79px;height:2px;background:#a9c4d8;"></div>
<div style="left:796px;top:211px;width:61px;height:1.5px;background:#8ab0d0;"></div>
<div style="left:177px;top:222px;width:450px;height:12px;background:#5cffe8;"></div>
<div style="left:177px;top:234px;width:450px;height:25.5px;background:#5cffe8;background-image:repeating-linear-gradient(90deg, rgba(0,0,0,0.08) 0px, rgba(0,0,0,0.08) 1px, transparent 1px, transparent 9.395px);background-position:8.21px 0;"></div>
<div style="left:177px;top:233.5px;width:450px;height:1px;background:rgba(0,0,0,0.35);"></div>
<div style="left:177px;top:222px;width:0.8px;height:37.5px;background:rgba(0,0,0,0.45);"></div>
<div style="left:326.4px;top:222px;width:0.8px;height:37.5px;background:rgba(0,0,50,0.55);"></div>
<div style="left:476.7px;top:222px;width:0.8px;height:37.5px;background:rgba(0,0,50,0.55);"></div>
<div style="left:778px;top:222px;width:79px;height:12px;background:#5cffe8;"></div>
<div style="left:778px;top:234px;width:79px;height:25.5px;background:#5cffe8;background-image:repeating-linear-gradient(90deg, rgba(0,0,0,0.08) 0px, rgba(0,0,0,0.08) 1px, transparent 1px, transparent 9.395px);background-position:8.49px 0;"></div>
<div style="left:778px;top:233.5px;width:79px;height:1px;background:rgba(0,0,0,0.35);"></div>
<div style="left:778px;top:222px;width:0.8px;height:37.5px;background:rgba(0,0,0,0.45);"></div>
<div style="left:190.0px;top:250.3px;width:5px;height:1.5px;background:#0f4a44;"></div>
<div style="left:209.2px;top:250.3px;width:5px;height:1.5px;background:#0f4a44;"></div>
<div style="left:183.0px;top:254.5px;width:4.7px;height:1.5px;background:#0f4a44;"></div>
<div style="left:195.3px;top:254.5px;width:4.7px;height:1.5px;background:#0f4a44;"></div>
<div style="left:227.58px;top:250.3px;width:5px;height:1.5px;background:#0f4a44;"></div>
<div style="left:246.78px;top:250.3px;width:5px;height:1.5px;background:#0f4a44;"></div>
<div style="left:220.58px;top:254.5px;width:4.7px;height:1.5px;background:#0f4a44;"></div>
<div style="left:232.88px;top:254.5px;width:4.7px;height:1.5px;background:#0f4a44;"></div>
<div style="left:265.16px;top:250.3px;width:5px;height:1.5px;background:#0f4a44;"></div>
<div style="left:284.36px;top:250.3px;width:5px;height:1.5px;background:#0f4a44;"></div>
<div style="left:258.16px;top:254.5px;width:4.7px;height:1.5px;background:#0f4a44;"></div>
<div style="left:270.46px;top:254.5px;width:4.7px;height:1.5px;background:#0f4a44;"></div>
<div style="left:302.74px;top:250.3px;width:5px;height:1.5px;background:#0f4a44;"></div>
<div style="left:321.94px;top:250.3px;width:5px;height:1.5px;background:#0f4a44;"></div>
<div style="left:295.74px;top:254.5px;width:4.7px;height:1.5px;background:#0f4a44;"></div>
<div style="left:308.04px;top:254.5px;width:4.7px;height:1.5px;background:#0f4a44;"></div>
<div style="left:340.32px;top:250.3px;width:5px;height:1.5px;background:#0f4a44;"></div>
<div style="left:359.52px;top:250.3px;width:5px;height:1.5px;background:#0f4a44;"></div>
<div style="left:333.32px;top:254.5px;width:4.7px;height:1.5px;background:#0f4a44;"></div>
<div style="left:345.62px;top:254.5px;width:4.7px;height:1.5px;background:#0f4a44;"></div>
<div style="left:377.9px;top:250.3px;width:5px;height:1.5px;background:#0f4a44;"></div>
<div style="left:397.1px;top:250.3px;width:5px;height:1.5px;background:#0f4a44;"></div>
<div style="left:370.9px;top:254.5px;width:4.7px;height:1.5px;background:#0f4a44;"></div>
<div style="left:383.2px;top:254.5px;width:4.7px;height:1.5px;background:#0f4a44;"></div>
<div style="left:415.48px;top:250.3px;width:5px;height:1.5px;background:#0f4a44;"></div>
<div style="left:434.68px;top:250.3px;width:5px;height:1.5px;background:#0f4a44;"></div>
<div style="left:408.48px;top:254.5px;width:4.7px;height:1.5px;background:#0f4a44;"></div>
<div style="left:420.78px;top:254.5px;width:4.7px;height:1.5px;background:#0f4a44;"></div>
<div style="left:453.06px;top:250.3px;width:5px;height:1.5px;background:#0f4a44;"></div>
<div style="left:472.26px;top:250.3px;width:5px;height:1.5px;background:#0f4a44;"></div>
<div style="left:446.06px;top:254.5px;width:4.7px;height:1.5px;background:#0f4a44;"></div>
<div style="left:458.36px;top:254.5px;width:4.7px;height:1.5px;background:#0f4a44;"></div>
<div style="left:490.64px;top:250.3px;width:5px;height:1.5px;background:#0f4a44;"></div>
<div style="left:509.84px;top:250.3px;width:5px;height:1.5px;background:#0f4a44;"></div>
<div style="left:483.64px;top:254.5px;width:4.7px;height:1.5px;background:#0f4a44;"></div>
<div style="left:495.94px;top:254.5px;width:4.7px;height:1.5px;background:#0f4a44;"></div>
<div style="left:528.22px;top:250.3px;width:5px;height:1.5px;background:#0f4a44;"></div>
<div style="left:547.42px;top:250.3px;width:5px;height:1.5px;background:#0f4a44;"></div>
<div style="left:521.22px;top:254.5px;width:4.7px;height:1.5px;background:#0f4a44;"></div>
<div style="left:533.52px;top:254.5px;width:4.7px;height:1.5px;background:#0f4a44;"></div>
<div style="left:565.8px;top:250.3px;width:5px;height:1.5px;background:#0f4a44;"></div>
<div style="left:585.0px;top:250.3px;width:5px;height:1.5px;background:#0f4a44;"></div>
<div style="left:558.8px;top:254.5px;width:4.7px;height:1.5px;background:#0f4a44;"></div>
<div style="left:571.1px;top:254.5px;width:4.7px;height:1.5px;background:#0f4a44;"></div>
<div style="left:603.38px;top:250.3px;width:5px;height:1.5px;background:#0f4a44;"></div>
<div style="left:596.38px;top:254.5px;width:4.7px;height:1.5px;background:#0f4a44;"></div>
<div style="left:608.68px;top:254.5px;width:4.7px;height:1.5px;background:#0f4a44;"></div>
<div style="left:176.9px;top:237.7px;width:4px;height:1.5px;background:#0f4a44;"></div>
<div style="left:205.3px;top:237.7px;width:1.6px;height:1.5px;background:#0f4a44;"></div>
<div style="left:242.8px;top:237.7px;width:1.6px;height:1.5px;background:#0f4a44;"></div>
<div style="left:252.06px;top:237.7px;width:4px;height:1.5px;background:#0f4a44;"></div>
<div style="left:280.46px;top:237.7px;width:1.6px;height:1.5px;background:#0f4a44;"></div>
<div style="left:317.96px;top:237.7px;width:1.6px;height:1.5px;background:#0f4a44;"></div>
<div style="left:327.22px;top:237.7px;width:4px;height:1.5px;background:#0f4a44;"></div>
<div style="left:355.62px;top:237.7px;width:1.6px;height:1.5px;background:#0f4a44;"></div>
<div style="left:393.12px;top:237.7px;width:1.6px;height:1.5px;background:#0f4a44;"></div>
<div style="left:402.38px;top:237.7px;width:4px;height:1.5px;background:#0f4a44;"></div>
<div style="left:430.78px;top:237.7px;width:1.6px;height:1.5px;background:#0f4a44;"></div>
<div style="left:468.28px;top:237.7px;width:1.6px;height:1.5px;background:#0f4a44;"></div>
<div style="left:477.54px;top:237.7px;width:4px;height:1.5px;background:#0f4a44;"></div>
<div style="left:505.94px;top:237.7px;width:1.6px;height:1.5px;background:#0f4a44;"></div>
<div style="left:543.44px;top:237.7px;width:1.6px;height:1.5px;background:#0f4a44;"></div>
<div style="left:552.7px;top:237.7px;width:4px;height:1.5px;background:#0f4a44;"></div>
<div style="left:581.1px;top:237.7px;width:1.6px;height:1.5px;background:#0f4a44;"></div>
<div style="left:618.6px;top:237.7px;width:1.6px;height:1.5px;background:#0f4a44;"></div>
<div style="left:791.28px;top:250.3px;width:5px;height:1.5px;background:#0f4a44;"></div>
<div style="left:810.48px;top:250.3px;width:5px;height:1.5px;background:#0f4a44;"></div>
<div style="left:784.28px;top:254.5px;width:4.7px;height:1.5px;background:#0f4a44;"></div>
<div style="left:796.58px;top:254.5px;width:4.7px;height:1.5px;background:#0f4a44;"></div>
<div style="left:828.86px;top:250.3px;width:5px;height:1.5px;background:#0f4a44;"></div>
<div style="left:848.06px;top:250.3px;width:5px;height:1.5px;background:#0f4a44;"></div>
<div style="left:821.86px;top:254.5px;width:4.7px;height:1.5px;background:#0f4a44;"></div>
<div style="left:834.16px;top:254.5px;width:4.7px;height:1.5px;background:#0f4a44;"></div>
<div style="left:778.18px;top:237.7px;width:4px;height:1.5px;background:#0f4a44;"></div>
<div style="left:806.58px;top:237.7px;width:1.6px;height:1.5px;background:#0f4a44;"></div>
<div style="left:844.08px;top:237.7px;width:1.6px;height:1.5px;background:#0f4a44;"></div>
<div style="left:853.34px;top:237.7px;width:4px;height:1.5px;background:#0f4a44;"></div>
<div style="left:307.5px;top:261px;width:18.9px;height:12px;background:#5cffe8;"></div>
<div style="left:307.5px;top:261px;width:0.8px;height:12px;background:rgba(0,0,0,0.45);"></div>
<div style="left:458.3px;top:261px;width:18.4px;height:12px;background:#5cffe8;"></div>
<div style="left:458.3px;top:261px;width:0.8px;height:12px;background:rgba(0,0,0,0.45);"></div>
<div style="left:608px;top:261px;width:19px;height:12px;background:#5cffe8;"></div>
<div style="left:608px;top:261px;width:0.8px;height:12px;background:rgba(0,0,0,0.45);"></div>
<div style="left:326.4px;top:274.5px;width:150.3px;height:12px;background:#edffae;"></div>
<div style="left:326.4px;top:286.5px;width:150.3px;height:13.0px;background:#edffae;background-image:repeating-linear-gradient(90deg, rgba(0,0,0,0.08) 0px, rgba(0,0,0,0.08) 1px, transparent 1px, transparent 9.395px);background-position:9.14px 0;"></div>
<div style="left:326.4px;top:286.0px;width:150.3px;height:1px;background:rgba(0,0,0,0.35);"></div>
<div style="left:326.4px;top:274.5px;width:0.8px;height:25.0px;background:rgba(0,0,0,0.45);"></div>
<div style="left:326.4px;top:290.5px;width:150.3px;height:4.5px;background:#1e1e1e;"></div>
<div style="left:177px;top:301px;width:56px;height:12px;background:#f7f47c;"></div>
<div style="left:177px;top:313px;width:56px;height:24.5px;background:#f7f47c;background-image:repeating-linear-gradient(90deg, rgba(0,0,0,0.08) 0px, rgba(0,0,0,0.08) 1px, transparent 1px, transparent 9.395px);background-position:8.21px 0;"></div>
<div style="left:177px;top:312.5px;width:56px;height:1px;background:rgba(0,0,0,0.35);"></div>
<div style="left:177px;top:301px;width:0.8px;height:36.5px;background:rgba(0,0,0,0.45);"></div>
<div style="left:326.4px;top:301px;width:75.0px;height:12px;background:#f7f47c;"></div>
<div style="left:326.4px;top:313px;width:75.0px;height:24.5px;background:#f7f47c;background-image:repeating-linear-gradient(90deg, rgba(0,0,0,0.08) 0px, rgba(0,0,0,0.08) 1px, transparent 1px, transparent 9.395px);background-position:9.14px 0;"></div>
<div style="left:326.4px;top:312.5px;width:75.0px;height:1px;background:rgba(0,0,0,0.35);"></div>
<div style="left:326.4px;top:301px;width:0.8px;height:36.5px;background:rgba(0,0,0,0.45);"></div>
<div style="left:327px;top:319px;width:37px;height:1px;background:#6a6420;"></div>
<div style="left:327px;top:322px;width:37px;height:1px;background:#6a6420;"></div>
<div style="left:364.5px;top:320px;width:18px;height:1px;background:#6a6420;"></div>
<div style="left:382.5px;top:318px;width:19px;height:1px;background:#6a6420;"></div>
<div style="left:178.5px;top:322px;width:1.8px;height:1.3px;background:#6a6420;"></div>
<div style="left:205px;top:322px;width:1.8px;height:1.3px;background:#6a6420;"></div>
<div style="left:190.3px;top:328.6px;width:4.7px;height:1.3px;background:#6a6420;"></div>
<div style="left:209px;top:328.6px;width:4.4px;height:1.3px;background:#6a6420;"></div>
<div style="left:227.8px;top:328.6px;width:4.7px;height:1.3px;background:#6a6420;"></div>
<div style="left:183.3px;top:330.8px;width:4.7px;height:1.3px;background:#6a6420;"></div>
<div style="left:195.4px;top:330.8px;width:4.3px;height:1.3px;background:#6a6420;"></div>
<div style="left:220.8px;top:330.8px;width:4.2px;height:1.3px;background:#6a6420;"></div>
<div style="left:177px;top:347px;width:150px;height:3.5px;background:#ffa374;"></div>
<div style="left:7px;top:347px;width:170px;height:3.5px;background:#383838;"></div>
<div style="left:326.4px;top:343.5px;width:300.6px;height:7px;background:#ffa374;"></div>
<div style="left:326.4px;top:346.5px;width:300.6px;height:0.8px;background:rgba(0,0,0,0.3);"></div>
<div style="left:476.7px;top:340px;width:37.5px;height:3px;background:#ffa374;"></div>
<div style="left:552px;top:340px;width:75px;height:3px;background:#ffa374;"></div>
<div style="left:627px;top:340px;width:151px;height:3px;background:#ffa374;"></div>
<div style="left:778px;top:343.5px;width:79px;height:3px;background:#ffa374;"></div>
<div style="left:6px;top:352px;width:170.7px;height:12px;background:#ff94a6;"></div>
<div style="left:6px;top:364px;width:170.7px;height:25.5px;background:#ff94a6;background-image:repeating-linear-gradient(90deg, rgba(0,0,0,0.08) 0px, rgba(0,0,0,0.08) 1px, transparent 1px, transparent 9.395px);background-position:0.71px 0;"></div>
<div style="left:6px;top:363.5px;width:170.7px;height:1px;background:rgba(0,0,0,0.35);"></div>
<div style="left:6px;top:352px;width:0.8px;height:37.5px;background:rgba(0,0,0,0.45);"></div>
<div style="left:25.5px;top:352px;width:0.8px;height:37.5px;background:rgba(0,0,50,0.55);"></div>
<div style="left:6px;top:370px;width:170.7px;height:1.2px;background:rgba(60,0,20,0.6);"></div>
<div style="left:6px;top:383.2px;width:170.7px;height:1.2px;background:rgba(60,0,20,0.6);"></div>
<div style="left:326.4px;top:352px;width:150.3px;height:12px;background:#ff94a6;"></div>
<div style="left:326.4px;top:364px;width:150.3px;height:25.5px;background:#ff94a6;background-image:repeating-linear-gradient(90deg, rgba(0,0,0,0.08) 0px, rgba(0,0,0,0.08) 1px, transparent 1px, transparent 9.395px);background-position:9.14px 0;"></div>
<div style="left:326.4px;top:363.5px;width:150.3px;height:1px;background:rgba(0,0,0,0.35);"></div>
<div style="left:326.4px;top:352px;width:0.8px;height:37.5px;background:rgba(0,0,0,0.45);"></div>
<div style="left:326.4px;top:370px;width:150.3px;height:1.2px;background:rgba(60,0,20,0.6);"></div>
<div style="left:326.4px;top:383.2px;width:150.3px;height:1.2px;background:rgba(60,0,20,0.6);"></div>
<div style="left:627px;top:352px;width:151px;height:12px;background:#ff94a6;"></div>
<div style="left:627px;top:364px;width:151px;height:25.5px;background:#ff94a6;background-image:repeating-linear-gradient(90deg, rgba(0,0,0,0.08) 0px, rgba(0,0,0,0.08) 1px, transparent 1px, transparent 9.395px);background-position:9.17px 0;"></div>
<div style="left:627px;top:363.5px;width:151px;height:1px;background:rgba(0,0,0,0.35);"></div>
<div style="left:627px;top:352px;width:0.8px;height:37.5px;background:rgba(0,0,0,0.45);"></div>
<div style="left:627px;top:370px;width:151px;height:1.2px;background:rgba(60,0,20,0.6);"></div>
<div style="left:627px;top:383.2px;width:151px;height:1.2px;background:rgba(60,0,20,0.6);"></div>
<div style="left:9.0px;top:360px;width:1.3px;height:1.3px;background:#7a2e40;"></div>
<div style="left:11.2px;top:360px;width:1.3px;height:1.3px;background:#7a2e40;"></div>
<div style="left:13.4px;top:360px;width:1.3px;height:1.3px;background:#7a2e40;"></div>
<svg style="left:460.7px;top:364px" width="16" height="25"><path d="M0 0 Q9 8 15.5 25 L16 25 L16 0 Z" fill="rgba(120,40,60,0.16)"/></svg>
<svg style="left:762px;top:364px" width="16" height="25"><path d="M0 0 Q9 8 15.5 25 L16 25 L16 0 Z" fill="rgba(120,40,60,0.16)"/></svg>
<div style="left:26px;top:391px;width:150.7px;height:12px;background:#ff94a6;"></div>
<div style="left:26px;top:391px;width:0.8px;height:12px;background:rgba(0,0,0,0.45);"></div>
<div style="left:312.4px;top:391px;width:18.3px;height:12px;background:#ff94a6;"></div>
<div style="left:312.4px;top:391px;width:0.8px;height:12px;background:rgba(0,0,0,0.45);"></div>
<div style="left:401.3px;top:391px;width:75.4px;height:12px;background:#ff94a6;"></div>
<div style="left:401.3px;top:391px;width:0.8px;height:12px;background:rgba(0,0,0,0.45);"></div>
<div style="left:613.2px;top:391px;width:13.8px;height:12px;background:#ff94a6;"></div>
<div style="left:613.2px;top:391px;width:0.8px;height:12px;background:rgba(0,0,0,0.45);"></div>
<div style="left:702.2px;top:391px;width:75.8px;height:12px;background:#ff94a6;"></div>
<div style="left:702.2px;top:391px;width:0.8px;height:12px;background:rgba(0,0,0,0.45);"></div>
<svg style="left:401.3px;top:391px" width="75.4" height="12"><path d="M0 12 Q10 2 24 0 L0 0 Z M75.4 12 Q72.4 4 67.4 0 L75.4 0 Z" fill="rgba(120,40,60,0.16)"/></svg>
<svg style="left:702.2px;top:391px" width="75.8" height="12"><path d="M0 12 Q10 2 24 0 L0 0 Z M75.8 12 Q72.8 4 67.8 0 L75.8 0 Z" fill="rgba(120,40,60,0.16)"/></svg>
<div style="left:139px;top:404.5px;width:37.7px;height:11.5px;background:#d86ce4;"></div>
<div style="left:139px;top:404.5px;width:0.8px;height:11.5px;background:rgba(0,0,0,0.45);"></div>
<div style="left:401.3px;top:404.5px;width:75.4px;height:11.5px;background:#d86ce4;"></div>
<div style="left:401.3px;top:404.5px;width:0.8px;height:11.5px;background:rgba(0,0,0,0.45);"></div>
<div style="left:702.2px;top:404.5px;width:75.8px;height:11.5px;background:#d86ce4;"></div>
<div style="left:702.2px;top:404.5px;width:0.8px;height:11.5px;background:rgba(0,0,0,0.45);"></div>
<div style="left:26px;top:418px;width:150.7px;height:12px;background:#d86ce4;"></div>
<div style="left:26px;top:418px;width:0.8px;height:12px;background:rgba(0,0,0,0.45);"></div>
<div style="left:326.4px;top:418px;width:150.3px;height:12px;background:#d86ce4;"></div>
<div style="left:326.4px;top:418px;width:0.8px;height:12px;background:rgba(0,0,0,0.45);"></div>
<div style="left:443.8px;top:131px;width:1.5px;height:330px;background:#c8c8c8;"></div>
<div class="t" style="left:836px;top:449px;font-size:12px;color:#9a9a9a;line-height:1;-webkit-text-stroke:0.4px #9a9a9a;">1/2</div>
<div style="left:857px;top:130.5px;width:161px;height:331px;background:#1e1e1e;"></div>
<div style="left:932px;top:130.5px;width:86px;height:331px;background:#2f2f2f;"></div>
<div style="left:858px;top:131px;width:74px;height:38px;background:#92a7ff;"></div>
<svg style="left:860.1px;top:131.8px" width="11" height="11"><circle cx="5.5" cy="5.5" r="4.4" stroke="#2c3680" stroke-width="1.15" fill="none"/><path d="M2.9 4.1 H8.1 L5.5 7.5 Z" fill="#2c3680"/></svg>
<div class="t" style="left:875px;top:133.4px;font-size:7.6px;color:#2c3680;line-height:1;-webkit-text-stroke:0.4px #2c3680;">Drums</div>
<div style="left:858px;top:170px;width:74px;height:37.5px;background:#92a7ff;"></div>
<svg style="left:860.1px;top:170.8px" width="11" height="11"><circle cx="5.5" cy="5.5" r="4.4" stroke="#2c3680" stroke-width="1.15" fill="none"/><path d="M2.9 4.1 H8.1 L5.5 7.5 Z" fill="#2c3680"/></svg>
<div class="t" style="left:875px;top:172.4px;font-size:7.6px;color:#2c3680;line-height:1;-webkit-text-stroke:0.4px #2c3680;">Breaks</div>
<div style="left:858px;top:209px;width:74px;height:12px;background:#8bc5ff;"></div>
<svg style="left:860.1px;top:209.8px" width="11" height="11"><circle cx="5.5" cy="5.5" r="4.4" stroke="#24487a" stroke-width="1.15" fill="none"/><rect x="4" y="3.9" width="3" height="1.3" fill="#24487a"/><rect x="4" y="5.9" width="3" height="1.3" fill="#24487a"/></svg>
<div class="t" style="left:875px;top:211.4px;font-size:7.6px;color:#24487a;line-height:1;-webkit-text-stroke:0.4px #24487a;">Percussion</div>
<div style="left:858px;top:222px;width:74px;height:37.5px;background:#5cffe8;"></div>
<svg style="left:860.1px;top:222.8px" width="11" height="11"><circle cx="5.5" cy="5.5" r="4.4" stroke="#176a60" stroke-width="1.15" fill="none"/><path d="M2.9 4.1 H8.1 L5.5 7.5 Z" fill="#176a60"/></svg>
<div class="t" style="left:875px;top:224.4px;font-size:7.6px;color:#176a60;line-height:1;-webkit-text-stroke:0.4px #176a60;">Bass</div>
<div style="left:858px;top:261px;width:74px;height:12px;background:#5cffe8;"></div>
<svg style="left:860.1px;top:261.8px" width="11" height="11"><circle cx="5.5" cy="5.5" r="4.4" stroke="#176a60" stroke-width="1.15" fill="none"/><path d="M4.2 2.9 V8.1 L7.8 5.5 Z" fill="#176a60"/></svg>
<div class="t" style="left:875px;top:263.4px;font-size:7.6px;color:#176a60;line-height:1;-webkit-text-stroke:0.4px #176a60;">Bass Drop</div>
<div style="left:858px;top:274.5px;width:74px;height:25.0px;background:#edffae;"></div>
<svg style="left:860.1px;top:275.3px" width="11" height="11"><circle cx="5.5" cy="5.5" r="4.4" stroke="#5a6030" stroke-width="1.15" fill="none"/><path d="M2.9 4.1 H8.1 L5.5 7.5 Z" fill="#5a6030"/></svg>
<div class="t" style="left:875px;top:276.9px;font-size:7.6px;color:#5a6030;line-height:1;-webkit-text-stroke:0.4px #5a6030;">Synth Riser</div>
<div style="left:858px;top:301px;width:74px;height:36.5px;background:#f7f47c;"></div>
<svg style="left:860.1px;top:301.8px" width="11" height="11"><circle cx="5.5" cy="5.5" r="4.4" stroke="#5c5620" stroke-width="1.15" fill="none"/><path d="M2.9 4.1 H8.1 L5.5 7.5 Z" fill="#5c5620"/></svg>
<div class="t" style="left:875px;top:303.4px;font-size:7.6px;color:#5c5620;line-height:1;-webkit-text-stroke:0.4px #5c5620;">Keys</div>
<div style="left:858px;top:339px;width:74px;height:11.5px;background:#ffa374;"></div>
<svg style="left:860.1px;top:339.8px" width="11" height="11"><circle cx="5.5" cy="5.5" r="4.4" stroke="#6a3a20" stroke-width="1.15" fill="none"/><rect x="4" y="3.9" width="3" height="1.3" fill="#6a3a20"/><rect x="4" y="5.9" width="3" height="1.3" fill="#6a3a20"/></svg>
<div class="t" style="left:875px;top:341.4px;font-size:7.6px;color:#6a3a20;line-height:1;-webkit-text-stroke:0.4px #6a3a20;">Pads</div>
<div style="left:858px;top:352px;width:74px;height:37.5px;background:#ff94a6;"></div>
<svg style="left:860.1px;top:352.8px" width="11" height="11"><circle cx="5.5" cy="5.5" r="4.4" stroke="#7a2e40" stroke-width="1.15" fill="none"/><path d="M2.9 4.1 H8.1 L5.5 7.5 Z" fill="#7a2e40"/></svg>
<div class="t" style="left:875px;top:354.4px;font-size:7.6px;color:#7a2e40;line-height:1;-webkit-text-stroke:0.4px #7a2e40;">Ambience</div>
<div style="left:858px;top:391px;width:74px;height:12px;background:#ff94a6;"></div>
<svg style="left:860.1px;top:391.8px" width="11" height="11"><circle cx="5.5" cy="5.5" r="4.4" stroke="#7a2e40" stroke-width="1.15" fill="none"/><path d="M4.2 2.9 V8.1 L7.8 5.5 Z" fill="#7a2e40"/></svg>
<div class="t" style="left:875px;top:393.4px;font-size:7.6px;color:#7a2e40;line-height:1;-webkit-text-stroke:0.4px #7a2e40;">Drone</div>
<div style="left:858px;top:404.5px;width:74px;height:11.5px;background:#d86ce4;"></div>
<svg style="left:860.1px;top:405.3px" width="11" height="11"><circle cx="5.5" cy="5.5" r="4.4" stroke="#4e1a60" stroke-width="1.15" fill="none"/><path d="M4.2 2.9 V8.1 L7.8 5.5 Z" fill="#4e1a60"/></svg>
<div class="t" style="left:875px;top:406.9px;font-size:7.6px;color:#4e1a60;line-height:1;-webkit-text-stroke:0.4px #4e1a60;">FX</div>
<div style="left:858px;top:418px;width:74px;height:12px;background:#d86ce4;"></div>
<svg style="left:860.1px;top:418.8px" width="11" height="11"><circle cx="5.5" cy="5.5" r="4.4" stroke="#4e1a60" stroke-width="1.15" fill="none"/><path d="M4.2 2.9 V8.1 L7.8 5.5 Z" fill="#4e1a60"/></svg>
<div class="t" style="left:875px;top:420.4px;font-size:7.6px;color:#4e1a60;line-height:1;-webkit-text-stroke:0.4px #4e1a60;">Zap</div>
<div style="left:858px;top:448px;width:74px;height:12.5px;background:#ffffff;"></div>
<svg style="left:860.1px;top:449.8px" width="11" height="11"><circle cx="5.5" cy="5.5" r="4.4" stroke="#555" stroke-width="1.15" fill="none"/><path d="M4.2 2.9 V8.1 L7.8 5.5 Z" fill="#555"/></svg>
<div class="t" style="left:876px;top:451.2px;font-size:7.6px;color:#444;line-height:1;-webkit-text-stroke:0.3px #444;">Main</div>
<div style="left:932px;top:169px;width:86px;height:1.5px;background:#222;"></div>
<div style="left:935px;top:134px;width:31.5px;height:8px;background:#ffac5c;"></div>
<div class="t" style="left:935px;top:134px;font-size:8px;color:#3a2410;width:31.5px;height:8px;line-height:8px;text-align:center;font-weight:bold;">1</div>
<div style="left:970px;top:134px;width:14.5px;height:8px;background:#1f1f1f;"></div>
<div class="t" style="left:970px;top:134px;font-size:8px;color:#bbb;width:14.5px;height:8px;line-height:8px;text-align:center;">S</div>
<div style="left:988px;top:134px;width:15px;height:8px;background:#1f1f1f;"></div>
<svg style="left:992px;top:134.5px" width="7" height="7"><circle cx="3.5" cy="3.5" r="2.8" fill="#c8c8c8"/><path d="M2.3 5 L4.7 2" stroke="#1f1f1f" stroke-width="1"/></svg>
<div style="left:935px;top:146px;width:32px;height:8.5px;background:#1f1f1f;"></div>
<div style="left:935px;top:146px;width:26px;height:8.5px;background:#1a8a9a;"></div>
<div class="t" style="left:935px;top:146px;font-size:8px;color:#cfe8ee;width:32px;height:8.5px;line-height:8.5px;text-align:center;">-1.0</div>
<div style="left:970px;top:146px;width:33px;height:8.5px;background:#1f1f1f;"></div>
<div class="t" style="left:970px;top:146px;font-size:8px;color:#bbb;width:33px;height:8.5px;line-height:8.5px;text-align:center;">C</div>
<div style="left:935px;top:157.5px;width:21px;height:9px;background:#1f1f1f;"></div>
<div style="left:958px;top:157.5px;width:21px;height:9px;background:#1f1f1f;"></div>
<div class="t" style="left:935px;top:157.5px;font-size:8px;color:#c0c0c0;width:21px;height:9px;line-height:9px;text-align:center;">-52.8</div>
<div class="t" style="left:958px;top:157.5px;font-size:8px;color:#b0b0b0;width:21px;height:9px;line-height:9px;text-align:center;">−<span style="font-size:10px">∞</span></div>
<div style="left:936px;top:158.3px;width:2.4px;height:2.4px;background:#e04848;border-radius:50%"></div>
<div style="left:959px;top:158.3px;width:2.4px;height:2.4px;background:#e04848;border-radius:50%"></div>
<div style="left:1004.5px;top:133.5px;width:7px;height:35px;background:#161616;"></div>
<div style="left:1005px;top:150.5px;width:2.5px;height:17.5px;background:#27ea50;"></div>
<div style="left:1008.5px;top:150.5px;width:2.5px;height:17.5px;background:#27ea50;"></div>
<div style="left:1005.1px;top:140px;width:5.8px;height:0.9px;background:#9a9a9a;"></div>
<div style="left:932px;top:207.5px;width:86px;height:1.5px;background:#222;"></div>
<div style="left:935px;top:173px;width:31.5px;height:8px;background:#ffac5c;"></div>
<div class="t" style="left:935px;top:173px;font-size:8px;color:#3a2410;width:31.5px;height:8px;line-height:8px;text-align:center;font-weight:bold;">2</div>
<div style="left:970px;top:173px;width:14.5px;height:8px;background:#1f1f1f;"></div>
<div class="t" style="left:970px;top:173px;font-size:8px;color:#bbb;width:14.5px;height:8px;line-height:8px;text-align:center;">S</div>
<div style="left:988px;top:173px;width:15px;height:8px;background:#1f1f1f;"></div>
<svg style="left:992px;top:173.5px" width="7" height="7"><circle cx="3.5" cy="3.5" r="2.6" fill="#6c6c6c"/></svg>
<div style="left:935px;top:185px;width:32px;height:8.5px;background:#1f1f1f;"></div>
<div style="left:935px;top:185px;width:22px;height:8.5px;background:#1a8a9a;"></div>
<div class="t" style="left:935px;top:185px;font-size:8px;color:#cfe8ee;width:32px;height:8.5px;line-height:8.5px;text-align:center;">-9.4</div>
<div style="left:970px;top:185px;width:33px;height:8.5px;background:#1f1f1f;"></div>
<div class="t" style="left:970px;top:185px;font-size:8px;color:#bbb;width:33px;height:8.5px;line-height:8.5px;text-align:center;">C</div>
<div style="left:935px;top:196.5px;width:21px;height:9px;background:#1f1f1f;"></div>
<div style="left:958px;top:196.5px;width:21px;height:9px;background:#1f1f1f;"></div>
<div class="t" style="left:935px;top:196.5px;font-size:8px;color:#b0b0b0;width:21px;height:9px;line-height:9px;text-align:center;">−<span style="font-size:10px">∞</span></div>
<div class="t" style="left:958px;top:196.5px;font-size:8px;color:#b0b0b0;width:21px;height:9px;line-height:9px;text-align:center;">−<span style="font-size:10px">∞</span></div>
<div style="left:936px;top:197.3px;width:2.4px;height:2.4px;background:#e04848;border-radius:50%"></div>
<div style="left:1004.5px;top:172.5px;width:7px;height:34.5px;background:#161616;"></div>
<div style="left:1005px;top:180.3px;width:2.5px;height:5px;background:#a0b830;"></div>
<div style="left:1008.5px;top:180.3px;width:2.5px;height:5px;background:#a0b830;"></div>
<div style="left:1005px;top:185.3px;width:2.5px;height:21.2px;background:#27ea50;"></div>
<div style="left:1008.5px;top:185.3px;width:2.5px;height:21.2px;background:#27ea50;"></div>
<div style="left:932px;top:221px;width:86px;height:1.5px;background:#222;"></div>
<div style="left:935px;top:212px;width:31.5px;height:8px;background:#ffac5c;"></div>
<div class="t" style="left:935px;top:212px;font-size:8px;color:#3a2410;width:31.5px;height:8px;line-height:8px;text-align:center;font-weight:bold;">3</div>
<div style="left:970px;top:212px;width:14.5px;height:8px;background:#1f1f1f;"></div>
<div class="t" style="left:970px;top:212px;font-size:8px;color:#bbb;width:14.5px;height:8px;line-height:8px;text-align:center;">S</div>
<div style="left:1004.5px;top:211.5px;width:7px;height:9px;background:#161616;"></div>
<div style="left:1005px;top:216px;width:2.5px;height:4px;background:#27ea50;"></div>
<div style="left:1008.5px;top:216px;width:2.5px;height:4px;background:#27ea50;"></div>
<div style="left:932px;top:222px;width:86px;height:37.5px;background:#3a3a3a;"></div>
<div style="left:932px;top:259.5px;width:86px;height:1.5px;background:#222;"></div>
<div style="left:935px;top:225px;width:31.5px;height:8px;background:#ffac5c;"></div>
<div class="t" style="left:935px;top:225px;font-size:8px;color:#3a2410;width:31.5px;height:8px;line-height:8px;text-align:center;font-weight:bold;">8</div>
<div style="left:970px;top:225px;width:14.5px;height:8px;background:#1f1f1f;"></div>
<div class="t" style="left:970px;top:225px;font-size:8px;color:#bbb;width:14.5px;height:8px;line-height:8px;text-align:center;">S</div>
<div style="left:988px;top:225px;width:15px;height:8px;background:#1f1f1f;"></div>
<svg style="left:992px;top:225.5px" width="7" height="7"><circle cx="3.5" cy="3.5" r="2.8" fill="#c8c8c8"/><path d="M2.3 5 L4.7 2" stroke="#1f1f1f" stroke-width="1"/></svg>
<div style="left:935px;top:237px;width:32px;height:8.5px;background:#1f1f1f;"></div>
<div style="left:935px;top:237px;width:22px;height:8.5px;background:#1a8a9a;"></div>
<div class="t" style="left:935px;top:237px;font-size:8px;color:#cfe8ee;width:32px;height:8.5px;line-height:8.5px;text-align:center;">-7.7</div>
<div style="left:970px;top:237px;width:33px;height:8.5px;background:#1f1f1f;"></div>
<div class="t" style="left:970px;top:237px;font-size:8px;color:#bbb;width:33px;height:8.5px;line-height:8.5px;text-align:center;">C</div>
<div style="left:935px;top:248.5px;width:21px;height:9px;background:#1f1f1f;"></div>
<div style="left:958px;top:248.5px;width:21px;height:9px;background:#1f1f1f;"></div>
<div class="t" style="left:935px;top:248.5px;font-size:8px;color:#b0b0b0;width:21px;height:9px;line-height:9px;text-align:center;">−<span style="font-size:10px">∞</span></div>
<div class="t" style="left:958px;top:248.5px;font-size:8px;color:#b0b0b0;width:21px;height:9px;line-height:9px;text-align:center;">−<span style="font-size:10px">∞</span></div>
<div style="left:1004.5px;top:224.5px;width:7px;height:34.5px;background:#161616;"></div>
<div style="left:1005px;top:237px;width:2.5px;height:21px;background:#27ea50;"></div>
<div style="left:1008.5px;top:237px;width:2.5px;height:21px;background:#27ea50;"></div>
<div style="left:1005.1px;top:236px;width:5.8px;height:0.9px;background:#9a9a9a;"></div>
<div style="left:932px;top:273px;width:86px;height:1.5px;background:#222;"></div>
<div style="left:935px;top:264px;width:31.5px;height:8px;background:#ffac5c;"></div>
<div class="t" style="left:935px;top:264px;font-size:8px;color:#3a2410;width:31.5px;height:8px;line-height:8px;text-align:center;font-weight:bold;">9</div>
<div style="left:970px;top:264px;width:14.5px;height:8px;background:#1f1f1f;"></div>
<div class="t" style="left:970px;top:264px;font-size:8px;color:#bbb;width:14.5px;height:8px;line-height:8px;text-align:center;">S</div>
<div style="left:988px;top:264px;width:15px;height:8px;background:#1f1f1f;"></div>
<svg style="left:992px;top:264.5px" width="7" height="7"><circle cx="3.5" cy="3.5" r="2.8" fill="#c8c8c8"/><path d="M2.3 5 L4.7 2" stroke="#1f1f1f" stroke-width="1"/></svg>
<div style="left:1004.5px;top:263.5px;width:7px;height:9px;background:#161616;"></div>
<div style="left:932px;top:299.5px;width:86px;height:1.5px;background:#222;"></div>
<div style="left:935px;top:277.5px;width:31.5px;height:8px;background:#ffac5c;"></div>
<div class="t" style="left:935px;top:277.5px;font-size:8px;color:#3a2410;width:31.5px;height:8px;line-height:8px;text-align:center;font-weight:bold;">10</div>
<div style="left:970px;top:277.5px;width:14.5px;height:8px;background:#1f1f1f;"></div>
<div class="t" style="left:970px;top:277.5px;font-size:8px;color:#bbb;width:14.5px;height:8px;line-height:8px;text-align:center;">S</div>
<div style="left:988px;top:277.5px;width:15px;height:8px;background:#1f1f1f;"></div>
<svg style="left:992px;top:278.0px" width="7" height="7"><circle cx="3.5" cy="3.5" r="2.8" fill="#c8c8c8"/><path d="M2.3 5 L4.7 2" stroke="#1f1f1f" stroke-width="1"/></svg>
<div style="left:935px;top:289.5px;width:32px;height:8.5px;background:#1f1f1f;"></div>
<div style="left:935px;top:289.5px;width:11px;height:8.5px;background:#1a8a9a;"></div>
<div class="t" style="left:935px;top:289.5px;font-size:8px;color:#cfe8ee;width:32px;height:8.5px;line-height:8.5px;text-align:center;">-18.0</div>
<div style="left:970px;top:289.5px;width:33px;height:8.5px;background:#1f1f1f;"></div>
<div class="t" style="left:970px;top:289.5px;font-size:8px;color:#bbb;width:33px;height:8.5px;line-height:8.5px;text-align:center;">C</div>
<div style="left:1004.5px;top:277.0px;width:7px;height:22.0px;background:#161616;"></div>
<div style="left:1005px;top:291px;width:2.5px;height:7.5px;background:#27ea50;"></div>
<div style="left:1008.5px;top:291px;width:2.5px;height:7.5px;background:#27ea50;"></div>
<div style="left:932px;top:337.5px;width:86px;height:1.5px;background:#222;"></div>
<div style="left:935px;top:304px;width:31.5px;height:8px;background:#ffac5c;"></div>
<div class="t" style="left:935px;top:304px;font-size:8px;color:#3a2410;width:31.5px;height:8px;line-height:8px;text-align:center;font-weight:bold;">11</div>
<div style="left:970px;top:304px;width:14.5px;height:8px;background:#1f1f1f;"></div>
<div class="t" style="left:970px;top:304px;font-size:8px;color:#bbb;width:14.5px;height:8px;line-height:8px;text-align:center;">S</div>
<div style="left:988px;top:304px;width:15px;height:8px;background:#1f1f1f;"></div>
<svg style="left:992px;top:304.5px" width="7" height="7"><circle cx="3.5" cy="3.5" r="2.8" fill="#c8c8c8"/><path d="M2.3 5 L4.7 2" stroke="#1f1f1f" stroke-width="1"/></svg>
<div style="left:935px;top:316px;width:32px;height:8.5px;background:#1f1f1f;"></div>
<div style="left:935px;top:316px;width:22.5px;height:8.5px;background:#1a8a9a;"></div>
<div class="t" style="left:935px;top:316px;font-size:8px;color:#cfe8ee;width:32px;height:8.5px;line-height:8.5px;text-align:center;">-6.6</div>
<div style="left:970px;top:316px;width:33px;height:8.5px;background:#1f1f1f;"></div>
<div class="t" style="left:970px;top:316px;font-size:8px;color:#bbb;width:33px;height:8.5px;line-height:8.5px;text-align:center;">C</div>
<div style="left:935px;top:327.5px;width:21px;height:9px;background:#1f1f1f;"></div>
<div style="left:958px;top:327.5px;width:21px;height:9px;background:#1f1f1f;"></div>
<div class="t" style="left:935px;top:327.5px;font-size:8px;color:#b0b0b0;width:21px;height:9px;line-height:9px;text-align:center;">−<span style="font-size:10px">∞</span></div>
<div class="t" style="left:958px;top:327.5px;font-size:8px;color:#b0b0b0;width:21px;height:9px;line-height:9px;text-align:center;">−<span style="font-size:10px">∞</span></div>
<div style="left:1004.5px;top:303.5px;width:7px;height:33.5px;background:#161616;"></div>
<div style="left:1005px;top:336px;width:2.5px;height:1px;background:#27ea50;"></div>
<div style="left:1008.5px;top:336px;width:2.5px;height:1px;background:#27ea50;"></div>
<div style="left:1005.1px;top:312px;width:5.8px;height:0.9px;background:#9a9a9a;"></div>
<div style="left:932px;top:350.5px;width:86px;height:1.5px;background:#222;"></div>
<div style="left:935px;top:342px;width:31.5px;height:8px;background:#ffac5c;"></div>
<div class="t" style="left:935px;top:342px;font-size:8px;color:#3a2410;width:31.5px;height:8px;line-height:8px;text-align:center;font-weight:bold;">12</div>
<div style="left:970px;top:342px;width:14.5px;height:8px;background:#1f1f1f;"></div>
<div class="t" style="left:970px;top:342px;font-size:8px;color:#bbb;width:14.5px;height:8px;line-height:8px;text-align:center;">S</div>
<div style="left:1004.5px;top:341.5px;width:7px;height:8.5px;background:#161616;"></div>
<div style="left:1005px;top:346px;width:2.5px;height:4px;background:#27ea50;"></div>
<div style="left:1008.5px;top:346px;width:2.5px;height:4px;background:#27ea50;"></div>
<div style="left:932px;top:389.5px;width:86px;height:1.5px;background:#222;"></div>
<div style="left:935px;top:355px;width:31.5px;height:8px;background:#ffac5c;"></div>
<div class="t" style="left:935px;top:355px;font-size:8px;color:#3a2410;width:31.5px;height:8px;line-height:8px;text-align:center;font-weight:bold;">16</div>
<div style="left:970px;top:355px;width:14.5px;height:8px;background:#1f1f1f;"></div>
<div class="t" style="left:970px;top:355px;font-size:8px;color:#bbb;width:14.5px;height:8px;line-height:8px;text-align:center;">S</div>
<div style="left:988px;top:355px;width:15px;height:8px;background:#1f1f1f;"></div>
<svg style="left:992px;top:355.5px" width="7" height="7"><circle cx="3.5" cy="3.5" r="2.6" fill="#6c6c6c"/></svg>
<div style="left:935px;top:367px;width:32px;height:8.5px;background:#1f1f1f;"></div>
<div style="left:935px;top:367px;width:18.5px;height:8.5px;background:#1a8a9a;"></div>
<div class="t" style="left:935px;top:367px;font-size:8px;color:#cfe8ee;width:32px;height:8.5px;line-height:8.5px;text-align:center;">-8.3</div>
<div style="left:970px;top:367px;width:33px;height:8.5px;background:#1f1f1f;"></div>
<div class="t" style="left:970px;top:367px;font-size:8px;color:#bbb;width:33px;height:8.5px;line-height:8.5px;text-align:center;">C</div>
<div style="left:935px;top:378.5px;width:21px;height:9px;background:#1f1f1f;"></div>
<div style="left:958px;top:378.5px;width:21px;height:9px;background:#1f1f1f;"></div>
<div class="t" style="left:935px;top:378.5px;font-size:8px;color:#b0b0b0;width:21px;height:9px;line-height:9px;text-align:center;">−<span style="font-size:10px">∞</span></div>
<div class="t" style="left:958px;top:378.5px;font-size:8px;color:#b0b0b0;width:21px;height:9px;line-height:9px;text-align:center;">−<span style="font-size:10px">∞</span></div>
<div style="left:1004.5px;top:354.5px;width:7px;height:34.5px;background:#161616;"></div>
<div style="left:1005px;top:373px;width:2.5px;height:16px;background:#27ea50;"></div>
<div style="left:1008.5px;top:373px;width:2.5px;height:16px;background:#27ea50;"></div>
<div style="left:1005.1px;top:372px;width:5.8px;height:0.9px;background:#9a9a9a;"></div>
<div style="left:932px;top:403px;width:86px;height:1.5px;background:#222;"></div>
<div style="left:935px;top:394px;width:31.5px;height:8px;background:#ffac5c;"></div>
<div class="t" style="left:935px;top:394px;font-size:8px;color:#3a2410;width:31.5px;height:8px;line-height:8px;text-align:center;font-weight:bold;">17</div>
<div style="left:970px;top:394px;width:14.5px;height:8px;background:#1f1f1f;"></div>
<div class="t" style="left:970px;top:394px;font-size:8px;color:#bbb;width:14.5px;height:8px;line-height:8px;text-align:center;">S</div>
<div style="left:988px;top:394px;width:15px;height:8px;background:#1f1f1f;"></div>
<svg style="left:992px;top:394.5px" width="7" height="7"><circle cx="3.5" cy="3.5" r="2.6" fill="#6c6c6c"/></svg>
<div style="left:1004.5px;top:393.5px;width:7px;height:9px;background:#161616;"></div>
<div style="left:1005px;top:397px;width:2.5px;height:6px;background:#27ea50;"></div>
<div style="left:1008.5px;top:397px;width:2.5px;height:6px;background:#27ea50;"></div>
<div style="left:932px;top:416px;width:86px;height:1.5px;background:#222;"></div>
<div style="left:935px;top:407.5px;width:31.5px;height:8px;background:#ffac5c;"></div>
<div class="t" style="left:935px;top:407.5px;font-size:8px;color:#3a2410;width:31.5px;height:8px;line-height:8px;text-align:center;font-weight:bold;">18</div>
<div style="left:970px;top:407.5px;width:14.5px;height:8px;background:#1f1f1f;"></div>
<div class="t" style="left:970px;top:407.5px;font-size:8px;color:#bbb;width:14.5px;height:8px;line-height:8px;text-align:center;">S</div>
<div style="left:988px;top:407.5px;width:15px;height:8px;background:#1f1f1f;"></div>
<svg style="left:992px;top:408.0px" width="7" height="7"><circle cx="3.5" cy="3.5" r="2.6" fill="#6c6c6c"/></svg>
<div style="left:1004.5px;top:407.0px;width:7px;height:8.5px;background:#161616;"></div>
<div style="left:1005px;top:409px;width:2.5px;height:7px;background:#27ea50;"></div>
<div style="left:1008.5px;top:409px;width:2.5px;height:7px;background:#27ea50;"></div>
<div style="left:932px;top:430px;width:86px;height:1.5px;background:#222;"></div>
<div style="left:935px;top:421px;width:31.5px;height:8px;background:#ffac5c;"></div>
<div class="t" style="left:935px;top:421px;font-size:8px;color:#3a2410;width:31.5px;height:8px;line-height:8px;text-align:center;font-weight:bold;">19</div>
<div style="left:970px;top:421px;width:14.5px;height:8px;background:#1f1f1f;"></div>
<div class="t" style="left:970px;top:421px;font-size:8px;color:#bbb;width:14.5px;height:8px;line-height:8px;text-align:center;">S</div>
<div style="left:988px;top:421px;width:15px;height:8px;background:#1f1f1f;"></div>
<svg style="left:992px;top:421.5px" width="7" height="7"><circle cx="3.5" cy="3.5" r="2.8" fill="#c8c8c8"/><path d="M2.3 5 L4.7 2" stroke="#1f1f1f" stroke-width="1"/></svg>
<div style="left:1004.5px;top:420.5px;width:7px;height:9px;background:#161616;"></div>
<div style="left:1005px;top:423px;width:2.5px;height:7px;background:#27ea50;"></div>
<div style="left:1008.5px;top:423px;width:2.5px;height:7px;background:#27ea50;"></div>
<div style="left:932px;top:448px;width:86px;height:12.5px;background:#2f2f2f;"></div>
<div style="left:935px;top:450px;width:32px;height:9px;background:#1f1f1f;"></div>
<div style="left:935px;top:450px;width:26.5px;height:9px;background:#1a8a9a;"></div>
<div class="t" style="left:935px;top:450px;font-size:8px;color:#cfe8ee;width:32px;height:9px;line-height:9px;text-align:center;">0</div>
<div style="left:970.5px;top:450px;width:32px;height:9px;background:#1f1f1f;"></div>
<div style="left:970.5px;top:450px;width:26.5px;height:9px;background:#4a74d8;"></div>
<div class="t" style="left:970.5px;top:450px;font-size:8px;color:#dde;width:32px;height:9px;line-height:9px;text-align:center;">0</div>
<div style="left:1004.5px;top:450px;width:7px;height:10px;background:#161616;"></div>
<div style="left:1005px;top:451px;width:2.5px;height:8px;background:#27ea50;"></div>
<div style="left:1008.5px;top:451px;width:2.5px;height:8px;background:#27ea50;"></div>
<div style="left:857px;top:430.5px;width:161px;height:17px;background:#323232;"></div>
<div style="left:857px;top:445.5px;width:161px;height:2.5px;background:#222;"></div>
<div style="left:857px;top:430.5px;width:1.2px;height:17px;background:#222;"></div>
<div style="left:7px;top:460.5px;width:850px;height:16px;background:#2c2c2c;"></div>
<div style="left:857px;top:460.5px;width:161px;height:16px;background:#262626;"></div>
<div style="left:13.2px;top:461.5px;width:0.8px;height:5px;background:#888;"></div>
<div class="t" style="left:14.7px;top:463.5px;font-size:8px;color:#999;line-height:1;">0:10</div>
<div style="left:26.88px;top:461.5px;width:0.8px;height:1.5px;background:#666;"></div>
<div style="left:40.56px;top:461.5px;width:0.8px;height:1.5px;background:#666;"></div>
<div style="left:54.24px;top:461.5px;width:0.8px;height:1.5px;background:#666;"></div>
<div style="left:67.92px;top:461.5px;width:0.8px;height:1.5px;background:#666;"></div>
<div style="left:81.62px;top:461.5px;width:0.8px;height:5px;background:#888;"></div>
<div class="t" style="left:83.12px;top:463.5px;font-size:8px;color:#999;line-height:1;">0:15</div>
<div style="left:95.3px;top:461.5px;width:0.8px;height:1.5px;background:#666;"></div>
<div style="left:108.98px;top:461.5px;width:0.8px;height:1.5px;background:#666;"></div>
<div style="left:122.66px;top:461.5px;width:0.8px;height:1.5px;background:#666;"></div>
<div style="left:136.34px;top:461.5px;width:0.8px;height:1.5px;background:#666;"></div>
<div style="left:150.04px;top:461.5px;width:0.8px;height:5px;background:#888;"></div>
<div class="t" style="left:151.54px;top:463.5px;font-size:8px;color:#999;line-height:1;">0:20</div>
<div style="left:163.72px;top:461.5px;width:0.8px;height:1.5px;background:#666;"></div>
<div style="left:177.4px;top:461.5px;width:0.8px;height:1.5px;background:#666;"></div>
<div style="left:191.08px;top:461.5px;width:0.8px;height:1.5px;background:#666;"></div>
<div style="left:204.76px;top:461.5px;width:0.8px;height:1.5px;background:#666;"></div>
<div style="left:218.46px;top:461.5px;width:0.8px;height:5px;background:#888;"></div>
<div class="t" style="left:219.96px;top:463.5px;font-size:8px;color:#999;line-height:1;">0:25</div>
<div style="left:232.14px;top:461.5px;width:0.8px;height:1.5px;background:#666;"></div>
<div style="left:245.82px;top:461.5px;width:0.8px;height:1.5px;background:#666;"></div>
<div style="left:259.5px;top:461.5px;width:0.8px;height:1.5px;background:#666;"></div>
<div style="left:273.18px;top:461.5px;width:0.8px;height:1.5px;background:#666;"></div>
<div style="left:286.88px;top:461.5px;width:0.8px;height:5px;background:#888;"></div>
<div class="t" style="left:288.38px;top:463.5px;font-size:8px;color:#999;line-height:1;">0:30</div>
<div style="left:300.56px;top:461.5px;width:0.8px;height:1.5px;background:#666;"></div>
<div style="left:314.24px;top:461.5px;width:0.8px;height:1.5px;background:#666;"></div>
<div style="left:327.92px;top:461.5px;width:0.8px;height:1.5px;background:#666;"></div>
<div style="left:341.6px;top:461.5px;width:0.8px;height:1.5px;background:#666;"></div>
<div style="left:355.3px;top:461.5px;width:0.8px;height:5px;background:#888;"></div>
<div class="t" style="left:356.8px;top:463.5px;font-size:8px;color:#999;line-height:1;">0:35</div>
<div style="left:368.98px;top:461.5px;width:0.8px;height:1.5px;background:#666;"></div>
<div style="left:382.66px;top:461.5px;width:0.8px;height:1.5px;background:#666;"></div>
<div style="left:396.34px;top:461.5px;width:0.8px;height:1.5px;background:#666;"></div>
<div style="left:410.02px;top:461.5px;width:0.8px;height:1.5px;background:#666;"></div>
<div style="left:423.72px;top:461.5px;width:0.8px;height:5px;background:#888;"></div>
<div class="t" style="left:425.22px;top:463.5px;font-size:8px;color:#999;line-height:1;">0:40</div>
<div style="left:437.4px;top:461.5px;width:0.8px;height:1.5px;background:#666;"></div>
<div style="left:451.08px;top:461.5px;width:0.8px;height:1.5px;background:#666;"></div>
<div style="left:464.76px;top:461.5px;width:0.8px;height:1.5px;background:#666;"></div>
<div style="left:478.44px;top:461.5px;width:0.8px;height:1.5px;background:#666;"></div>
<div style="left:492.14px;top:461.5px;width:0.8px;height:5px;background:#888;"></div>
<div class="t" style="left:493.64px;top:463.5px;font-size:8px;color:#999;line-height:1;">0:45</div>
<div style="left:505.82px;top:461.5px;width:0.8px;height:1.5px;background:#666;"></div>
<div style="left:519.5px;top:461.5px;width:0.8px;height:1.5px;background:#666;"></div>
<div style="left:533.18px;top:461.5px;width:0.8px;height:1.5px;background:#666;"></div>
<div style="left:546.86px;top:461.5px;width:0.8px;height:1.5px;background:#666;"></div>
<div style="left:560.56px;top:461.5px;width:0.8px;height:5px;background:#888;"></div>
<div class="t" style="left:562.06px;top:463.5px;font-size:8px;color:#999;line-height:1;">0:50</div>
<div style="left:574.24px;top:461.5px;width:0.8px;height:1.5px;background:#666;"></div>
<div style="left:587.92px;top:461.5px;width:0.8px;height:1.5px;background:#666;"></div>
<div style="left:601.6px;top:461.5px;width:0.8px;height:1.5px;background:#666;"></div>
<div style="left:615.28px;top:461.5px;width:0.8px;height:1.5px;background:#666;"></div>
<div style="left:628.98px;top:461.5px;width:0.8px;height:5px;background:#888;"></div>
<div class="t" style="left:630.48px;top:463.5px;font-size:8px;color:#999;line-height:1;">0:55</div>
<div style="left:642.66px;top:461.5px;width:0.8px;height:1.5px;background:#666;"></div>
<div style="left:656.34px;top:461.5px;width:0.8px;height:1.5px;background:#666;"></div>
<div style="left:670.02px;top:461.5px;width:0.8px;height:1.5px;background:#666;"></div>
<div style="left:683.7px;top:461.5px;width:0.8px;height:1.5px;background:#666;"></div>
<div style="left:697.4px;top:461.5px;width:0.8px;height:5px;background:#888;"></div>
<div class="t" style="left:698.9px;top:463.5px;font-size:8px;color:#999;line-height:1;">1:00</div>
<div style="left:711.08px;top:461.5px;width:0.8px;height:1.5px;background:#666;"></div>
<div style="left:724.76px;top:461.5px;width:0.8px;height:1.5px;background:#666;"></div>
<div style="left:738.44px;top:461.5px;width:0.8px;height:1.5px;background:#666;"></div>
<div style="left:752.12px;top:461.5px;width:0.8px;height:1.5px;background:#666;"></div>
<div style="left:765.82px;top:461.5px;width:0.8px;height:5px;background:#888;"></div>
<div class="t" style="left:767.32px;top:463.5px;font-size:8px;color:#999;line-height:1;">1:05</div>
<div style="left:779.5px;top:461.5px;width:0.8px;height:1.5px;background:#666;"></div>
<div style="left:793.18px;top:461.5px;width:0.8px;height:1.5px;background:#666;"></div>
<div style="left:806.86px;top:461.5px;width:0.8px;height:1.5px;background:#666;"></div>
<div style="left:820.54px;top:461.5px;width:0.8px;height:1.5px;background:#666;"></div>
<div style="left:834.24px;top:461.5px;width:0.8px;height:5px;background:#888;"></div>
<div class="t" style="left:835.74px;top:463.5px;font-size:8px;color:#999;line-height:1;">1:10</div>
<div style="left:847.92px;top:461.5px;width:0.8px;height:1.5px;background:#666;"></div>
<div style="left:861.6px;top:461.5px;width:0.8px;height:1.5px;background:#666;"></div>
<div style="left:875.28px;top:461.5px;width:0.8px;height:1.5px;background:#666;"></div>
<div style="left:888.96px;top:461.5px;width:0.8px;height:1.5px;background:#666;"></div>
<svg style="left:323px;top:460px" width="8" height="5"><path d="M0 4 H7 L3.5 0 Z" fill="#3ad0c0"/></svg>
<div style="left:858.5px;top:465px;width:9.5px;height:8px;background:#1f1f1f;"></div>
<svg style="left:859px;top:465.5px" width="9" height="7"><path d="M1 2.5 H3 L5.5 0.5 V6.5 L3 4.5 H1 Z" fill="#999"/></svg>
<div style="left:872px;top:465px;width:24px;height:8px;background:#1f1f1f;"></div>
<div class="t" style="left:872px;top:465px;font-size:8px;color:#aaa;width:24px;height:8px;line-height:8px;text-align:center;">1.00x</div>
<div style="left:907px;top:465px;width:11px;height:8px;background:#1f1f1f;"></div>
<div class="t" style="left:907px;top:465px;font-size:8px;color:#aaa;width:11px;height:8px;line-height:8px;text-align:center;">H</div>
<div style="left:920px;top:465px;width:11px;height:8px;background:#1f1f1f;"></div>
<div class="t" style="left:920px;top:465px;font-size:8px;color:#aaa;width:11px;height:8px;line-height:8px;text-align:center;">W</div>
<div style="left:0px;top:476.5px;width:1024px;height:220.5px;background:#2a2a2a;"></div>
<div style="left:5.6px;top:478.5px;width:66.6px;height:194px;background:#363636;"></div>
<div style="left:5.6px;top:478.5px;width:66.6px;height:194px;overflow:hidden">

<div style="position:absolute;left:0.0px;top:0.0px;width:66.6px;height:12.5px;background:#92a7ff;box-shadow:inset 0 0 0 0.8px rgba(0,0,30,0.35);"></div>
<div class="t" style="position:absolute;left:3.2px;top:2.9px;font-size:7.6px;color:#2c3680;white-space:nowrap;line-height:1;-webkit-text-stroke:0.4px #2c3680;">Drums</div>
<div class="t" style="position:absolute;left:6.0px;top:18.1px;font-size:7.8px;color:#d0d0d0;white-space:nowrap;width:24.5px;height:7.8px;line-height:7.8px;text-align:center;background:#1e1e1e;border-radius:4px;">-6.44</div>
<div class="t" style="position:absolute;left:6.0px;top:30.5px;font-size:7.8px;color:#d0d0d0;white-space:nowrap;width:25px;height:9px;line-height:9px;text-align:center;background:#1e1e1e;">-1.0</div>
<svg style="position:absolute;left:32.6px;top:32.8px" width="9" height="9"><path d="M0 0 L8.3 4.5 L0 9 Z" fill="#cdcdcd"/></svg>
<div style="position:absolute;left:42.4px;top:17.0px;width:9px;height:167px;background:#151515;"></div>
<div style="position:absolute;left:46.4px;top:17.0px;width:1px;height:167px;background:#222;"></div>
<div style="position:absolute;left:42.9px;top:101.5px;width:4px;height:0px;background:#1d9c3c;"></div>
<div style="position:absolute;left:42.9px;top:101.5px;width:4px;height:81.6px;background:#27ea50;"></div>
<div style="position:absolute;left:46.9px;top:101.5px;width:4px;height:0px;background:#1d9c3c;"></div>
<div style="position:absolute;left:46.9px;top:101.5px;width:4px;height:81.6px;background:#27ea50;"></div>
<div style="position:absolute;left:46.5px;top:17.0px;width:0.8px;height:167px;background:rgba(0,0,0,0.45);"></div>
<div style="position:absolute;left:40.9px;top:34.5px;width:11px;height:0.9px;background:#8a8a8a;"></div>
<div style="position:absolute;left:42.4px;top:51.0px;width:8.8px;height:0.9px;background:#c8a040;"></div>
<div class="t" style="position:absolute;left:52.3px;top:17.1px;font-size:7.4px;color:#c0c0c0;white-space:nowrap;line-height:1;-webkit-text-stroke:0.15px #c0c0c0;">6</div>
<div style="position:absolute;left:39.2px;top:20.4px;width:1.2px;height:0.9px;background:#5a5a5a;"></div>
<div class="t" style="position:absolute;left:52.3px;top:31.2px;font-size:7.4px;color:#c0c0c0;white-space:nowrap;line-height:1;-webkit-text-stroke:0.15px #c0c0c0;">0</div>
<div style="position:absolute;left:39.2px;top:34.5px;width:1.2px;height:0.9px;background:#5a5a5a;"></div>
<div class="t" style="position:absolute;left:52.3px;top:47.3px;font-size:7.4px;color:#c0c0c0;white-space:nowrap;line-height:1;-webkit-text-stroke:0.15px #c0c0c0;">6</div>
<div style="position:absolute;left:39.2px;top:50.6px;width:1.2px;height:0.9px;background:#5a5a5a;"></div>
<div class="t" style="position:absolute;left:52.3px;top:63.3px;font-size:7.4px;color:#c0c0c0;white-space:nowrap;line-height:1;-webkit-text-stroke:0.15px #c0c0c0;">12</div>
<div style="position:absolute;left:39.2px;top:66.6px;width:1.2px;height:0.9px;background:#5a5a5a;"></div>
<div class="t" style="position:absolute;left:52.3px;top:79.8px;font-size:7.4px;color:#c0c0c0;white-space:nowrap;line-height:1;-webkit-text-stroke:0.15px #c0c0c0;">18</div>
<div style="position:absolute;left:39.2px;top:83.1px;width:1.2px;height:0.9px;background:#5a5a5a;"></div>
<div class="t" style="position:absolute;left:52.3px;top:96.3px;font-size:7.4px;color:#c0c0c0;white-space:nowrap;line-height:1;-webkit-text-stroke:0.15px #c0c0c0;">24</div>
<div style="position:absolute;left:39.2px;top:99.6px;width:1.2px;height:0.9px;background:#5a5a5a;"></div>
<div class="t" style="position:absolute;left:52.3px;top:113.3px;font-size:7.4px;color:#c0c0c0;white-space:nowrap;line-height:1;-webkit-text-stroke:0.15px #c0c0c0;">30</div>
<div style="position:absolute;left:39.2px;top:116.6px;width:1.2px;height:0.9px;background:#5a5a5a;"></div>
<div class="t" style="position:absolute;left:52.3px;top:127.5px;font-size:7.4px;color:#c0c0c0;white-space:nowrap;line-height:1;-webkit-text-stroke:0.15px #c0c0c0;">36</div>
<div style="position:absolute;left:39.2px;top:130.8px;width:1.2px;height:0.9px;background:#5a5a5a;"></div>
<div class="t" style="position:absolute;left:52.3px;top:140.1px;font-size:7.4px;color:#c0c0c0;white-space:nowrap;line-height:1;-webkit-text-stroke:0.15px #c0c0c0;">42</div>
<div style="position:absolute;left:39.2px;top:143.4px;width:1.2px;height:0.9px;background:#5a5a5a;"></div>
<div class="t" style="position:absolute;left:52.3px;top:151.0px;font-size:7.4px;color:#c0c0c0;white-space:nowrap;line-height:1;-webkit-text-stroke:0.15px #c0c0c0;">48</div>
<div style="position:absolute;left:39.2px;top:154.3px;width:1.2px;height:0.9px;background:#5a5a5a;"></div>
<div class="t" style="position:absolute;left:52.3px;top:160.8px;font-size:7.4px;color:#c0c0c0;white-space:nowrap;line-height:1;-webkit-text-stroke:0.15px #c0c0c0;">54</div>
<div style="position:absolute;left:39.2px;top:164.1px;width:1.2px;height:0.9px;background:#5a5a5a;"></div>
<div class="t" style="position:absolute;left:52.3px;top:170.1px;font-size:7.4px;color:#c0c0c0;white-space:nowrap;line-height:1;-webkit-text-stroke:0.15px #c0c0c0;">60</div>
<div style="position:absolute;left:39.2px;top:173.4px;width:1.2px;height:0.9px;background:#5a5a5a;"></div>
<svg style="position:absolute;left:7.8px;top:119.5px" width="20" height="24"><path d="M6.85 20.79 A8.4 8.4 0 1 1 13.15 20.79" stroke="#151515" stroke-width="1.4" fill="none"/><path d="M10 2.5 V13" stroke="#151515" stroke-width="1.6"/><path d="M7.8 0.8 H12.2 L10 3 Z" fill="#151515"/></svg>
<div class="t" style="position:absolute;left:10.4px;top:144.1px;font-size:9px;color:#2e1c08;white-space:nowrap;width:15.4px;height:15.2px;line-height:15.2px;text-align:center;background:#ffad5e;-webkit-text-stroke:0.35px #2e1c08;">1</div>
<div class="t" style="position:absolute;left:10.2px;top:162.3px;font-size:8px;color:#d0d0d0;white-space:nowrap;width:16px;height:9.5px;line-height:9.5px;text-align:center;background:#1b1b1b;">S</div>
<div style="position:absolute;left:10.2px;top:174.5px;width:16px;height:9px;background:#1b1b1b;"></div>
<svg style="position:absolute;left:14.7px;top:175.5px" width="7" height="7"><circle cx="3.5" cy="3.5" r="2.8" fill="#c8c8c8"/><path d="M2.3 5 L4.7 2" stroke="#1b1b1b" stroke-width="1"/></svg>
</div>
<svg style="left:59.6px;top:480.0px" width="11" height="11"><circle cx="5.5" cy="5.5" r="4.4" stroke="#2c3680" stroke-width="1.15" fill="none"/><path d="M2.9 4.1 H8.1 L5.5 7.5 Z" fill="#2c3680"/></svg>
<div style="left:5.6px;top:667px;width:66.6px;height:6px;background:#1c2030;"></div>
<div style="left:6.4px;top:667.7px;width:65.0px;height:4.5px;background:#92a7ff;border-radius:0.8px"></div>
<div style="left:73.5px;top:478.5px;width:66.6px;height:194px;background:#363636;"></div>
<div style="left:73.5px;top:478.5px;width:66.6px;height:194px;overflow:hidden">

<div style="position:absolute;left:0.0px;top:0.0px;width:66.6px;height:12.5px;background:#92a7ff;box-shadow:inset 0 0 0 0.8px rgba(0,0,30,0.35);"></div>
<div class="t" style="position:absolute;left:3.2px;top:2.9px;font-size:7.6px;color:#2c3680;white-space:nowrap;line-height:1;-webkit-text-stroke:0.4px #2c3680;">Breaks</div>
<div class="t" style="position:absolute;left:6.0px;top:18.1px;font-size:7.8px;color:#d0d0d0;white-space:nowrap;width:24.5px;height:7.8px;line-height:7.8px;text-align:center;background:#1e1e1e;border-radius:4px;">-10.2</div>
<div class="t" style="position:absolute;left:6.0px;top:30.5px;font-size:7.8px;color:#d0d0d0;white-space:nowrap;width:25px;height:9px;line-height:9px;text-align:center;background:#1e1e1e;">-9.4</div>
<svg style="position:absolute;left:32.6px;top:55.9px" width="9" height="9"><path d="M0 0 L8.3 4.5 L0 9 Z" fill="#cdcdcd"/></svg>
<div style="position:absolute;left:42.5px;top:17.0px;width:9px;height:167px;background:#151515;"></div>
<div style="position:absolute;left:46.5px;top:17.0px;width:1px;height:167px;background:#222;"></div>
<div style="position:absolute;left:43.0px;top:62.0px;width:4px;height:40px;background:;background:linear-gradient(#a8b828,#7ab030 45%,#2aa040 50%,#27a045)"></div>
<div style="position:absolute;left:43.0px;top:101.5px;width:4px;height:81.6px;background:#27ea50;"></div>
<div style="position:absolute;left:47.0px;top:62.0px;width:4px;height:40px;background:;background:linear-gradient(#a8b828,#7ab030 45%,#2aa040 50%,#27a045)"></div>
<div style="position:absolute;left:47.0px;top:101.5px;width:4px;height:81.6px;background:#27ea50;"></div>
<div style="position:absolute;left:46.6px;top:17.0px;width:0.8px;height:167px;background:rgba(0,0,0,0.45);"></div>
<div style="position:absolute;left:41.0px;top:34.5px;width:11px;height:0.9px;background:#8a8a8a;"></div>
<div class="t" style="position:absolute;left:52.3px;top:17.1px;font-size:7.4px;color:#c0c0c0;white-space:nowrap;line-height:1;-webkit-text-stroke:0.15px #c0c0c0;">6</div>
<div style="position:absolute;left:39.2px;top:20.4px;width:1.2px;height:0.9px;background:#5a5a5a;"></div>
<div class="t" style="position:absolute;left:52.3px;top:31.2px;font-size:7.4px;color:#c0c0c0;white-space:nowrap;line-height:1;-webkit-text-stroke:0.15px #c0c0c0;">0</div>
<div style="position:absolute;left:39.2px;top:34.5px;width:1.2px;height:0.9px;background:#5a5a5a;"></div>
<div class="t" style="position:absolute;left:52.3px;top:47.3px;font-size:7.4px;color:#c0c0c0;white-space:nowrap;line-height:1;-webkit-text-stroke:0.15px #c0c0c0;">6</div>
<div style="position:absolute;left:39.2px;top:50.6px;width:1.2px;height:0.9px;background:#5a5a5a;"></div>
<div class="t" style="position:absolute;left:52.3px;top:63.3px;font-size:7.4px;color:#c0c0c0;white-space:nowrap;line-height:1;-webkit-text-stroke:0.15px #c0c0c0;">12</div>
<div style="position:absolute;left:39.2px;top:66.6px;width:1.2px;height:0.9px;background:#5a5a5a;"></div>
<div class="t" style="position:absolute;left:52.3px;top:79.8px;font-size:7.4px;color:#c0c0c0;white-space:nowrap;line-height:1;-webkit-text-stroke:0.15px #c0c0c0;">18</div>
<div style="position:absolute;left:39.2px;top:83.1px;width:1.2px;height:0.9px;background:#5a5a5a;"></div>
<div class="t" style="position:absolute;left:52.3px;top:96.3px;font-size:7.4px;color:#c0c0c0;white-space:nowrap;line-height:1;-webkit-text-stroke:0.15px #c0c0c0;">24</div>
<div style="position:absolute;left:39.2px;top:99.6px;width:1.2px;height:0.9px;background:#5a5a5a;"></div>
<div class="t" style="position:absolute;left:52.3px;top:113.3px;font-size:7.4px;color:#c0c0c0;white-space:nowrap;line-height:1;-webkit-text-stroke:0.15px #c0c0c0;">30</div>
<div style="position:absolute;left:39.2px;top:116.6px;width:1.2px;height:0.9px;background:#5a5a5a;"></div>
<div class="t" style="position:absolute;left:52.3px;top:127.5px;font-size:7.4px;color:#c0c0c0;white-space:nowrap;line-height:1;-webkit-text-stroke:0.15px #c0c0c0;">36</div>
<div style="position:absolute;left:39.2px;top:130.8px;width:1.2px;height:0.9px;background:#5a5a5a;"></div>
<div class="t" style="position:absolute;left:52.3px;top:140.1px;font-size:7.4px;color:#c0c0c0;white-space:nowrap;line-height:1;-webkit-text-stroke:0.15px #c0c0c0;">42</div>
<div style="position:absolute;left:39.2px;top:143.4px;width:1.2px;height:0.9px;background:#5a5a5a;"></div>
<div class="t" style="position:absolute;left:52.3px;top:151.0px;font-size:7.4px;color:#c0c0c0;white-space:nowrap;line-height:1;-webkit-text-stroke:0.15px #c0c0c0;">48</div>
<div style="position:absolute;left:39.2px;top:154.3px;width:1.2px;height:0.9px;background:#5a5a5a;"></div>
<div class="t" style="position:absolute;left:52.3px;top:160.8px;font-size:7.4px;color:#c0c0c0;white-space:nowrap;line-height:1;-webkit-text-stroke:0.15px #c0c0c0;">54</div>
<div style="position:absolute;left:39.2px;top:164.1px;width:1.2px;height:0.9px;background:#5a5a5a;"></div>
<div class="t" style="position:absolute;left:52.3px;top:170.1px;font-size:7.4px;color:#c0c0c0;white-space:nowrap;line-height:1;-webkit-text-stroke:0.15px #c0c0c0;">60</div>
<div style="position:absolute;left:39.2px;top:173.4px;width:1.2px;height:0.9px;background:#5a5a5a;"></div>
<svg style="position:absolute;left:7.8px;top:119.5px" width="20" height="24"><path d="M6.85 20.79 A8.4 8.4 0 1 1 13.15 20.79" stroke="#151515" stroke-width="1.4" fill="none"/><path d="M10 2.5 V13" stroke="#151515" stroke-width="1.6"/><path d="M7.8 0.8 H12.2 L10 3 Z" fill="#151515"/></svg>
<div class="t" style="position:absolute;left:10.4px;top:144.1px;font-size:9px;color:#2e1c08;white-space:nowrap;width:15.4px;height:15.2px;line-height:15.2px;text-align:center;background:#ffad5e;-webkit-text-stroke:0.35px #2e1c08;">2</div>
<div class="t" style="position:absolute;left:10.2px;top:162.3px;font-size:8px;color:#d0d0d0;white-space:nowrap;width:16px;height:9.5px;line-height:9.5px;text-align:center;background:#1b1b1b;">S</div>
<div style="position:absolute;left:10.2px;top:174.5px;width:16px;height:9px;background:#1b1b1b;"></div>
<svg style="position:absolute;left:14.7px;top:175.5px" width="7" height="7"><circle cx="3.5" cy="3.5" r="2.6" fill="#6c6c6c"/></svg>
</div>
<div style="left:73.5px;top:667px;width:66.6px;height:6px;background:#1c2030;"></div>
<div style="left:74.3px;top:667.7px;width:65.0px;height:4.5px;background:#92a7ff;border-radius:0.8px"></div>
<div style="left:141px;top:478.5px;width:66.6px;height:194px;background:#363636;"></div>
<div style="left:141px;top:478.5px;width:66.6px;height:194px;overflow:hidden">

<div style="position:absolute;left:0px;top:0.0px;width:66.6px;height:12.5px;background:#8bc5ff;box-shadow:inset 0 0 0 0.8px rgba(0,0,30,0.35);"></div>
<div class="t" style="position:absolute;left:3.2px;top:2.9px;font-size:7.6px;color:#24487a;white-space:nowrap;line-height:1;-webkit-text-stroke:0.4px #24487a;">Percussion</div>
<div class="t" style="position:absolute;left:6px;top:18.1px;font-size:7.8px;color:#d0d0d0;white-space:nowrap;width:24.5px;height:7.8px;line-height:7.8px;text-align:center;background:#1e1e1e;border-radius:4px;">-21.2</div>
<div class="t" style="position:absolute;left:6px;top:30.5px;font-size:7.8px;color:#d0d0d0;white-space:nowrap;width:25px;height:9px;line-height:9px;text-align:center;background:#1e1e1e;">0</div>
<svg style="position:absolute;left:32.6px;top:30.4px" width="9" height="9"><path d="M0 0 L8.3 4.5 L0 9 Z" fill="#cdcdcd"/></svg>
<div style="position:absolute;left:42px;top:17.0px;width:9px;height:167px;background:#151515;"></div>
<div style="position:absolute;left:46px;top:17.0px;width:1px;height:167px;background:#222;"></div>
<div style="position:absolute;left:42.5px;top:144.5px;width:4px;height:10px;background:#1d9c3c;"></div>
<div style="position:absolute;left:42.5px;top:154.5px;width:4px;height:28.6px;background:#27ea50;"></div>
<div style="position:absolute;left:46.5px;top:149.5px;width:4px;height:5px;background:#1d9c3c;"></div>
<div style="position:absolute;left:46.5px;top:154.5px;width:4px;height:28.6px;background:#27ea50;"></div>
<div style="position:absolute;left:42.5px;top:92.5px;width:4px;height:1px;background:#27ea50;"></div>
<div style="position:absolute;left:46.5px;top:117.5px;width:4px;height:1px;background:#27ea50;"></div>
<div style="position:absolute;left:46.1px;top:17.0px;width:0.8px;height:167px;background:rgba(0,0,0,0.45);"></div>
<div style="position:absolute;left:40.5px;top:34.5px;width:11px;height:0.9px;background:#8a8a8a;"></div>
<div class="t" style="position:absolute;left:52.3px;top:17.1px;font-size:7.4px;color:#c0c0c0;white-space:nowrap;line-height:1;-webkit-text-stroke:0.15px #c0c0c0;">6</div>
<div style="position:absolute;left:39.2px;top:20.4px;width:1.2px;height:0.9px;background:#5a5a5a;"></div>
<div class="t" style="position:absolute;left:52.3px;top:31.2px;font-size:7.4px;color:#c0c0c0;white-space:nowrap;line-height:1;-webkit-text-stroke:0.15px #c0c0c0;">0</div>
<div style="position:absolute;left:39.2px;top:34.5px;width:1.2px;height:0.9px;background:#5a5a5a;"></div>
<div class="t" style="position:absolute;left:52.3px;top:47.3px;font-size:7.4px;color:#c0c0c0;white-space:nowrap;line-height:1;-webkit-text-stroke:0.15px #c0c0c0;">6</div>
<div style="position:absolute;left:39.2px;top:50.6px;width:1.2px;height:0.9px;background:#5a5a5a;"></div>
<div class="t" style="position:absolute;left:52.3px;top:63.3px;font-size:7.4px;color:#c0c0c0;white-space:nowrap;line-height:1;-webkit-text-stroke:0.15px #c0c0c0;">12</div>
<div style="position:absolute;left:39.2px;top:66.6px;width:1.2px;height:0.9px;background:#5a5a5a;"></div>
<div class="t" style="position:absolute;left:52.3px;top:79.8px;font-size:7.4px;color:#c0c0c0;white-space:nowrap;line-height:1;-webkit-text-stroke:0.15px #c0c0c0;">18</div>
<div style="position:absolute;left:39.2px;top:83.1px;width:1.2px;height:0.9px;background:#5a5a5a;"></div>
<div class="t" style="position:absolute;left:52.3px;top:96.3px;font-size:7.4px;color:#c0c0c0;white-space:nowrap;line-height:1;-webkit-text-stroke:0.15px #c0c0c0;">24</div>
<div style="position:absolute;left:39.2px;top:99.6px;width:1.2px;height:0.9px;background:#5a5a5a;"></div>
<div class="t" style="position:absolute;left:52.3px;top:113.3px;font-size:7.4px;color:#c0c0c0;white-space:nowrap;line-height:1;-webkit-text-stroke:0.15px #c0c0c0;">30</div>
<div style="position:absolute;left:39.2px;top:116.6px;width:1.2px;height:0.9px;background:#5a5a5a;"></div>
<div class="t" style="position:absolute;left:52.3px;top:127.5px;font-size:7.4px;color:#c0c0c0;white-space:nowrap;line-height:1;-webkit-text-stroke:0.15px #c0c0c0;">36</div>
<div style="position:absolute;left:39.2px;top:130.8px;width:1.2px;height:0.9px;background:#5a5a5a;"></div>
<div class="t" style="position:absolute;left:52.3px;top:140.1px;font-size:7.4px;color:#c0c0c0;white-space:nowrap;line-height:1;-webkit-text-stroke:0.15px #c0c0c0;">42</div>
<div style="position:absolute;left:39.2px;top:143.4px;width:1.2px;height:0.9px;background:#5a5a5a;"></div>
<div class="t" style="position:absolute;left:52.3px;top:151.0px;font-size:7.4px;color:#c0c0c0;white-space:nowrap;line-height:1;-webkit-text-stroke:0.15px #c0c0c0;">48</div>
<div style="position:absolute;left:39.2px;top:154.3px;width:1.2px;height:0.9px;background:#5a5a5a;"></div>
<div class="t" style="position:absolute;left:52.3px;top:160.8px;font-size:7.4px;color:#c0c0c0;white-space:nowrap;line-height:1;-webkit-text-stroke:0.15px #c0c0c0;">54</div>
<div style="position:absolute;left:39.2px;top:164.1px;width:1.2px;height:0.9px;background:#5a5a5a;"></div>
<div class="t" style="position:absolute;left:52.3px;top:170.1px;font-size:7.4px;color:#c0c0c0;white-space:nowrap;line-height:1;-webkit-text-stroke:0.15px #c0c0c0;">60</div>
<div style="position:absolute;left:39.2px;top:173.4px;width:1.2px;height:0.9px;background:#5a5a5a;"></div>
<svg style="position:absolute;left:7.8px;top:119.5px" width="20" height="24"><path d="M6.85 20.79 A8.4 8.4 0 1 1 13.15 20.79" stroke="#151515" stroke-width="1.4" fill="none"/><path d="M10 2.5 V13" stroke="#151515" stroke-width="1.6"/><path d="M7.8 0.8 H12.2 L10 3 Z" fill="#151515"/></svg>
<div class="t" style="position:absolute;left:10.4px;top:144.1px;font-size:9px;color:#2e1c08;white-space:nowrap;width:15.4px;height:15.2px;line-height:15.2px;text-align:center;background:#ffad5e;-webkit-text-stroke:0.35px #2e1c08;">3</div>
<div class="t" style="position:absolute;left:10.2px;top:162.3px;font-size:8px;color:#d0d0d0;white-space:nowrap;width:16px;height:9.5px;line-height:9.5px;text-align:center;background:#1b1b1b;">S</div>
</div>
<svg style="left:195.0px;top:480.0px" width="11" height="11"><circle cx="5.5" cy="5.5" r="4.4" stroke="#24487a" stroke-width="1.15" fill="none"/><rect x="4" y="3.9" width="3" height="1.3" fill="#24487a"/><rect x="4" y="5.9" width="3" height="1.3" fill="#24487a"/></svg>
<div style="left:141px;top:667px;width:66.6px;height:6px;background:#1c2030;"></div>
<div style="left:141.8px;top:667.7px;width:65.0px;height:4.5px;background:#8bc5ff;border-radius:0.8px"></div>
<div style="left:208.9px;top:478.5px;width:66.6px;height:194px;background:#434343;"></div>
<div style="left:208.9px;top:478.5px;width:66.6px;height:194px;overflow:hidden">

<div style="position:absolute;left:0.0px;top:0.0px;width:66.6px;height:12.5px;background:#5cffe8;box-shadow:inset 0 0 0 0.8px rgba(0,0,30,0.35);"></div>
<div class="t" style="position:absolute;left:3.2px;top:2.9px;font-size:7.6px;color:#176a60;white-space:nowrap;line-height:1;-webkit-text-stroke:0.4px #176a60;">Bass</div>
<div class="t" style="position:absolute;left:6.0px;top:18.1px;font-size:7.8px;color:#d0d0d0;white-space:nowrap;width:24.5px;height:7.8px;line-height:7.8px;text-align:center;background:#1e1e1e;border-radius:4px;">-10.8</div>
<div class="t" style="position:absolute;left:6.0px;top:30.5px;font-size:7.8px;color:#d0d0d0;white-space:nowrap;width:25px;height:9px;line-height:9px;text-align:center;background:#1e1e1e;">-7.7</div>
<svg style="position:absolute;left:32.6px;top:51.8px" width="9" height="9"><path d="M0 0 L8.3 4.5 L0 9 Z" fill="#cdcdcd"/></svg>
<div style="position:absolute;left:42.1px;top:17.0px;width:9px;height:167px;background:#151515;"></div>
<div style="position:absolute;left:46.1px;top:17.0px;width:1px;height:167px;background:#222;"></div>
<div style="position:absolute;left:42.6px;top:91.9px;width:4px;height:0px;background:#1d9c3c;"></div>
<div style="position:absolute;left:42.6px;top:91.9px;width:4px;height:91.2px;background:#27ea50;"></div>
<div style="position:absolute;left:46.6px;top:91.9px;width:4px;height:0px;background:#1d9c3c;"></div>
<div style="position:absolute;left:46.6px;top:91.9px;width:4px;height:91.2px;background:#27ea50;"></div>
<div style="position:absolute;left:42.6px;top:64.5px;width:4px;height:1px;background:#27ea50;"></div>
<div style="position:absolute;left:46.6px;top:64.5px;width:4px;height:1px;background:#27ea50;"></div>
<div style="position:absolute;left:46.2px;top:17.0px;width:0.8px;height:167px;background:rgba(0,0,0,0.45);"></div>
<div style="position:absolute;left:40.6px;top:34.5px;width:11px;height:0.9px;background:#8a8a8a;"></div>
<div style="position:absolute;left:42.7px;top:64.5px;width:7.6px;height:0.9px;background:#c8c040;"></div>
<div class="t" style="position:absolute;left:52.3px;top:17.1px;font-size:7.4px;color:#c0c0c0;white-space:nowrap;line-height:1;-webkit-text-stroke:0.15px #c0c0c0;">6</div>
<div style="position:absolute;left:39.2px;top:20.4px;width:1.2px;height:0.9px;background:#5a5a5a;"></div>
<div class="t" style="position:absolute;left:52.3px;top:31.2px;font-size:7.4px;color:#c0c0c0;white-space:nowrap;line-height:1;-webkit-text-stroke:0.15px #c0c0c0;">0</div>
<div style="position:absolute;left:39.2px;top:34.5px;width:1.2px;height:0.9px;background:#5a5a5a;"></div>
<div class="t" style="position:absolute;left:52.3px;top:47.3px;font-size:7.4px;color:#c0c0c0;white-space:nowrap;line-height:1;-webkit-text-stroke:0.15px #c0c0c0;">6</div>
<div style="position:absolute;left:39.2px;top:50.6px;width:1.2px;height:0.9px;background:#5a5a5a;"></div>
<div class="t" style="position:absolute;left:52.3px;top:63.3px;font-size:7.4px;color:#c0c0c0;white-space:nowrap;line-height:1;-webkit-text-stroke:0.15px #c0c0c0;">12</div>
<div style="position:absolute;left:39.2px;top:66.6px;width:1.2px;height:0.9px;background:#5a5a5a;"></div>
<div class="t" style="position:absolute;left:52.3px;top:79.8px;font-size:7.4px;color:#c0c0c0;white-space:nowrap;line-height:1;-webkit-text-stroke:0.15px #c0c0c0;">18</div>
<div style="position:absolute;left:39.2px;top:83.1px;width:1.2px;height:0.9px;background:#5a5a5a;"></div>
<div class="t" style="position:absolute;left:52.3px;top:96.3px;font-size:7.4px;color:#c0c0c0;white-space:nowrap;line-height:1;-webkit-text-stroke:0.15px #c0c0c0;">24</div>
<div style="position:absolute;left:39.2px;top:99.6px;width:1.2px;height:0.9px;background:#5a5a5a;"></div>
<div class="t" style="position:absolute;left:52.3px;top:113.3px;font-size:7.4px;color:#c0c0c0;white-space:nowrap;line-height:1;-webkit-text-stroke:0.15px #c0c0c0;">30</div>
<div style="position:absolute;left:39.2px;top:116.6px;width:1.2px;height:0.9px;background:#5a5a5a;"></div>
<div class="t" style="position:absolute;left:52.3px;top:127.5px;font-size:7.4px;color:#c0c0c0;white-space:nowrap;line-height:1;-webkit-text-stroke:0.15px #c0c0c0;">36</div>
<div style="position:absolute;left:39.2px;top:130.8px;width:1.2px;height:0.9px;background:#5a5a5a;"></div>
<div class="t" style="position:absolute;left:52.3px;top:140.1px;font-size:7.4px;color:#c0c0c0;white-space:nowrap;line-height:1;-webkit-text-stroke:0.15px #c0c0c0;">42</div>
<div style="position:absolute;left:39.2px;top:143.4px;width:1.2px;height:0.9px;background:#5a5a5a;"></div>
<div class="t" style="position:absolute;left:52.3px;top:151.0px;font-size:7.4px;color:#c0c0c0;white-space:nowrap;line-height:1;-webkit-text-stroke:0.15px #c0c0c0;">48</div>
<div style="position:absolute;left:39.2px;top:154.3px;width:1.2px;height:0.9px;background:#5a5a5a;"></div>
<div class="t" style="position:absolute;left:52.3px;top:160.8px;font-size:7.4px;color:#c0c0c0;white-space:nowrap;line-height:1;-webkit-text-stroke:0.15px #c0c0c0;">54</div>
<div style="position:absolute;left:39.2px;top:164.1px;width:1.2px;height:0.9px;background:#5a5a5a;"></div>
<div class="t" style="position:absolute;left:52.3px;top:170.1px;font-size:7.4px;color:#c0c0c0;white-space:nowrap;line-height:1;-webkit-text-stroke:0.15px #c0c0c0;">60</div>
<div style="position:absolute;left:39.2px;top:173.4px;width:1.2px;height:0.9px;background:#5a5a5a;"></div>
<svg style="position:absolute;left:7.8px;top:119.5px" width="20" height="24"><path d="M6.85 20.79 A8.4 8.4 0 1 1 13.15 20.79" stroke="#151515" stroke-width="1.4" fill="none"/><path d="M10 2.5 V13" stroke="#151515" stroke-width="1.6"/><path d="M7.8 0.8 H12.2 L10 3 Z" fill="#151515"/></svg>
<div class="t" style="position:absolute;left:10.4px;top:144.1px;font-size:9px;color:#2e1c08;white-space:nowrap;width:15.4px;height:15.2px;line-height:15.2px;text-align:center;background:#ffad5e;-webkit-text-stroke:0.35px #2e1c08;">8</div>
<div class="t" style="position:absolute;left:10.2px;top:162.3px;font-size:8px;color:#d0d0d0;white-space:nowrap;width:16px;height:9.5px;line-height:9.5px;text-align:center;background:#1b1b1b;">S</div>
<div style="position:absolute;left:10.2px;top:174.5px;width:16px;height:9px;background:#1b1b1b;"></div>
<svg style="position:absolute;left:14.7px;top:175.5px" width="7" height="7"><circle cx="3.5" cy="3.5" r="2.8" fill="#c8c8c8"/><path d="M2.3 5 L4.7 2" stroke="#1b1b1b" stroke-width="1"/></svg>
</div>
<div style="left:208.9px;top:667px;width:66.6px;height:6px;background:#1c2030;"></div>
<div style="left:209.7px;top:667.7px;width:65.0px;height:4.5px;background:#5cffe8;border-radius:0.8px"></div>
<div style="left:276.4px;top:478.5px;width:66.6px;height:194px;background:#363636;"></div>
<div style="left:276.4px;top:478.5px;width:66.6px;height:194px;overflow:hidden">

<div style="position:absolute;left:0.0px;top:0.0px;width:66.6px;height:12.5px;background:#5cffe8;box-shadow:inset 0 0 0 0.8px rgba(0,0,30,0.35);"></div>
<div class="t" style="position:absolute;left:3.2px;top:2.9px;font-size:7.6px;color:#176a60;white-space:nowrap;line-height:1;-webkit-text-stroke:0.4px #176a60;">Bass Drop</div>
<div class="t" style="position:absolute;left:6.0px;top:18.1px;font-size:7.8px;color:#d0d0d0;white-space:nowrap;width:24.5px;height:7.8px;line-height:7.8px;text-align:center;background:#1e1e1e;border-radius:4px;">−<span style="font-size:10px">∞</span></div>
<div class="t" style="position:absolute;left:6.0px;top:30.5px;font-size:7.8px;color:#d0d0d0;white-space:nowrap;width:25px;height:9px;line-height:9px;text-align:center;background:#1e1e1e;">-0.2</div>
<svg style="position:absolute;left:32.6px;top:30.4px" width="9" height="9"><path d="M0 0 L8.3 4.5 L0 9 Z" fill="#cdcdcd"/></svg>
<div style="position:absolute;left:42.6px;top:17.0px;width:9px;height:167px;background:#151515;"></div>
<div style="position:absolute;left:46.6px;top:17.0px;width:1px;height:167px;background:#222;"></div>
<div style="position:absolute;left:46.7px;top:17.0px;width:0.8px;height:167px;background:rgba(0,0,0,0.45);"></div>
<div style="position:absolute;left:41.1px;top:34.5px;width:11px;height:0.9px;background:#8a8a8a;"></div>
<div class="t" style="position:absolute;left:52.3px;top:17.1px;font-size:7.4px;color:#c0c0c0;white-space:nowrap;line-height:1;-webkit-text-stroke:0.15px #c0c0c0;">6</div>
<div style="position:absolute;left:39.2px;top:20.4px;width:1.2px;height:0.9px;background:#5a5a5a;"></div>
<div class="t" style="position:absolute;left:52.3px;top:31.2px;font-size:7.4px;color:#c0c0c0;white-space:nowrap;line-height:1;-webkit-text-stroke:0.15px #c0c0c0;">0</div>
<div style="position:absolute;left:39.2px;top:34.5px;width:1.2px;height:0.9px;background:#5a5a5a;"></div>
<div class="t" style="position:absolute;left:52.3px;top:47.3px;font-size:7.4px;color:#c0c0c0;white-space:nowrap;line-height:1;-webkit-text-stroke:0.15px #c0c0c0;">6</div>
<div style="position:absolute;left:39.2px;top:50.6px;width:1.2px;height:0.9px;background:#5a5a5a;"></div>
<div class="t" style="position:absolute;left:52.3px;top:63.3px;font-size:7.4px;color:#c0c0c0;white-space:nowrap;line-height:1;-webkit-text-stroke:0.15px #c0c0c0;">12</div>
<div style="position:absolute;left:39.2px;top:66.6px;width:1.2px;height:0.9px;background:#5a5a5a;"></div>
<div class="t" style="position:absolute;left:52.3px;top:79.8px;font-size:7.4px;color:#c0c0c0;white-space:nowrap;line-height:1;-webkit-text-stroke:0.15px #c0c0c0;">18</div>
<div style="position:absolute;left:39.2px;top:83.1px;width:1.2px;height:0.9px;background:#5a5a5a;"></div>
<div class="t" style="position:absolute;left:52.3px;top:96.3px;font-size:7.4px;color:#c0c0c0;white-space:nowrap;line-height:1;-webkit-text-stroke:0.15px #c0c0c0;">24</div>
<div style="position:absolute;left:39.2px;top:99.6px;width:1.2px;height:0.9px;background:#5a5a5a;"></div>
<div class="t" style="position:absolute;left:52.3px;top:113.3px;font-size:7.4px;color:#c0c0c0;white-space:nowrap;line-height:1;-webkit-text-stroke:0.15px #c0c0c0;">30</div>
<div style="position:absolute;left:39.2px;top:116.6px;width:1.2px;height:0.9px;background:#5a5a5a;"></div>
<div class="t" style="position:absolute;left:52.3px;top:127.5px;font-size:7.4px;color:#c0c0c0;white-space:nowrap;line-height:1;-webkit-text-stroke:0.15px #c0c0c0;">36</div>
<div style="position:absolute;left:39.2px;top:130.8px;width:1.2px;height:0.9px;background:#5a5a5a;"></div>
<div class="t" style="position:absolute;left:52.3px;top:140.1px;font-size:7.4px;color:#c0c0c0;white-space:nowrap;line-height:1;-webkit-text-stroke:0.15px #c0c0c0;">42</div>
<div style="position:absolute;left:39.2px;top:143.4px;width:1.2px;height:0.9px;background:#5a5a5a;"></div>
<div class="t" style="position:absolute;left:52.3px;top:151.0px;font-size:7.4px;color:#c0c0c0;white-space:nowrap;line-height:1;-webkit-text-stroke:0.15px #c0c0c0;">48</div>
<div style="position:absolute;left:39.2px;top:154.3px;width:1.2px;height:0.9px;background:#5a5a5a;"></div>
<div class="t" style="position:absolute;left:52.3px;top:160.8px;font-size:7.4px;color:#c0c0c0;white-space:nowrap;line-height:1;-webkit-text-stroke:0.15px #c0c0c0;">54</div>
<div style="position:absolute;left:39.2px;top:164.1px;width:1.2px;height:0.9px;background:#5a5a5a;"></div>
<div class="t" style="position:absolute;left:52.3px;top:170.1px;font-size:7.4px;color:#c0c0c0;white-space:nowrap;line-height:1;-webkit-text-stroke:0.15px #c0c0c0;">60</div>
<div style="position:absolute;left:39.2px;top:173.4px;width:1.2px;height:0.9px;background:#5a5a5a;"></div>
<svg style="position:absolute;left:7.8px;top:119.5px" width="20" height="24"><path d="M6.85 20.79 A8.4 8.4 0 1 1 13.15 20.79" stroke="#151515" stroke-width="1.4" fill="none"/><path d="M10 2.5 V13" stroke="#151515" stroke-width="1.6"/><path d="M7.8 0.8 H12.2 L10 3 Z" fill="#151515"/></svg>
<div class="t" style="position:absolute;left:10.4px;top:144.1px;font-size:9px;color:#2e1c08;white-space:nowrap;width:15.4px;height:15.2px;line-height:15.2px;text-align:center;background:#ffad5e;-webkit-text-stroke:0.35px #2e1c08;">9</div>
<div class="t" style="position:absolute;left:10.2px;top:162.3px;font-size:8px;color:#d0d0d0;white-space:nowrap;width:16px;height:9.5px;line-height:9.5px;text-align:center;background:#1b1b1b;">S</div>
<div style="position:absolute;left:10.2px;top:174.5px;width:16px;height:9px;background:#1b1b1b;"></div>
<svg style="position:absolute;left:14.7px;top:175.5px" width="7" height="7"><circle cx="3.5" cy="3.5" r="2.8" fill="#c8c8c8"/><path d="M2.3 5 L4.7 2" stroke="#1b1b1b" stroke-width="1"/></svg>
</div>
<svg style="left:330.4px;top:480.0px" width="11" height="11"><circle cx="5.5" cy="5.5" r="4.4" stroke="#176a60" stroke-width="1.15" fill="none"/><path d="M2.9 4.1 H8.1 L5.5 7.5 Z" fill="#176a60"/></svg>
<div style="left:276.4px;top:667px;width:66.6px;height:6px;background:#1c2030;"></div>
<div style="left:277.2px;top:667.7px;width:65.0px;height:4.5px;background:#5cffe8;border-radius:0.8px"></div>
<div style="left:344.3px;top:478.5px;width:66.6px;height:194px;background:#363636;"></div>
<div style="left:344.3px;top:478.5px;width:66.6px;height:194px;overflow:hidden">

<div style="position:absolute;left:0.0px;top:0.0px;width:66.6px;height:12.5px;background:#edffae;box-shadow:inset 0 0 0 0.8px rgba(0,0,30,0.35);"></div>
<div class="t" style="position:absolute;left:3.2px;top:2.9px;font-size:7.6px;color:#5a6030;white-space:nowrap;line-height:1;-webkit-text-stroke:0.4px #5a6030;">Synth Riser</div>
<div class="t" style="position:absolute;left:6.0px;top:18.1px;font-size:7.8px;color:#d0d0d0;white-space:nowrap;width:24.5px;height:7.8px;line-height:7.8px;text-align:center;background:#1e1e1e;border-radius:4px;">-28.2</div>
<div class="t" style="position:absolute;left:6.0px;top:30.5px;font-size:7.8px;color:#d0d0d0;white-space:nowrap;width:25px;height:9px;line-height:9px;text-align:center;background:#1e1e1e;">-18.0</div>
<svg style="position:absolute;left:32.6px;top:79.4px" width="9" height="9"><path d="M0 0 L8.3 4.5 L0 9 Z" fill="#cdcdcd"/></svg>
<div style="position:absolute;left:41.7px;top:17.0px;width:9px;height:167px;background:#151515;"></div>
<div style="position:absolute;left:45.7px;top:17.0px;width:1px;height:167px;background:#222;"></div>
<div style="position:absolute;left:42.2px;top:122.5px;width:4px;height:11px;background:#1d9c3c;"></div>
<div style="position:absolute;left:42.2px;top:133.5px;width:4px;height:49.6px;background:#27ea50;"></div>
<div style="position:absolute;left:46.2px;top:120.5px;width:4px;height:13px;background:#1d9c3c;"></div>
<div style="position:absolute;left:46.2px;top:133.5px;width:4px;height:49.6px;background:#27ea50;"></div>
<div style="position:absolute;left:42.2px;top:113.5px;width:4px;height:1px;background:#27ea50;"></div>
<div style="position:absolute;left:46.2px;top:111.5px;width:4px;height:1px;background:#27ea50;"></div>
<div style="position:absolute;left:45.8px;top:17.0px;width:0.8px;height:167px;background:rgba(0,0,0,0.45);"></div>
<div style="position:absolute;left:40.2px;top:34.5px;width:11px;height:0.9px;background:#8a8a8a;"></div>
<div class="t" style="position:absolute;left:52.3px;top:17.1px;font-size:7.4px;color:#c0c0c0;white-space:nowrap;line-height:1;-webkit-text-stroke:0.15px #c0c0c0;">6</div>
<div style="position:absolute;left:39.2px;top:20.4px;width:1.2px;height:0.9px;background:#5a5a5a;"></div>
<div class="t" style="position:absolute;left:52.3px;top:31.2px;font-size:7.4px;color:#c0c0c0;white-space:nowrap;line-height:1;-webkit-text-stroke:0.15px #c0c0c0;">0</div>
<div style="position:absolute;left:39.2px;top:34.5px;width:1.2px;height:0.9px;background:#5a5a5a;"></div>
<div class="t" style="position:absolute;left:52.3px;top:47.3px;font-size:7.4px;color:#c0c0c0;white-space:nowrap;line-height:1;-webkit-text-stroke:0.15px #c0c0c0;">6</div>
<div style="position:absolute;left:39.2px;top:50.6px;width:1.2px;height:0.9px;background:#5a5a5a;"></div>
<div class="t" style="position:absolute;left:52.3px;top:63.3px;font-size:7.4px;color:#c0c0c0;white-space:nowrap;line-height:1;-webkit-text-stroke:0.15px #c0c0c0;">12</div>
<div style="position:absolute;left:39.2px;top:66.6px;width:1.2px;height:0.9px;background:#5a5a5a;"></div>
<div class="t" style="position:absolute;left:52.3px;top:79.8px;font-size:7.4px;color:#c0c0c0;white-space:nowrap;line-height:1;-webkit-text-stroke:0.15px #c0c0c0;">18</div>
<div style="position:absolute;left:39.2px;top:83.1px;width:1.2px;height:0.9px;background:#5a5a5a;"></div>
<div class="t" style="position:absolute;left:52.3px;top:96.3px;font-size:7.4px;color:#c0c0c0;white-space:nowrap;line-height:1;-webkit-text-stroke:0.15px #c0c0c0;">24</div>
<div style="position:absolute;left:39.2px;top:99.6px;width:1.2px;height:0.9px;background:#5a5a5a;"></div>
<div class="t" style="position:absolute;left:52.3px;top:113.3px;font-size:7.4px;color:#c0c0c0;white-space:nowrap;line-height:1;-webkit-text-stroke:0.15px #c0c0c0;">30</div>
<div style="position:absolute;left:39.2px;top:116.6px;width:1.2px;height:0.9px;background:#5a5a5a;"></div>
<div class="t" style="position:absolute;left:52.3px;top:127.5px;font-size:7.4px;color:#c0c0c0;white-space:nowrap;line-height:1;-webkit-text-stroke:0.15px #c0c0c0;">36</div>
<div style="position:absolute;left:39.2px;top:130.8px;width:1.2px;height:0.9px;background:#5a5a5a;"></div>
<div class="t" style="position:absolute;left:52.3px;top:140.1px;font-size:7.4px;color:#c0c0c0;white-space:nowrap;line-height:1;-webkit-text-stroke:0.15px #c0c0c0;">42</div>
<div style="position:absolute;left:39.2px;top:143.4px;width:1.2px;height:0.9px;background:#5a5a5a;"></div>
<div class="t" style="position:absolute;left:52.3px;top:151.0px;font-size:7.4px;color:#c0c0c0;white-space:nowrap;line-height:1;-webkit-text-stroke:0.15px #c0c0c0;">48</div>
<div style="position:absolute;left:39.2px;top:154.3px;width:1.2px;height:0.9px;background:#5a5a5a;"></div>
<div class="t" style="position:absolute;left:52.3px;top:160.8px;font-size:7.4px;color:#c0c0c0;white-space:nowrap;line-height:1;-webkit-text-stroke:0.15px #c0c0c0;">54</div>
<div style="position:absolute;left:39.2px;top:164.1px;width:1.2px;height:0.9px;background:#5a5a5a;"></div>
<div class="t" style="position:absolute;left:52.3px;top:170.1px;font-size:7.4px;color:#c0c0c0;white-space:nowrap;line-height:1;-webkit-text-stroke:0.15px #c0c0c0;">60</div>
<div style="position:absolute;left:39.2px;top:173.4px;width:1.2px;height:0.9px;background:#5a5a5a;"></div>
<svg style="position:absolute;left:7.8px;top:119.5px" width="20" height="24"><path d="M6.85 20.79 A8.4 8.4 0 1 1 13.15 20.79" stroke="#151515" stroke-width="1.4" fill="none"/><path d="M10 2.5 V13" stroke="#151515" stroke-width="1.6"/><path d="M7.8 0.8 H12.2 L10 3 Z" fill="#151515"/></svg>
<div class="t" style="position:absolute;left:10.4px;top:144.1px;font-size:9px;color:#2e1c08;white-space:nowrap;width:15.4px;height:15.2px;line-height:15.2px;text-align:center;background:#ffad5e;-webkit-text-stroke:0.35px #2e1c08;">10</div>
<div class="t" style="position:absolute;left:10.2px;top:162.3px;font-size:8px;color:#d0d0d0;white-space:nowrap;width:16px;height:9.5px;line-height:9.5px;text-align:center;background:#1b1b1b;">S</div>
<div style="position:absolute;left:10.2px;top:174.5px;width:16px;height:9px;background:#1b1b1b;"></div>
<svg style="position:absolute;left:14.7px;top:175.5px" width="7" height="7"><circle cx="3.5" cy="3.5" r="2.8" fill="#c8c8c8"/><path d="M2.3 5 L4.7 2" stroke="#1b1b1b" stroke-width="1"/></svg>
</div>
<svg style="left:398.3px;top:480.0px" width="11" height="11"><circle cx="5.5" cy="5.5" r="4.4" stroke="#5a6030" stroke-width="1.15" fill="none"/><path d="M2.9 4.1 H8.1 L5.5 7.5 Z" fill="#5a6030"/></svg>
<div style="left:344.3px;top:667px;width:66.6px;height:6px;background:#1c2030;"></div>
<div style="left:345.1px;top:667.7px;width:65.0px;height:4.5px;background:#edffae;border-radius:0.8px"></div>
<div style="left:411.6px;top:478.5px;width:66.6px;height:194px;background:#363636;"></div>
<div style="left:411.6px;top:478.5px;width:66.6px;height:194px;overflow:hidden">

<div style="position:absolute;left:0.0px;top:0.0px;width:66.6px;height:12.5px;background:#f7f47c;box-shadow:inset 0 0 0 0.8px rgba(0,0,30,0.35);"></div>
<div class="t" style="position:absolute;left:3.2px;top:2.9px;font-size:7.6px;color:#5c5620;white-space:nowrap;line-height:1;-webkit-text-stroke:0.4px #5c5620;">Keys</div>
<div class="t" style="position:absolute;left:6.0px;top:18.1px;font-size:7.8px;color:#d0d0d0;white-space:nowrap;width:24.5px;height:7.8px;line-height:7.8px;text-align:center;background:#1e1e1e;border-radius:4px;">-16.0</div>
<div class="t" style="position:absolute;left:6.0px;top:30.5px;font-size:7.8px;color:#d0d0d0;white-space:nowrap;width:25px;height:9px;line-height:9px;text-align:center;background:#1e1e1e;">-6.6</div>
<svg style="position:absolute;left:32.6px;top:49.0px" width="9" height="9"><path d="M0 0 L8.3 4.5 L0 9 Z" fill="#cdcdcd"/></svg>
<div style="position:absolute;left:42.4px;top:17.0px;width:9px;height:167px;background:#151515;"></div>
<div style="position:absolute;left:46.4px;top:17.0px;width:1px;height:167px;background:#222;"></div>
<div style="position:absolute;left:42.9px;top:181.5px;width:4px;height:0px;background:#1d9c3c;"></div>
<div style="position:absolute;left:42.9px;top:181.5px;width:4px;height:1.6px;background:#27ea50;"></div>
<div style="position:absolute;left:46.9px;top:181.5px;width:4px;height:0px;background:#1d9c3c;"></div>
<div style="position:absolute;left:46.9px;top:181.5px;width:4px;height:1.6px;background:#27ea50;"></div>
<div style="position:absolute;left:42.9px;top:93.2px;width:4px;height:1px;background:#27ea50;"></div>
<div style="position:absolute;left:46.9px;top:78.5px;width:4px;height:1px;background:#27ea50;"></div>
<div style="position:absolute;left:46.5px;top:17.0px;width:0.8px;height:167px;background:rgba(0,0,0,0.45);"></div>
<div style="position:absolute;left:40.9px;top:34.5px;width:11px;height:0.9px;background:#8a8a8a;"></div>
<div class="t" style="position:absolute;left:52.3px;top:17.1px;font-size:7.4px;color:#c0c0c0;white-space:nowrap;line-height:1;-webkit-text-stroke:0.15px #c0c0c0;">6</div>
<div style="position:absolute;left:39.2px;top:20.4px;width:1.2px;height:0.9px;background:#5a5a5a;"></div>
<div class="t" style="position:absolute;left:52.3px;top:31.2px;font-size:7.4px;color:#c0c0c0;white-space:nowrap;line-height:1;-webkit-text-stroke:0.15px #c0c0c0;">0</div>
<div style="position:absolute;left:39.2px;top:34.5px;width:1.2px;height:0.9px;background:#5a5a5a;"></div>
<div class="t" style="position:absolute;left:52.3px;top:47.3px;font-size:7.4px;color:#c0c0c0;white-space:nowrap;line-height:1;-webkit-text-stroke:0.15px #c0c0c0;">6</div>
<div style="position:absolute;left:39.2px;top:50.6px;width:1.2px;height:0.9px;background:#5a5a5a;"></div>
<div class="t" style="position:absolute;left:52.3px;top:63.3px;font-size:7.4px;color:#c0c0c0;white-space:nowrap;line-height:1;-webkit-text-stroke:0.15px #c0c0c0;">12</div>
<div style="position:absolute;left:39.2px;top:66.6px;width:1.2px;height:0.9px;background:#5a5a5a;"></div>
<div class="t" style="position:absolute;left:52.3px;top:79.8px;font-size:7.4px;color:#c0c0c0;white-space:nowrap;line-height:1;-webkit-text-stroke:0.15px #c0c0c0;">18</div>
<div style="position:absolute;left:39.2px;top:83.1px;width:1.2px;height:0.9px;background:#5a5a5a;"></div>
<div class="t" style="position:absolute;left:52.3px;top:96.3px;font-size:7.4px;color:#c0c0c0;white-space:nowrap;line-height:1;-webkit-text-stroke:0.15px #c0c0c0;">24</div>
<div style="position:absolute;left:39.2px;top:99.6px;width:1.2px;height:0.9px;background:#5a5a5a;"></div>
<div class="t" style="position:absolute;left:52.3px;top:113.3px;font-size:7.4px;color:#c0c0c0;white-space:nowrap;line-height:1;-webkit-text-stroke:0.15px #c0c0c0;">30</div>
<div style="position:absolute;left:39.2px;top:116.6px;width:1.2px;height:0.9px;background:#5a5a5a;"></div>
<div class="t" style="position:absolute;left:52.3px;top:127.5px;font-size:7.4px;color:#c0c0c0;white-space:nowrap;line-height:1;-webkit-text-stroke:0.15px #c0c0c0;">36</div>
<div style="position:absolute;left:39.2px;top:130.8px;width:1.2px;height:0.9px;background:#5a5a5a;"></div>
<div class="t" style="position:absolute;left:52.3px;top:140.1px;font-size:7.4px;color:#c0c0c0;white-space:nowrap;line-height:1;-webkit-text-stroke:0.15px #c0c0c0;">42</div>
<div style="position:absolute;left:39.2px;top:143.4px;width:1.2px;height:0.9px;background:#5a5a5a;"></div>
<div class="t" style="position:absolute;left:52.3px;top:151.0px;font-size:7.4px;color:#c0c0c0;white-space:nowrap;line-height:1;-webkit-text-stroke:0.15px #c0c0c0;">48</div>
<div style="position:absolute;left:39.2px;top:154.3px;width:1.2px;height:0.9px;background:#5a5a5a;"></div>
<div class="t" style="position:absolute;left:52.3px;top:160.8px;font-size:7.4px;color:#c0c0c0;white-space:nowrap;line-height:1;-webkit-text-stroke:0.15px #c0c0c0;">54</div>
<div style="position:absolute;left:39.2px;top:164.1px;width:1.2px;height:0.9px;background:#5a5a5a;"></div>
<div class="t" style="position:absolute;left:52.3px;top:170.1px;font-size:7.4px;color:#c0c0c0;white-space:nowrap;line-height:1;-webkit-text-stroke:0.15px #c0c0c0;">60</div>
<div style="position:absolute;left:39.2px;top:173.4px;width:1.2px;height:0.9px;background:#5a5a5a;"></div>
<svg style="position:absolute;left:7.8px;top:119.5px" width="20" height="24"><path d="M6.85 20.79 A8.4 8.4 0 1 1 13.15 20.79" stroke="#151515" stroke-width="1.4" fill="none"/><path d="M10 2.5 V13" stroke="#151515" stroke-width="1.6"/><path d="M7.8 0.8 H12.2 L10 3 Z" fill="#151515"/></svg>
<div class="t" style="position:absolute;left:10.4px;top:144.1px;font-size:9px;color:#2e1c08;white-space:nowrap;width:15.4px;height:15.2px;line-height:15.2px;text-align:center;background:#ffad5e;-webkit-text-stroke:0.35px #2e1c08;">11</div>
<div class="t" style="position:absolute;left:10.2px;top:162.3px;font-size:8px;color:#d0d0d0;white-space:nowrap;width:16px;height:9.5px;line-height:9.5px;text-align:center;background:#1b1b1b;">S</div>
<div style="position:absolute;left:10.2px;top:174.5px;width:16px;height:9px;background:#1b1b1b;"></div>
<svg style="position:absolute;left:14.7px;top:175.5px" width="7" height="7"><circle cx="3.5" cy="3.5" r="2.8" fill="#c8c8c8"/><path d="M2.3 5 L4.7 2" stroke="#1b1b1b" stroke-width="1"/></svg>
</div>
<div style="left:411.6px;top:667px;width:66.6px;height:6px;background:#1c2030;"></div>
<div style="left:412.4px;top:667.7px;width:65.0px;height:4.5px;background:#f7f47c;border-radius:0.8px"></div>
<div style="left:479.5px;top:478.5px;width:66.6px;height:194px;background:#363636;"></div>
<div style="left:479.5px;top:478.5px;width:66.6px;height:194px;overflow:hidden">

<div style="position:absolute;left:0.0px;top:0.0px;width:66.6px;height:12.5px;background:#ffa374;box-shadow:inset 0 0 0 0.8px rgba(0,0,30,0.35);"></div>
<div class="t" style="position:absolute;left:3.2px;top:2.9px;font-size:7.6px;color:#6a3a20;white-space:nowrap;line-height:1;-webkit-text-stroke:0.4px #6a3a20;">Pads</div>
<div class="t" style="position:absolute;left:6.0px;top:18.1px;font-size:7.8px;color:#d0d0d0;white-space:nowrap;width:24.5px;height:7.8px;line-height:7.8px;text-align:center;background:#1e1e1e;border-radius:4px;">-14.4</div>
<div class="t" style="position:absolute;left:6.0px;top:30.5px;font-size:7.8px;color:#d0d0d0;white-space:nowrap;width:25px;height:9px;line-height:9px;text-align:center;background:#1e1e1e;">0</div>
<svg style="position:absolute;left:32.6px;top:30.4px" width="9" height="9"><path d="M0 0 L8.3 4.5 L0 9 Z" fill="#cdcdcd"/></svg>
<div style="position:absolute;left:42.5px;top:17.0px;width:9px;height:167px;background:#151515;"></div>
<div style="position:absolute;left:46.5px;top:17.0px;width:1px;height:167px;background:#222;"></div>
<div style="position:absolute;left:43.0px;top:131.5px;width:4px;height:0px;background:#1d9c3c;"></div>
<div style="position:absolute;left:43.0px;top:131.5px;width:4px;height:51.6px;background:#27ea50;"></div>
<div style="position:absolute;left:47.0px;top:128.8px;width:4px;height:0px;background:#1d9c3c;"></div>
<div style="position:absolute;left:47.0px;top:128.8px;width:4px;height:54.3px;background:#27ea50;"></div>
<div style="position:absolute;left:43.0px;top:74.1px;width:4px;height:1px;background:#27ea50;"></div>
<div style="position:absolute;left:47.0px;top:79.5px;width:4px;height:1px;background:#27ea50;"></div>
<div style="position:absolute;left:46.6px;top:17.0px;width:0.8px;height:167px;background:rgba(0,0,0,0.45);"></div>
<div style="position:absolute;left:41.0px;top:34.5px;width:11px;height:0.9px;background:#8a8a8a;"></div>
<div class="t" style="position:absolute;left:52.3px;top:17.1px;font-size:7.4px;color:#c0c0c0;white-space:nowrap;line-height:1;-webkit-text-stroke:0.15px #c0c0c0;">6</div>
<div style="position:absolute;left:39.2px;top:20.4px;width:1.2px;height:0.9px;background:#5a5a5a;"></div>
<div class="t" style="position:absolute;left:52.3px;top:31.2px;font-size:7.4px;color:#c0c0c0;white-space:nowrap;line-height:1;-webkit-text-stroke:0.15px #c0c0c0;">0</div>
<div style="position:absolute;left:39.2px;top:34.5px;width:1.2px;height:0.9px;background:#5a5a5a;"></div>
<div class="t" style="position:absolute;left:52.3px;top:47.3px;font-size:7.4px;color:#c0c0c0;white-space:nowrap;line-height:1;-webkit-text-stroke:0.15px #c0c0c0;">6</div>
<div style="position:absolute;left:39.2px;top:50.6px;width:1.2px;height:0.9px;background:#5a5a5a;"></div>
<div class="t" style="position:absolute;left:52.3px;top:63.3px;font-size:7.4px;color:#c0c0c0;white-space:nowrap;line-height:1;-webkit-text-stroke:0.15px #c0c0c0;">12</div>
<div style="position:absolute;left:39.2px;top:66.6px;width:1.2px;height:0.9px;background:#5a5a5a;"></div>
<div class="t" style="position:absolute;left:52.3px;top:79.8px;font-size:7.4px;color:#c0c0c0;white-space:nowrap;line-height:1;-webkit-text-stroke:0.15px #c0c0c0;">18</div>
<div style="position:absolute;left:39.2px;top:83.1px;width:1.2px;height:0.9px;background:#5a5a5a;"></div>
<div class="t" style="position:absolute;left:52.3px;top:96.3px;font-size:7.4px;color:#c0c0c0;white-space:nowrap;line-height:1;-webkit-text-stroke:0.15px #c0c0c0;">24</div>
<div style="position:absolute;left:39.2px;top:99.6px;width:1.2px;height:0.9px;background:#5a5a5a;"></div>
<div class="t" style="position:absolute;left:52.3px;top:113.3px;font-size:7.4px;color:#c0c0c0;white-space:nowrap;line-height:1;-webkit-text-stroke:0.15px #c0c0c0;">30</div>
<div style="position:absolute;left:39.2px;top:116.6px;width:1.2px;height:0.9px;background:#5a5a5a;"></div>
<div class="t" style="position:absolute;left:52.3px;top:127.5px;font-size:7.4px;color:#c0c0c0;white-space:nowrap;line-height:1;-webkit-text-stroke:0.15px #c0c0c0;">36</div>
<div style="position:absolute;left:39.2px;top:130.8px;width:1.2px;height:0.9px;background:#5a5a5a;"></div>
<div class="t" style="position:absolute;left:52.3px;top:140.1px;font-size:7.4px;color:#c0c0c0;white-space:nowrap;line-height:1;-webkit-text-stroke:0.15px #c0c0c0;">42</div>
<div style="position:absolute;left:39.2px;top:143.4px;width:1.2px;height:0.9px;background:#5a5a5a;"></div>
<div class="t" style="position:absolute;left:52.3px;top:151.0px;font-size:7.4px;color:#c0c0c0;white-space:nowrap;line-height:1;-webkit-text-stroke:0.15px #c0c0c0;">48</div>
<div style="position:absolute;left:39.2px;top:154.3px;width:1.2px;height:0.9px;background:#5a5a5a;"></div>
<div class="t" style="position:absolute;left:52.3px;top:160.8px;font-size:7.4px;color:#c0c0c0;white-space:nowrap;line-height:1;-webkit-text-stroke:0.15px #c0c0c0;">54</div>
<div style="position:absolute;left:39.2px;top:164.1px;width:1.2px;height:0.9px;background:#5a5a5a;"></div>
<div class="t" style="position:absolute;left:52.3px;top:170.1px;font-size:7.4px;color:#c0c0c0;white-space:nowrap;line-height:1;-webkit-text-stroke:0.15px #c0c0c0;">60</div>
<div style="position:absolute;left:39.2px;top:173.4px;width:1.2px;height:0.9px;background:#5a5a5a;"></div>
<svg style="position:absolute;left:7.8px;top:119.5px" width="20" height="24"><path d="M6.85 20.79 A8.4 8.4 0 1 1 13.15 20.79" stroke="#151515" stroke-width="1.4" fill="none"/><path d="M10 2.5 V13" stroke="#151515" stroke-width="1.6"/><path d="M7.8 0.8 H12.2 L10 3 Z" fill="#151515"/></svg>
<div class="t" style="position:absolute;left:10.4px;top:144.1px;font-size:9px;color:#2e1c08;white-space:nowrap;width:15.4px;height:15.2px;line-height:15.2px;text-align:center;background:#ffad5e;-webkit-text-stroke:0.35px #2e1c08;">12</div>
<div class="t" style="position:absolute;left:10.2px;top:162.3px;font-size:8px;color:#d0d0d0;white-space:nowrap;width:16px;height:9.5px;line-height:9.5px;text-align:center;background:#1b1b1b;">S</div>
</div>
<svg style="left:533.5px;top:480.0px" width="11" height="11"><circle cx="5.5" cy="5.5" r="4.4" stroke="#6a3a20" stroke-width="1.15" fill="none"/><rect x="4" y="3.9" width="3" height="1.3" fill="#6a3a20"/><rect x="4" y="5.9" width="3" height="1.3" fill="#6a3a20"/></svg>
<div style="left:479.5px;top:667px;width:66.6px;height:6px;background:#1c2030;"></div>
<div style="left:480.3px;top:667.7px;width:65.0px;height:4.5px;background:#ffa374;border-radius:0.8px"></div>
<div style="left:546.6px;top:478.5px;width:66.6px;height:194px;background:#363636;"></div>
<div style="left:546.6px;top:478.5px;width:66.6px;height:194px;overflow:hidden">

<div style="position:absolute;left:0.0px;top:0.0px;width:66.6px;height:12.5px;background:#ff94a6;box-shadow:inset 0 0 0 0.8px rgba(0,0,30,0.35);"></div>
<div class="t" style="position:absolute;left:3.2px;top:2.9px;font-size:7.6px;color:#7a2e40;white-space:nowrap;line-height:1;-webkit-text-stroke:0.4px #7a2e40;">Ambience</div>
<div class="t" style="position:absolute;left:6.0px;top:18.1px;font-size:7.8px;color:#d0d0d0;white-space:nowrap;width:24.5px;height:7.8px;line-height:7.8px;text-align:center;background:#1e1e1e;border-radius:4px;">-29.7</div>
<div class="t" style="position:absolute;left:6.0px;top:30.5px;font-size:7.8px;color:#d0d0d0;white-space:nowrap;width:25px;height:9px;line-height:9px;text-align:center;background:#1e1e1e;">-8.3</div>
<svg style="position:absolute;left:32.6px;top:52.6px" width="9" height="9"><path d="M0 0 L8.3 4.5 L0 9 Z" fill="#cdcdcd"/></svg>
<div style="position:absolute;left:42.4px;top:17.0px;width:9px;height:167px;background:#151515;"></div>
<div style="position:absolute;left:46.4px;top:17.0px;width:1px;height:167px;background:#222;"></div>
<div style="position:absolute;left:42.9px;top:125.5px;width:4px;height:19px;background:#1d9c3c;"></div>
<div style="position:absolute;left:42.9px;top:144.5px;width:4px;height:38.6px;background:#27ea50;"></div>
<div style="position:absolute;left:46.9px;top:129.5px;width:4px;height:15px;background:#1d9c3c;"></div>
<div style="position:absolute;left:46.9px;top:144.5px;width:4px;height:38.6px;background:#27ea50;"></div>
<div style="position:absolute;left:42.9px;top:119.2px;width:4px;height:1px;background:#27ea50;"></div>
<div style="position:absolute;left:46.9px;top:115.9px;width:4px;height:1px;background:#27ea50;"></div>
<div style="position:absolute;left:46.5px;top:17.0px;width:0.8px;height:167px;background:rgba(0,0,0,0.45);"></div>
<div style="position:absolute;left:40.9px;top:34.5px;width:11px;height:0.9px;background:#8a8a8a;"></div>
<div class="t" style="position:absolute;left:52.3px;top:17.1px;font-size:7.4px;color:#c0c0c0;white-space:nowrap;line-height:1;-webkit-text-stroke:0.15px #c0c0c0;">6</div>
<div style="position:absolute;left:39.2px;top:20.4px;width:1.2px;height:0.9px;background:#5a5a5a;"></div>
<div class="t" style="position:absolute;left:52.3px;top:31.2px;font-size:7.4px;color:#c0c0c0;white-space:nowrap;line-height:1;-webkit-text-stroke:0.15px #c0c0c0;">0</div>
<div style="position:absolute;left:39.2px;top:34.5px;width:1.2px;height:0.9px;background:#5a5a5a;"></div>
<div class="t" style="position:absolute;left:52.3px;top:47.3px;font-size:7.4px;color:#c0c0c0;white-space:nowrap;line-height:1;-webkit-text-stroke:0.15px #c0c0c0;">6</div>
<div style="position:absolute;left:39.2px;top:50.6px;width:1.2px;height:0.9px;background:#5a5a5a;"></div>
<div class="t" style="position:absolute;left:52.3px;top:63.3px;font-size:7.4px;color:#c0c0c0;white-space:nowrap;line-height:1;-webkit-text-stroke:0.15px #c0c0c0;">12</div>
<div style="position:absolute;left:39.2px;top:66.6px;width:1.2px;height:0.9px;background:#5a5a5a;"></div>
<div class="t" style="position:absolute;left:52.3px;top:79.8px;font-size:7.4px;color:#c0c0c0;white-space:nowrap;line-height:1;-webkit-text-stroke:0.15px #c0c0c0;">18</div>
<div style="position:absolute;left:39.2px;top:83.1px;width:1.2px;height:0.9px;background:#5a5a5a;"></div>
<div class="t" style="position:absolute;left:52.3px;top:96.3px;font-size:7.4px;color:#c0c0c0;white-space:nowrap;line-height:1;-webkit-text-stroke:0.15px #c0c0c0;">24</div>
<div style="position:absolute;left:39.2px;top:99.6px;width:1.2px;height:0.9px;background:#5a5a5a;"></div>
<div class="t" style="position:absolute;left:52.3px;top:113.3px;font-size:7.4px;color:#c0c0c0;white-space:nowrap;line-height:1;-webkit-text-stroke:0.15px #c0c0c0;">30</div>
<div style="position:absolute;left:39.2px;top:116.6px;width:1.2px;height:0.9px;background:#5a5a5a;"></div>
<div class="t" style="position:absolute;left:52.3px;top:127.5px;font-size:7.4px;color:#c0c0c0;white-space:nowrap;line-height:1;-webkit-text-stroke:0.15px #c0c0c0;">36</div>
<div style="position:absolute;left:39.2px;top:130.8px;width:1.2px;height:0.9px;background:#5a5a5a;"></div>
<div class="t" style="position:absolute;left:52.3px;top:140.1px;font-size:7.4px;color:#c0c0c0;white-space:nowrap;line-height:1;-webkit-text-stroke:0.15px #c0c0c0;">42</div>
<div style="position:absolute;left:39.2px;top:143.4px;width:1.2px;height:0.9px;background:#5a5a5a;"></div>
<div class="t" style="position:absolute;left:52.3px;top:151.0px;font-size:7.4px;color:#c0c0c0;white-space:nowrap;line-height:1;-webkit-text-stroke:0.15px #c0c0c0;">48</div>
<div style="position:absolute;left:39.2px;top:154.3px;width:1.2px;height:0.9px;background:#5a5a5a;"></div>
<div class="t" style="position:absolute;left:52.3px;top:160.8px;font-size:7.4px;color:#c0c0c0;white-space:nowrap;line-height:1;-webkit-text-stroke:0.15px #c0c0c0;">54</div>
<div style="position:absolute;left:39.2px;top:164.1px;width:1.2px;height:0.9px;background:#5a5a5a;"></div>
<div class="t" style="position:absolute;left:52.3px;top:170.1px;font-size:7.4px;color:#c0c0c0;white-space:nowrap;line-height:1;-webkit-text-stroke:0.15px #c0c0c0;">60</div>
<div style="position:absolute;left:39.2px;top:173.4px;width:1.2px;height:0.9px;background:#5a5a5a;"></div>
<svg style="position:absolute;left:7.8px;top:119.5px" width="20" height="24"><path d="M6.85 20.79 A8.4 8.4 0 1 1 13.15 20.79" stroke="#151515" stroke-width="1.4" fill="none"/><path d="M10 2.5 V13" stroke="#151515" stroke-width="1.6"/><path d="M7.8 0.8 H12.2 L10 3 Z" fill="#151515"/></svg>
<div class="t" style="position:absolute;left:10.4px;top:144.1px;font-size:9px;color:#2e1c08;white-space:nowrap;width:15.4px;height:15.2px;line-height:15.2px;text-align:center;background:#ffad5e;-webkit-text-stroke:0.35px #2e1c08;">16</div>
<div class="t" style="position:absolute;left:10.2px;top:162.3px;font-size:8px;color:#d0d0d0;white-space:nowrap;width:16px;height:9.5px;line-height:9.5px;text-align:center;background:#1b1b1b;">S</div>
<div style="position:absolute;left:10.2px;top:174.5px;width:16px;height:9px;background:#1b1b1b;"></div>
<svg style="position:absolute;left:14.7px;top:175.5px" width="7" height="7"><circle cx="3.5" cy="3.5" r="2.6" fill="#6c6c6c"/></svg>
</div>
<div style="left:546.6px;top:667px;width:66.6px;height:6px;background:#1c2030;"></div>
<div style="left:547.4px;top:667.7px;width:65.0px;height:4.5px;background:#ff94a6;border-radius:0.8px"></div>
<div style="left:614.2px;top:478.5px;width:66.6px;height:194px;background:#363636;"></div>
<div style="left:614.2px;top:478.5px;width:66.6px;height:194px;overflow:hidden">

<div style="position:absolute;left:0.0px;top:0.0px;width:66.6px;height:12.5px;background:#ff94a6;box-shadow:inset 0 0 0 0.8px rgba(0,0,30,0.35);"></div>
<div class="t" style="position:absolute;left:3.2px;top:2.9px;font-size:7.6px;color:#7a2e40;white-space:nowrap;line-height:1;-webkit-text-stroke:0.4px #7a2e40;">Drone</div>
<div class="t" style="position:absolute;left:6.0px;top:18.1px;font-size:7.8px;color:#d0d0d0;white-space:nowrap;width:24.5px;height:7.8px;line-height:7.8px;text-align:center;background:#1e1e1e;border-radius:4px;">-25.0</div>
<div class="t" style="position:absolute;left:6.0px;top:30.5px;font-size:7.8px;color:#d0d0d0;white-space:nowrap;width:25px;height:9px;line-height:9px;text-align:center;background:#1e1e1e;">-15.6</div>
<svg style="position:absolute;left:32.6px;top:73.0px" width="9" height="9"><path d="M0 0 L8.3 4.5 L0 9 Z" fill="#cdcdcd"/></svg>
<div style="position:absolute;left:41.8px;top:17.0px;width:9px;height:167px;background:#151515;"></div>
<div style="position:absolute;left:45.8px;top:17.0px;width:1px;height:167px;background:#222;"></div>
<div style="position:absolute;left:42.3px;top:110.5px;width:4px;height:22.6px;background:#1d9c3c;"></div>
<div style="position:absolute;left:42.3px;top:133.1px;width:4px;height:50.0px;background:#27ea50;"></div>
<div style="position:absolute;left:46.3px;top:114.5px;width:4px;height:13.7px;background:#1d9c3c;"></div>
<div style="position:absolute;left:46.3px;top:128.2px;width:4px;height:54.9px;background:#27ea50;"></div>
<div style="position:absolute;left:42.3px;top:109.5px;width:4px;height:1px;background:#27ea50;"></div>
<div style="position:absolute;left:46.3px;top:103.5px;width:4px;height:1px;background:#27ea50;"></div>
<div style="position:absolute;left:45.9px;top:17.0px;width:0.8px;height:167px;background:rgba(0,0,0,0.45);"></div>
<div style="position:absolute;left:40.3px;top:34.5px;width:11px;height:0.9px;background:#8a8a8a;"></div>
<div class="t" style="position:absolute;left:52.3px;top:17.1px;font-size:7.4px;color:#c0c0c0;white-space:nowrap;line-height:1;-webkit-text-stroke:0.15px #c0c0c0;">6</div>
<div style="position:absolute;left:39.2px;top:20.4px;width:1.2px;height:0.9px;background:#5a5a5a;"></div>
<div class="t" style="position:absolute;left:52.3px;top:31.2px;font-size:7.4px;color:#c0c0c0;white-space:nowrap;line-height:1;-webkit-text-stroke:0.15px #c0c0c0;">0</div>
<div style="position:absolute;left:39.2px;top:34.5px;width:1.2px;height:0.9px;background:#5a5a5a;"></div>
<div class="t" style="position:absolute;left:52.3px;top:47.3px;font-size:7.4px;color:#c0c0c0;white-space:nowrap;line-height:1;-webkit-text-stroke:0.15px #c0c0c0;">6</div>
<div style="position:absolute;left:39.2px;top:50.6px;width:1.2px;height:0.9px;background:#5a5a5a;"></div>
<div class="t" style="position:absolute;left:52.3px;top:63.3px;font-size:7.4px;color:#c0c0c0;white-space:nowrap;line-height:1;-webkit-text-stroke:0.15px #c0c0c0;">12</div>
<div style="position:absolute;left:39.2px;top:66.6px;width:1.2px;height:0.9px;background:#5a5a5a;"></div>
<div class="t" style="position:absolute;left:52.3px;top:79.8px;font-size:7.4px;color:#c0c0c0;white-space:nowrap;line-height:1;-webkit-text-stroke:0.15px #c0c0c0;">18</div>
<div style="position:absolute;left:39.2px;top:83.1px;width:1.2px;height:0.9px;background:#5a5a5a;"></div>
<div class="t" style="position:absolute;left:52.3px;top:96.3px;font-size:7.4px;color:#c0c0c0;white-space:nowrap;line-height:1;-webkit-text-stroke:0.15px #c0c0c0;">24</div>
<div style="position:absolute;left:39.2px;top:99.6px;width:1.2px;height:0.9px;background:#5a5a5a;"></div>
<div class="t" style="position:absolute;left:52.3px;top:113.3px;font-size:7.4px;color:#c0c0c0;white-space:nowrap;line-height:1;-webkit-text-stroke:0.15px #c0c0c0;">30</div>
<div style="position:absolute;left:39.2px;top:116.6px;width:1.2px;height:0.9px;background:#5a5a5a;"></div>
<div class="t" style="position:absolute;left:52.3px;top:127.5px;font-size:7.4px;color:#c0c0c0;white-space:nowrap;line-height:1;-webkit-text-stroke:0.15px #c0c0c0;">36</div>
<div style="position:absolute;left:39.2px;top:130.8px;width:1.2px;height:0.9px;background:#5a5a5a;"></div>
<div class="t" style="position:absolute;left:52.3px;top:140.1px;font-size:7.4px;color:#c0c0c0;white-space:nowrap;line-height:1;-webkit-text-stroke:0.15px #c0c0c0;">42</div>
<div style="position:absolute;left:39.2px;top:143.4px;width:1.2px;height:0.9px;background:#5a5a5a;"></div>
<div class="t" style="position:absolute;left:52.3px;top:151.0px;font-size:7.4px;color:#c0c0c0;white-space:nowrap;line-height:1;-webkit-text-stroke:0.15px #c0c0c0;">48</div>
<div style="position:absolute;left:39.2px;top:154.3px;width:1.2px;height:0.9px;background:#5a5a5a;"></div>
<div class="t" style="position:absolute;left:52.3px;top:160.8px;font-size:7.4px;color:#c0c0c0;white-space:nowrap;line-height:1;-webkit-text-stroke:0.15px #c0c0c0;">54</div>
<div style="position:absolute;left:39.2px;top:164.1px;width:1.2px;height:0.9px;background:#5a5a5a;"></div>
<div class="t" style="position:absolute;left:52.3px;top:170.1px;font-size:7.4px;color:#c0c0c0;white-space:nowrap;line-height:1;-webkit-text-stroke:0.15px #c0c0c0;">60</div>
<div style="position:absolute;left:39.2px;top:173.4px;width:1.2px;height:0.9px;background:#5a5a5a;"></div>
<svg style="position:absolute;left:7.8px;top:119.5px" width="20" height="24"><path d="M6.85 20.79 A8.4 8.4 0 1 1 13.15 20.79" stroke="#151515" stroke-width="1.4" fill="none"/><path d="M10 2.5 V13" stroke="#151515" stroke-width="1.6"/><path d="M7.8 0.8 H12.2 L10 3 Z" fill="#151515"/></svg>
<div class="t" style="position:absolute;left:10.4px;top:144.1px;font-size:9px;color:#2e1c08;white-space:nowrap;width:15.4px;height:15.2px;line-height:15.2px;text-align:center;background:#ffad5e;-webkit-text-stroke:0.35px #2e1c08;">17</div>
<div class="t" style="position:absolute;left:10.2px;top:162.3px;font-size:8px;color:#d0d0d0;white-space:nowrap;width:16px;height:9.5px;line-height:9.5px;text-align:center;background:#1b1b1b;">S</div>
<div style="position:absolute;left:10.2px;top:174.5px;width:16px;height:9px;background:#1b1b1b;"></div>
<svg style="position:absolute;left:14.7px;top:175.5px" width="7" height="7"><circle cx="3.5" cy="3.5" r="2.6" fill="#6c6c6c"/></svg>
</div>
<div style="left:614.2px;top:667px;width:66.6px;height:6px;background:#1c2030;"></div>
<div style="left:615.0px;top:667.7px;width:65.0px;height:4.5px;background:#ff94a6;border-radius:0.8px"></div>
<div style="left:681.7px;top:478.5px;width:66.6px;height:194px;background:#363636;"></div>
<div style="left:681.7px;top:478.5px;width:66.6px;height:194px;overflow:hidden">

<div style="position:absolute;left:0.0px;top:0.0px;width:66.6px;height:12.5px;background:#d86ce4;box-shadow:inset 0 0 0 0.8px rgba(0,0,30,0.35);"></div>
<div class="t" style="position:absolute;left:3.2px;top:2.9px;font-size:7.6px;color:#4e1a60;white-space:nowrap;line-height:1;-webkit-text-stroke:0.4px #4e1a60;">FX</div>
<div class="t" style="position:absolute;left:6.0px;top:18.1px;font-size:7.8px;color:#d0d0d0;white-space:nowrap;width:24.5px;height:7.8px;line-height:7.8px;text-align:center;background:#1e1e1e;border-radius:4px;">-19.6</div>
<div class="t" style="position:absolute;left:6.0px;top:30.5px;font-size:7.8px;color:#d0d0d0;white-space:nowrap;width:25px;height:9px;line-height:9px;text-align:center;background:#1e1e1e;">-4.1</div>
<svg style="position:absolute;left:32.6px;top:41.7px" width="9" height="9"><path d="M0 0 L8.3 4.5 L0 9 Z" fill="#cdcdcd"/></svg>
<div style="position:absolute;left:42.3px;top:17.0px;width:9px;height:167px;background:#151515;"></div>
<div style="position:absolute;left:46.3px;top:17.0px;width:1px;height:167px;background:#222;"></div>
<div style="position:absolute;left:42.8px;top:96.2px;width:4px;height:18.9px;background:#1d9c3c;"></div>
<div style="position:absolute;left:42.8px;top:115.1px;width:4px;height:68.0px;background:#27ea50;"></div>
<div style="position:absolute;left:46.8px;top:92.1px;width:4px;height:23.0px;background:#1d9c3c;"></div>
<div style="position:absolute;left:46.8px;top:115.1px;width:4px;height:68.0px;background:#27ea50;"></div>
<div style="position:absolute;left:42.8px;top:92.1px;width:4px;height:1px;background:#27ea50;"></div>
<div style="position:absolute;left:46.8px;top:88.5px;width:4px;height:1px;background:#27ea50;"></div>
<div style="position:absolute;left:46.4px;top:17.0px;width:0.8px;height:167px;background:rgba(0,0,0,0.45);"></div>
<div style="position:absolute;left:40.8px;top:34.5px;width:11px;height:0.9px;background:#8a8a8a;"></div>
<div class="t" style="position:absolute;left:52.3px;top:17.1px;font-size:7.4px;color:#c0c0c0;white-space:nowrap;line-height:1;-webkit-text-stroke:0.15px #c0c0c0;">6</div>
<div style="position:absolute;left:39.2px;top:20.4px;width:1.2px;height:0.9px;background:#5a5a5a;"></div>
<div class="t" style="position:absolute;left:52.3px;top:31.2px;font-size:7.4px;color:#c0c0c0;white-space:nowrap;line-height:1;-webkit-text-stroke:0.15px #c0c0c0;">0</div>
<div style="position:absolute;left:39.2px;top:34.5px;width:1.2px;height:0.9px;background:#5a5a5a;"></div>
<div class="t" style="position:absolute;left:52.3px;top:47.3px;font-size:7.4px;color:#c0c0c0;white-space:nowrap;line-height:1;-webkit-text-stroke:0.15px #c0c0c0;">6</div>
<div style="position:absolute;left:39.2px;top:50.6px;width:1.2px;height:0.9px;background:#5a5a5a;"></div>
<div class="t" style="position:absolute;left:52.3px;top:63.3px;font-size:7.4px;color:#c0c0c0;white-space:nowrap;line-height:1;-webkit-text-stroke:0.15px #c0c0c0;">12</div>
<div style="position:absolute;left:39.2px;top:66.6px;width:1.2px;height:0.9px;background:#5a5a5a;"></div>
<div class="t" style="position:absolute;left:52.3px;top:79.8px;font-size:7.4px;color:#c0c0c0;white-space:nowrap;line-height:1;-webkit-text-stroke:0.15px #c0c0c0;">18</div>
<div style="position:absolute;left:39.2px;top:83.1px;width:1.2px;height:0.9px;background:#5a5a5a;"></div>
<div class="t" style="position:absolute;left:52.3px;top:96.3px;font-size:7.4px;color:#c0c0c0;white-space:nowrap;line-height:1;-webkit-text-stroke:0.15px #c0c0c0;">24</div>
<div style="position:absolute;left:39.2px;top:99.6px;width:1.2px;height:0.9px;background:#5a5a5a;"></div>
<div class="t" style="position:absolute;left:52.3px;top:113.3px;font-size:7.4px;color:#c0c0c0;white-space:nowrap;line-height:1;-webkit-text-stroke:0.15px #c0c0c0;">30</div>
<div style="position:absolute;left:39.2px;top:116.6px;width:1.2px;height:0.9px;background:#5a5a5a;"></div>
<div class="t" style="position:absolute;left:52.3px;top:127.5px;font-size:7.4px;color:#c0c0c0;white-space:nowrap;line-height:1;-webkit-text-stroke:0.15px #c0c0c0;">36</div>
<div style="position:absolute;left:39.2px;top:130.8px;width:1.2px;height:0.9px;background:#5a5a5a;"></div>
<div class="t" style="position:absolute;left:52.3px;top:140.1px;font-size:7.4px;color:#c0c0c0;white-space:nowrap;line-height:1;-webkit-text-stroke:0.15px #c0c0c0;">42</div>
<div style="position:absolute;left:39.2px;top:143.4px;width:1.2px;height:0.9px;background:#5a5a5a;"></div>
<div class="t" style="position:absolute;left:52.3px;top:151.0px;font-size:7.4px;color:#c0c0c0;white-space:nowrap;line-height:1;-webkit-text-stroke:0.15px #c0c0c0;">48</div>
<div style="position:absolute;left:39.2px;top:154.3px;width:1.2px;height:0.9px;background:#5a5a5a;"></div>
<div class="t" style="position:absolute;left:52.3px;top:160.8px;font-size:7.4px;color:#c0c0c0;white-space:nowrap;line-height:1;-webkit-text-stroke:0.15px #c0c0c0;">54</div>
<div style="position:absolute;left:39.2px;top:164.1px;width:1.2px;height:0.9px;background:#5a5a5a;"></div>
<div class="t" style="position:absolute;left:52.3px;top:170.1px;font-size:7.4px;color:#c0c0c0;white-space:nowrap;line-height:1;-webkit-text-stroke:0.15px #c0c0c0;">60</div>
<div style="position:absolute;left:39.2px;top:173.4px;width:1.2px;height:0.9px;background:#5a5a5a;"></div>
<svg style="position:absolute;left:7.8px;top:119.5px" width="20" height="24"><path d="M6.85 20.79 A8.4 8.4 0 1 1 13.15 20.79" stroke="#151515" stroke-width="1.4" fill="none"/><path d="M10 2.5 V13" stroke="#151515" stroke-width="1.6"/><path d="M7.8 0.8 H12.2 L10 3 Z" fill="#151515"/></svg>
<div class="t" style="position:absolute;left:10.4px;top:144.1px;font-size:9px;color:#2e1c08;white-space:nowrap;width:15.4px;height:15.2px;line-height:15.2px;text-align:center;background:#ffad5e;-webkit-text-stroke:0.35px #2e1c08;">18</div>
<div class="t" style="position:absolute;left:10.2px;top:162.3px;font-size:8px;color:#d0d0d0;white-space:nowrap;width:16px;height:9.5px;line-height:9.5px;text-align:center;background:#1b1b1b;">S</div>
<div style="position:absolute;left:10.2px;top:174.5px;width:16px;height:9px;background:#1b1b1b;"></div>
<svg style="position:absolute;left:14.7px;top:175.5px" width="7" height="7"><circle cx="3.5" cy="3.5" r="2.6" fill="#6c6c6c"/></svg>
</div>
<div style="left:681.7px;top:667px;width:66.6px;height:6px;background:#1c2030;"></div>
<div style="left:682.5px;top:667.7px;width:65.0px;height:4.5px;background:#d86ce4;border-radius:0.8px"></div>
<div style="left:749.7px;top:478.5px;width:60.6px;height:194px;background:#363636;"></div>
<div style="left:749.7px;top:478.5px;width:60.6px;height:194px;overflow:hidden">

<div style="position:absolute;left:0.0px;top:0.0px;width:60.6px;height:12.5px;background:#d86ce4;box-shadow:inset 0 0 0 0.8px rgba(0,0,30,0.35);"></div>
<div class="t" style="position:absolute;left:3.2px;top:2.9px;font-size:7.6px;color:#4e1a60;white-space:nowrap;line-height:1;-webkit-text-stroke:0.4px #4e1a60;">Zap</div>
<div class="t" style="position:absolute;left:12.0px;top:18.1px;font-size:7.8px;color:#d0d0d0;white-space:nowrap;width:24.5px;height:7.8px;line-height:7.8px;text-align:center;background:#1e1e1e;border-radius:4px;">-24.6</div>
<div class="t" style="position:absolute;left:12.0px;top:30.5px;font-size:7.8px;color:#d0d0d0;white-space:nowrap;width:25px;height:9px;line-height:9px;text-align:center;background:#1e1e1e;">-19.4</div>
<svg style="position:absolute;left:38.6px;top:83.5px" width="9" height="9"><path d="M0 0 L8.3 4.5 L0 9 Z" fill="#cdcdcd"/></svg>
<div style="position:absolute;left:48.3px;top:17.0px;width:9px;height:167px;background:#151515;"></div>
<div style="position:absolute;left:52.3px;top:17.0px;width:1px;height:167px;background:#222;"></div>
<div style="position:absolute;left:48.8px;top:113.2px;width:4px;height:19.9px;background:#1d9c3c;"></div>
<div style="position:absolute;left:48.8px;top:133.1px;width:4px;height:50.0px;background:#27ea50;"></div>
<div style="position:absolute;left:52.8px;top:109.5px;width:4px;height:23.6px;background:#1d9c3c;"></div>
<div style="position:absolute;left:52.8px;top:133.1px;width:4px;height:50.0px;background:#27ea50;"></div>
<div style="position:absolute;left:48.8px;top:102.2px;width:4px;height:1px;background:#27ea50;"></div>
<div style="position:absolute;left:52.8px;top:103.5px;width:4px;height:1px;background:#27ea50;"></div>
<div style="position:absolute;left:52.4px;top:17.0px;width:0.8px;height:167px;background:rgba(0,0,0,0.45);"></div>
<div style="position:absolute;left:46.8px;top:34.5px;width:11px;height:0.9px;background:#8a8a8a;"></div>
<svg style="position:absolute;left:13.8px;top:119.5px" width="20" height="24"><path d="M6.85 20.79 A8.4 8.4 0 1 1 13.15 20.79" stroke="#151515" stroke-width="1.4" fill="none"/><path d="M10 2.5 V13" stroke="#151515" stroke-width="1.6"/><path d="M7.8 0.8 H12.2 L10 3 Z" fill="#151515"/></svg>
<div class="t" style="position:absolute;left:16.4px;top:144.1px;font-size:9px;color:#2e1c08;white-space:nowrap;width:15.4px;height:15.2px;line-height:15.2px;text-align:center;background:#ffad5e;-webkit-text-stroke:0.35px #2e1c08;">19</div>
<div class="t" style="position:absolute;left:16.2px;top:162.3px;font-size:8px;color:#d0d0d0;white-space:nowrap;width:16px;height:9.5px;line-height:9.5px;text-align:center;background:#1b1b1b;">S</div>
<div style="position:absolute;left:16.2px;top:174.5px;width:16px;height:9px;background:#1b1b1b;"></div>
<svg style="position:absolute;left:20.7px;top:175.5px" width="7" height="7"><circle cx="3.5" cy="3.5" r="2.8" fill="#c8c8c8"/><path d="M2.3 5 L4.7 2" stroke="#1b1b1b" stroke-width="1"/></svg>
</div>
<div style="left:749.7px;top:667px;width:60.6px;height:6px;background:#1c2030;"></div>
<div style="left:750.5px;top:667.7px;width:59.0px;height:4.5px;background:#d86ce4;border-radius:0.8px"></div>
<div style="left:812.1px;top:478.5px;width:66.6px;height:194px;background:#363636;"></div>
<div style="left:812.1px;top:478.5px;width:66.6px;height:194px;overflow:hidden">

<div style="position:absolute;left:0.0px;top:0.0px;width:66.6px;height:12.5px;background:#d0d0d0;box-shadow:inset 0 0 0 0.8px rgba(0,0,30,0.35);"></div>
<div class="t" style="position:absolute;left:3.2px;top:2.9px;font-size:7.6px;color:#3a3a3a;white-space:nowrap;line-height:1;-webkit-text-stroke:0.4px #3a3a3a;">A Reverb</div>
<div class="t" style="position:absolute;left:5.2px;top:18.1px;font-size:7.8px;color:#d0d0d0;white-space:nowrap;width:24.5px;height:7.8px;line-height:7.8px;text-align:center;background:#1e1e1e;border-radius:4px;">-50.9</div>
<div class="t" style="position:absolute;left:5.2px;top:30.5px;font-size:7.8px;color:#d0d0d0;white-space:nowrap;width:25px;height:9px;line-height:9px;text-align:center;background:#1e1e1e;">0</div>
<svg style="position:absolute;left:31.8px;top:30.4px" width="9" height="9"><path d="M0 0 L8.3 4.5 L0 9 Z" fill="#cdcdcd"/></svg>
<div style="position:absolute;left:41.9px;top:17.0px;width:9px;height:167px;background:#151515;"></div>
<div style="position:absolute;left:45.9px;top:17.0px;width:1px;height:167px;background:#222;"></div>
<div style="position:absolute;left:42.4px;top:164.5px;width:4px;height:0px;background:#1d9c3c;"></div>
<div style="position:absolute;left:42.4px;top:164.5px;width:4px;height:18.6px;background:#27ea50;"></div>
<div style="position:absolute;left:46.4px;top:162.8px;width:4px;height:0px;background:#1d9c3c;"></div>
<div style="position:absolute;left:46.4px;top:162.8px;width:4px;height:20.3px;background:#27ea50;"></div>
<div style="position:absolute;left:42.4px;top:159.8px;width:4px;height:1px;background:#27ea50;"></div>
<div style="position:absolute;left:46.4px;top:162.5px;width:4px;height:1px;background:#27ea50;"></div>
<div style="position:absolute;left:46.0px;top:17.0px;width:0.8px;height:167px;background:rgba(0,0,0,0.45);"></div>
<div style="position:absolute;left:40.4px;top:34.5px;width:11px;height:0.9px;background:#8a8a8a;"></div>
<div class="t" style="position:absolute;left:51.5px;top:17.1px;font-size:7.4px;color:#c0c0c0;white-space:nowrap;line-height:1;-webkit-text-stroke:0.15px #c0c0c0;">6</div>
<div style="position:absolute;left:38.4px;top:20.4px;width:1.2px;height:0.9px;background:#5a5a5a;"></div>
<div class="t" style="position:absolute;left:51.5px;top:31.2px;font-size:7.4px;color:#c0c0c0;white-space:nowrap;line-height:1;-webkit-text-stroke:0.15px #c0c0c0;">0</div>
<div style="position:absolute;left:38.4px;top:34.5px;width:1.2px;height:0.9px;background:#5a5a5a;"></div>
<div class="t" style="position:absolute;left:51.5px;top:47.3px;font-size:7.4px;color:#c0c0c0;white-space:nowrap;line-height:1;-webkit-text-stroke:0.15px #c0c0c0;">6</div>
<div style="position:absolute;left:38.4px;top:50.6px;width:1.2px;height:0.9px;background:#5a5a5a;"></div>
<div class="t" style="position:absolute;left:51.5px;top:63.3px;font-size:7.4px;color:#c0c0c0;white-space:nowrap;line-height:1;-webkit-text-stroke:0.15px #c0c0c0;">12</div>
<div style="position:absolute;left:38.4px;top:66.6px;width:1.2px;height:0.9px;background:#5a5a5a;"></div>
<div class="t" style="position:absolute;left:51.5px;top:79.8px;font-size:7.4px;color:#c0c0c0;white-space:nowrap;line-height:1;-webkit-text-stroke:0.15px #c0c0c0;">18</div>
<div style="position:absolute;left:38.4px;top:83.1px;width:1.2px;height:0.9px;background:#5a5a5a;"></div>
<div class="t" style="position:absolute;left:51.5px;top:96.3px;font-size:7.4px;color:#c0c0c0;white-space:nowrap;line-height:1;-webkit-text-stroke:0.15px #c0c0c0;">24</div>
<div style="position:absolute;left:38.4px;top:99.6px;width:1.2px;height:0.9px;background:#5a5a5a;"></div>
<div class="t" style="position:absolute;left:51.5px;top:113.3px;font-size:7.4px;color:#c0c0c0;white-space:nowrap;line-height:1;-webkit-text-stroke:0.15px #c0c0c0;">30</div>
<div style="position:absolute;left:38.4px;top:116.6px;width:1.2px;height:0.9px;background:#5a5a5a;"></div>
<div class="t" style="position:absolute;left:51.5px;top:127.5px;font-size:7.4px;color:#c0c0c0;white-space:nowrap;line-height:1;-webkit-text-stroke:0.15px #c0c0c0;">36</div>
<div style="position:absolute;left:38.4px;top:130.8px;width:1.2px;height:0.9px;background:#5a5a5a;"></div>
<div class="t" style="position:absolute;left:51.5px;top:140.1px;font-size:7.4px;color:#c0c0c0;white-space:nowrap;line-height:1;-webkit-text-stroke:0.15px #c0c0c0;">42</div>
<div style="position:absolute;left:38.4px;top:143.4px;width:1.2px;height:0.9px;background:#5a5a5a;"></div>
<div class="t" style="position:absolute;left:51.5px;top:151.0px;font-size:7.4px;color:#c0c0c0;white-space:nowrap;line-height:1;-webkit-text-stroke:0.15px #c0c0c0;">48</div>
<div style="position:absolute;left:38.4px;top:154.3px;width:1.2px;height:0.9px;background:#5a5a5a;"></div>
<div class="t" style="position:absolute;left:51.5px;top:160.8px;font-size:7.4px;color:#c0c0c0;white-space:nowrap;line-height:1;-webkit-text-stroke:0.15px #c0c0c0;">54</div>
<div style="position:absolute;left:38.4px;top:164.1px;width:1.2px;height:0.9px;background:#5a5a5a;"></div>
<div class="t" style="position:absolute;left:51.5px;top:170.1px;font-size:7.4px;color:#c0c0c0;white-space:nowrap;line-height:1;-webkit-text-stroke:0.15px #c0c0c0;">60</div>
<div style="position:absolute;left:38.4px;top:173.4px;width:1.2px;height:0.9px;background:#5a5a5a;"></div>
<svg style="position:absolute;left:7.0px;top:119.5px" width="20" height="24"><path d="M6.85 20.79 A8.4 8.4 0 1 1 13.15 20.79" stroke="#151515" stroke-width="1.4" fill="none"/><path d="M10 2.5 V13" stroke="#151515" stroke-width="1.6"/><path d="M7.8 0.8 H12.2 L10 3 Z" fill="#151515"/></svg>
<div class="t" style="position:absolute;left:9.6px;top:144.1px;font-size:9px;color:#2e1c08;white-space:nowrap;width:15.4px;height:15.2px;line-height:15.2px;text-align:center;background:#ffad5e;-webkit-text-stroke:0.35px #2e1c08;">A</div>
<div class="t" style="position:absolute;left:9.4px;top:162.3px;font-size:8px;color:#d0d0d0;white-space:nowrap;width:16px;height:9.5px;line-height:9.5px;text-align:center;background:#1b1b1b;">S</div>
</div>
<div style="left:812.1px;top:667px;width:66.6px;height:6px;background:#1c2030;"></div>
<div style="left:812.9px;top:667.7px;width:65.0px;height:4.5px;background:#d0d0d0;border-radius:0.8px"></div>
<div style="left:879.5px;top:478.5px;width:66.6px;height:194px;background:#363636;"></div>
<div style="left:879.5px;top:478.5px;width:66.6px;height:194px;overflow:hidden">

<div style="position:absolute;left:0.0px;top:0.0px;width:66.6px;height:12.5px;background:#d0d0d0;box-shadow:inset 0 0 0 0.8px rgba(0,0,30,0.35);"></div>
<div class="t" style="position:absolute;left:3.2px;top:2.9px;font-size:7.6px;color:#3a3a3a;white-space:nowrap;line-height:1;-webkit-text-stroke:0.4px #3a3a3a;">B Delay</div>
<div class="t" style="position:absolute;left:6.0px;top:18.1px;font-size:7.8px;color:#d0d0d0;white-space:nowrap;width:24.5px;height:7.8px;line-height:7.8px;text-align:center;background:#1e1e1e;border-radius:4px;">-55.2</div>
<div class="t" style="position:absolute;left:6.0px;top:30.5px;font-size:7.8px;color:#d0d0d0;white-space:nowrap;width:25px;height:9px;line-height:9px;text-align:center;background:#1e1e1e;">0</div>
<svg style="position:absolute;left:32.6px;top:30.4px" width="9" height="9"><path d="M0 0 L8.3 4.5 L0 9 Z" fill="#cdcdcd"/></svg>
<div style="position:absolute;left:42.5px;top:17.0px;width:9px;height:167px;background:#151515;"></div>
<div style="position:absolute;left:46.5px;top:17.0px;width:1px;height:167px;background:#222;"></div>
<div style="position:absolute;left:43.0px;top:171.5px;width:4px;height:0px;background:#1d9c3c;"></div>
<div style="position:absolute;left:43.0px;top:171.5px;width:4px;height:11.6px;background:#27ea50;"></div>
<div style="position:absolute;left:47.0px;top:166.5px;width:4px;height:0px;background:#1d9c3c;"></div>
<div style="position:absolute;left:47.0px;top:166.5px;width:4px;height:16.6px;background:#27ea50;"></div>
<div style="position:absolute;left:43.0px;top:165.5px;width:4px;height:1px;background:#27ea50;"></div>
<div style="position:absolute;left:47.0px;top:164.5px;width:4px;height:1px;background:#27ea50;"></div>
<div style="position:absolute;left:46.6px;top:17.0px;width:0.8px;height:167px;background:rgba(0,0,0,0.45);"></div>
<div style="position:absolute;left:41.0px;top:34.5px;width:11px;height:0.9px;background:#8a8a8a;"></div>
<div class="t" style="position:absolute;left:52.3px;top:17.1px;font-size:7.4px;color:#c0c0c0;white-space:nowrap;line-height:1;-webkit-text-stroke:0.15px #c0c0c0;">6</div>
<div style="position:absolute;left:39.2px;top:20.4px;width:1.2px;height:0.9px;background:#5a5a5a;"></div>
<div class="t" style="position:absolute;left:52.3px;top:31.2px;font-size:7.4px;color:#c0c0c0;white-space:nowrap;line-height:1;-webkit-text-stroke:0.15px #c0c0c0;">0</div>
<div style="position:absolute;left:39.2px;top:34.5px;width:1.2px;height:0.9px;background:#5a5a5a;"></div>
<div class="t" style="position:absolute;left:52.3px;top:47.3px;font-size:7.4px;color:#c0c0c0;white-space:nowrap;line-height:1;-webkit-text-stroke:0.15px #c0c0c0;">6</div>
<div style="position:absolute;left:39.2px;top:50.6px;width:1.2px;height:0.9px;background:#5a5a5a;"></div>
<div class="t" style="position:absolute;left:52.3px;top:63.3px;font-size:7.4px;color:#c0c0c0;white-space:nowrap;line-height:1;-webkit-text-stroke:0.15px #c0c0c0;">12</div>
<div style="position:absolute;left:39.2px;top:66.6px;width:1.2px;height:0.9px;background:#5a5a5a;"></div>
<div class="t" style="position:absolute;left:52.3px;top:79.8px;font-size:7.4px;color:#c0c0c0;white-space:nowrap;line-height:1;-webkit-text-stroke:0.15px #c0c0c0;">18</div>
<div style="position:absolute;left:39.2px;top:83.1px;width:1.2px;height:0.9px;background:#5a5a5a;"></div>
<div class="t" style="position:absolute;left:52.3px;top:96.3px;font-size:7.4px;color:#c0c0c0;white-space:nowrap;line-height:1;-webkit-text-stroke:0.15px #c0c0c0;">24</div>
<div style="position:absolute;left:39.2px;top:99.6px;width:1.2px;height:0.9px;background:#5a5a5a;"></div>
<div class="t" style="position:absolute;left:52.3px;top:113.3px;font-size:7.4px;color:#c0c0c0;white-space:nowrap;line-height:1;-webkit-text-stroke:0.15px #c0c0c0;">30</div>
<div style="position:absolute;left:39.2px;top:116.6px;width:1.2px;height:0.9px;background:#5a5a5a;"></div>
<div class="t" style="position:absolute;left:52.3px;top:127.5px;font-size:7.4px;color:#c0c0c0;white-space:nowrap;line-height:1;-webkit-text-stroke:0.15px #c0c0c0;">36</div>
<div style="position:absolute;left:39.2px;top:130.8px;width:1.2px;height:0.9px;background:#5a5a5a;"></div>
<div class="t" style="position:absolute;left:52.3px;top:140.1px;font-size:7.4px;color:#c0c0c0;white-space:nowrap;line-height:1;-webkit-text-stroke:0.15px #c0c0c0;">42</div>
<div style="position:absolute;left:39.2px;top:143.4px;width:1.2px;height:0.9px;background:#5a5a5a;"></div>
<div class="t" style="position:absolute;left:52.3px;top:151.0px;font-size:7.4px;color:#c0c0c0;white-space:nowrap;line-height:1;-webkit-text-stroke:0.15px #c0c0c0;">48</div>
<div style="position:absolute;left:39.2px;top:154.3px;width:1.2px;height:0.9px;background:#5a5a5a;"></div>
<div class="t" style="position:absolute;left:52.3px;top:160.8px;font-size:7.4px;color:#c0c0c0;white-space:nowrap;line-height:1;-webkit-text-stroke:0.15px #c0c0c0;">54</div>
<div style="position:absolute;left:39.2px;top:164.1px;width:1.2px;height:0.9px;background:#5a5a5a;"></div>
<div class="t" style="position:absolute;left:52.3px;top:170.1px;font-size:7.4px;color:#c0c0c0;white-space:nowrap;line-height:1;-webkit-text-stroke:0.15px #c0c0c0;">60</div>
<div style="position:absolute;left:39.2px;top:173.4px;width:1.2px;height:0.9px;background:#5a5a5a;"></div>
<svg style="position:absolute;left:7.8px;top:119.5px" width="20" height="24"><path d="M6.85 20.79 A8.4 8.4 0 1 1 13.15 20.79" stroke="#151515" stroke-width="1.4" fill="none"/><path d="M10 2.5 V13" stroke="#151515" stroke-width="1.6"/><path d="M7.8 0.8 H12.2 L10 3 Z" fill="#151515"/></svg>
<div class="t" style="position:absolute;left:10.4px;top:144.1px;font-size:9px;color:#2e1c08;white-space:nowrap;width:15.4px;height:15.2px;line-height:15.2px;text-align:center;background:#ffad5e;-webkit-text-stroke:0.35px #2e1c08;">B</div>
<div class="t" style="position:absolute;left:10.2px;top:162.3px;font-size:8px;color:#d0d0d0;white-space:nowrap;width:16px;height:9.5px;line-height:9.5px;text-align:center;background:#1b1b1b;">S</div>
</div>
<div style="left:879.5px;top:667px;width:66.6px;height:6px;background:#1c2030;"></div>
<div style="left:880.3px;top:667.7px;width:65.0px;height:4.5px;background:#d0d0d0;border-radius:0.8px"></div>
<div style="left:946.9px;top:478.5px;width:71px;height:194px;background:#363636;"></div>
<div style="left:946.9px;top:478.5px;width:71px;height:194px;overflow:hidden">

<div style="position:absolute;left:0.0px;top:0.0px;width:71px;height:12.5px;background:#ffffff;box-shadow:inset 0 0 0 0.8px rgba(0,0,30,0.35);"></div>
<div class="t" style="position:absolute;left:3.2px;top:2.9px;font-size:7.6px;color:#444;white-space:nowrap;line-height:1;-webkit-text-stroke:0.4px #444;">Main</div>
<div class="t" style="position:absolute;left:7.5px;top:18.1px;font-size:7.8px;color:#d0d0d0;white-space:nowrap;width:24.5px;height:7.8px;line-height:7.8px;text-align:center;background:#1e1e1e;border-radius:4px;">-0.30</div>
<div class="t" style="position:absolute;left:7.5px;top:30.5px;font-size:7.8px;color:#d0d0d0;white-space:nowrap;width:25px;height:9px;line-height:9px;text-align:center;background:#1e1e1e;">0</div>
<svg style="position:absolute;left:34.1px;top:30.4px" width="9" height="9"><path d="M0 0 L8.3 4.5 L0 9 Z" fill="#cdcdcd"/></svg>
<div style="position:absolute;left:44.1px;top:17.0px;width:9px;height:167px;background:#151515;"></div>
<div style="position:absolute;left:48.1px;top:17.0px;width:1px;height:167px;background:#222;"></div>
<div style="position:absolute;left:44.6px;top:75.4px;width:4px;height:5px;background:#b8e030;"></div>
<div style="position:absolute;left:44.6px;top:77.5px;width:4px;height:105.6px;background:#27ea50;"></div>
<div style="position:absolute;left:48.6px;top:75.4px;width:4px;height:5px;background:#b8e030;"></div>
<div style="position:absolute;left:48.6px;top:77.5px;width:4px;height:105.6px;background:#27ea50;"></div>
<div style="position:absolute;left:48.2px;top:17.0px;width:0.8px;height:167px;background:rgba(0,0,0,0.45);"></div>
<div style="position:absolute;left:42.6px;top:34.5px;width:11px;height:0.9px;background:#d06a40;"></div>
<div class="t" style="position:absolute;left:53.8px;top:17.1px;font-size:7.4px;color:#c0c0c0;white-space:nowrap;line-height:1;-webkit-text-stroke:0.15px #c0c0c0;">6</div>
<div style="position:absolute;left:40.7px;top:20.4px;width:1.2px;height:0.9px;background:#5a5a5a;"></div>
<div class="t" style="position:absolute;left:53.8px;top:31.2px;font-size:7.4px;color:#c0c0c0;white-space:nowrap;line-height:1;-webkit-text-stroke:0.15px #c0c0c0;">0</div>
<div style="position:absolute;left:40.7px;top:34.5px;width:1.2px;height:0.9px;background:#5a5a5a;"></div>
<div class="t" style="position:absolute;left:53.8px;top:47.3px;font-size:7.4px;color:#c0c0c0;white-space:nowrap;line-height:1;-webkit-text-stroke:0.15px #c0c0c0;">6</div>
<div style="position:absolute;left:40.7px;top:50.6px;width:1.2px;height:0.9px;background:#5a5a5a;"></div>
<div class="t" style="position:absolute;left:53.8px;top:63.3px;font-size:7.4px;color:#c0c0c0;white-space:nowrap;line-height:1;-webkit-text-stroke:0.15px #c0c0c0;">12</div>
<div style="position:absolute;left:40.7px;top:66.6px;width:1.2px;height:0.9px;background:#5a5a5a;"></div>
<div class="t" style="position:absolute;left:53.8px;top:79.8px;font-size:7.4px;color:#c0c0c0;white-space:nowrap;line-height:1;-webkit-text-stroke:0.15px #c0c0c0;">18</div>
<div style="position:absolute;left:40.7px;top:83.1px;width:1.2px;height:0.9px;background:#5a5a5a;"></div>
<div class="t" style="position:absolute;left:53.8px;top:96.3px;font-size:7.4px;color:#c0c0c0;white-space:nowrap;line-height:1;-webkit-text-stroke:0.15px #c0c0c0;">24</div>
<div style="position:absolute;left:40.7px;top:99.6px;width:1.2px;height:0.9px;background:#5a5a5a;"></div>
<div class="t" style="position:absolute;left:53.8px;top:113.3px;font-size:7.4px;color:#c0c0c0;white-space:nowrap;line-height:1;-webkit-text-stroke:0.15px #c0c0c0;">30</div>
<div style="position:absolute;left:40.7px;top:116.6px;width:1.2px;height:0.9px;background:#5a5a5a;"></div>
<div class="t" style="position:absolute;left:53.8px;top:127.5px;font-size:7.4px;color:#c0c0c0;white-space:nowrap;line-height:1;-webkit-text-stroke:0.15px #c0c0c0;">36</div>
<div style="position:absolute;left:40.7px;top:130.8px;width:1.2px;height:0.9px;background:#5a5a5a;"></div>
<div class="t" style="position:absolute;left:53.8px;top:140.1px;font-size:7.4px;color:#c0c0c0;white-space:nowrap;line-height:1;-webkit-text-stroke:0.15px #c0c0c0;">42</div>
<div style="position:absolute;left:40.7px;top:143.4px;width:1.2px;height:0.9px;background:#5a5a5a;"></div>
<div class="t" style="position:absolute;left:53.8px;top:151.0px;font-size:7.4px;color:#c0c0c0;white-space:nowrap;line-height:1;-webkit-text-stroke:0.15px #c0c0c0;">48</div>
<div style="position:absolute;left:40.7px;top:154.3px;width:1.2px;height:0.9px;background:#5a5a5a;"></div>
<div class="t" style="position:absolute;left:53.8px;top:160.8px;font-size:7.4px;color:#c0c0c0;white-space:nowrap;line-height:1;-webkit-text-stroke:0.15px #c0c0c0;">54</div>
<div style="position:absolute;left:40.7px;top:164.1px;width:1.2px;height:0.9px;background:#5a5a5a;"></div>
<div class="t" style="position:absolute;left:53.8px;top:170.1px;font-size:7.4px;color:#c0c0c0;white-space:nowrap;line-height:1;-webkit-text-stroke:0.15px #c0c0c0;">60</div>
<div style="position:absolute;left:40.7px;top:173.4px;width:1.2px;height:0.9px;background:#5a5a5a;"></div>
<svg style="position:absolute;left:9.3px;top:117.8px" width="20" height="24"><path d="M6.85 20.79 A8.4 8.4 0 1 1 13.15 20.79" stroke="#151515" stroke-width="1.4" fill="none"/><path d="M10 2.5 V13" stroke="#151515" stroke-width="1.6"/><path d="M7.8 0.8 H12.2 L10 3 Z" fill="#151515"/></svg>
</div>
<div style="left:946.9px;top:667px;width:71px;height:6px;background:#1c2030;"></div>
<div style="left:947.7px;top:667.7px;width:69.4px;height:4.5px;background:#ffffff;border-radius:0.8px"></div>
<div style="left:959.3px;top:629.8px;width:15.8px;height:7.6px;background:#5c5c5c;box-shadow:inset 0 0 0 0.6px #888;"></div>
<div class="t" style="left:959.3px;top:629.8px;font-size:7px;color:#1e1e1e;width:15.8px;height:7.6px;line-height:7.6px;text-align:center;">Solo</div>
<svg style="left:956.7px;top:639.7px" width="20" height="20"><path d="M4.5 16.5 A8 8 0 1 1 15.5 16.5" stroke="#5a78c8" stroke-width="1.6" fill="none"/><path d="M10 10 L16.5 12.5" stroke="#111" stroke-width="1.8"/><path d="M7.8 18.5 V16.8 A2.2 2.2 0 0 1 12.2 16.8 V18.5" stroke="#ddd" stroke-width="1.1" fill="none"/></svg>
<div style="left:0px;top:675.5px;width:1024px;height:21.5px;background:#262626;"></div>
<div style="left:8px;top:680px;width:10px;height:10px;background:#4a4a4a;border-radius:50%"></div>
<div class="t" style="left:8px;top:680px;font-size:8px;color:#222;width:10px;height:10px;line-height:10px;text-align:center;font-weight:bold;">i</div>
<div style="left:30px;top:678px;width:641px;height:15px;background:#2e2e2e;"></div>
<svg style="left:680px;top:682px" width="7" height="7"><path d="M0 0 L6 3.5 L0 7 Z" fill="#aaa"/></svg>
<div style="left:691px;top:678px;width:142.5px;height:15px;background:#303030;"></div>
<div style="left:694.0px;top:684px;width:2px;height:1px;background:#222;"></div>
<div style="left:698.7px;top:686px;width:2px;height:1px;background:#222;"></div>
<div style="left:703.4px;top:688px;width:2px;height:1px;background:#222;"></div>
<div style="left:708.1px;top:685px;width:2px;height:1px;background:#222;"></div>
<div style="left:712.8px;top:687px;width:2px;height:1px;background:#222;"></div>
<div style="left:717.5px;top:684px;width:2px;height:1px;background:#222;"></div>
<div style="left:722.2px;top:686px;width:2px;height:1px;background:#222;"></div>
<div style="left:726.9px;top:688px;width:2px;height:1px;background:#222;"></div>
<div style="left:731.6px;top:685px;width:2px;height:1px;background:#222;"></div>
<div style="left:736.3px;top:687px;width:2px;height:1px;background:#222;"></div>
<div style="left:741.0px;top:684px;width:2px;height:1px;background:#222;"></div>
<div style="left:745.7px;top:686px;width:2px;height:1px;background:#222;"></div>
<div style="left:750.4px;top:688px;width:2px;height:1px;background:#222;"></div>
<div style="left:755.1px;top:685px;width:2px;height:1px;background:#222;"></div>
<div style="left:759.8px;top:687px;width:2px;height:1px;background:#222;"></div>
<div style="left:764.5px;top:684px;width:2px;height:1px;background:#222;"></div>
<div style="left:769.2px;top:686px;width:2px;height:1px;background:#222;"></div>
<div style="left:773.9px;top:688px;width:2px;height:1px;background:#222;"></div>
<div style="left:778.6px;top:685px;width:2px;height:1px;background:#222;"></div>
<div style="left:783.3px;top:687px;width:2px;height:1px;background:#222;"></div>
<div style="left:788.0px;top:684px;width:2px;height:1px;background:#222;"></div>
<div style="left:792.7px;top:686px;width:2px;height:1px;background:#222;"></div>
<div style="left:797.4px;top:688px;width:2px;height:1px;background:#222;"></div>
<div style="left:802.1px;top:685px;width:2px;height:1px;background:#222;"></div>
<div style="left:806.8px;top:687px;width:2px;height:1px;background:#222;"></div>
<div style="left:811.5px;top:684px;width:2px;height:1px;background:#222;"></div>
<div style="left:816.2px;top:686px;width:2px;height:1px;background:#222;"></div>
<div style="left:820.9px;top:688px;width:2px;height:1px;background:#222;"></div>
<div style="left:825.6px;top:685px;width:2px;height:1px;background:#222;"></div>
<div style="left:830.3px;top:687px;width:2px;height:1px;background:#222;"></div>
<div style="left:801px;top:679px;width:1.5px;height:13px;background:#ccc;"></div>
<svg style="left:843px;top:682px" width="7" height="7"><path d="M0 0 L6 3.5 L0 7 Z" fill="#aaa"/></svg>
<div class="t" style="left:859px;top:681.5px;font-size:8px;color:#c8c8c8;line-height:1;-webkit-text-stroke:0.2px #c8c8c8;">Bass</div>
<svg style="left:878.6px;top:678.5px" width="106" height="15"><rect x="0" y="0" width="106" height="15" fill="#1e2424"/><rect x="0" y="0" width="14" height="15" fill="#203034"/><rect x="1" y="1.5" width="11" height="2" fill="#3a8a8c"/><rect x="1" y="9" width="11" height="1.5" fill="#b07030"/><rect x="2" y="5" width="8" height="1" fill="#556"/><rect x="14.5" y="0" width="5" height="15" fill="#2e3634"/><rect x="15" y="4" width="3" height="1" fill="#777"/><rect x="15" y="9" width="3" height="1" fill="#777"/><rect x="20" y="0" width="26" height="15" fill="#142024"/><rect x="21" y="2" width="10" height="1.5" fill="#2a7a80"/><rect x="22" y="6" width="20" height="6" fill="#0e1a1c"/><rect x="33" y="3" width="8" height="1" fill="#3a6a70"/><rect x="46.5" y="0" width="20" height="15" fill="#2a3430"/><rect x="48" y="3" width="3" height="9" fill="#445048"/><rect x="53" y="3" width="3" height="9" fill="#445048"/><rect x="58" y="3" width="3" height="9" fill="#445048"/><rect x="62" y="1" width="3" height="2" fill="#a07040"/><rect x="67" y="0" width="17" height="15" fill="#222a30"/><rect x="70" y="6" width="5" height="6" fill="#3a5070"/><rect x="77" y="3" width="5" height="2" fill="#667"/><rect x="77" y="8" width="5" height="2" fill="#667"/><rect x="84.5" y="0" width="21" height="15" fill="#101414"/><rect x="86" y="3" width="12" height="9" fill="#1a1e1e"/><rect x="100" y="2" width="4" height="1" fill="#888"/><rect x="100" y="6" width="4" height="1" fill="#666"/></svg>
<div style="left:995.0px;top:685px;width:1.5px;height:6px;background:#f0a040;"></div>
<div style="left:997.5px;top:681px;width:1.5px;height:10px;background:#f0a040;"></div>
<div style="left:1000.0px;top:683px;width:1.5px;height:8px;background:#f0a040;"></div>
<div style="left:1002.5px;top:679px;width:1.5px;height:12px;background:#f0a040;"></div>
<div style="left:1005.0px;top:684px;width:1.5px;height:7px;background:#f0a040;"></div>
<div class="t" style="left:1011px;top:682px;font-size:6px;color:#666;line-height:1;">▾</div>
</body></html>
